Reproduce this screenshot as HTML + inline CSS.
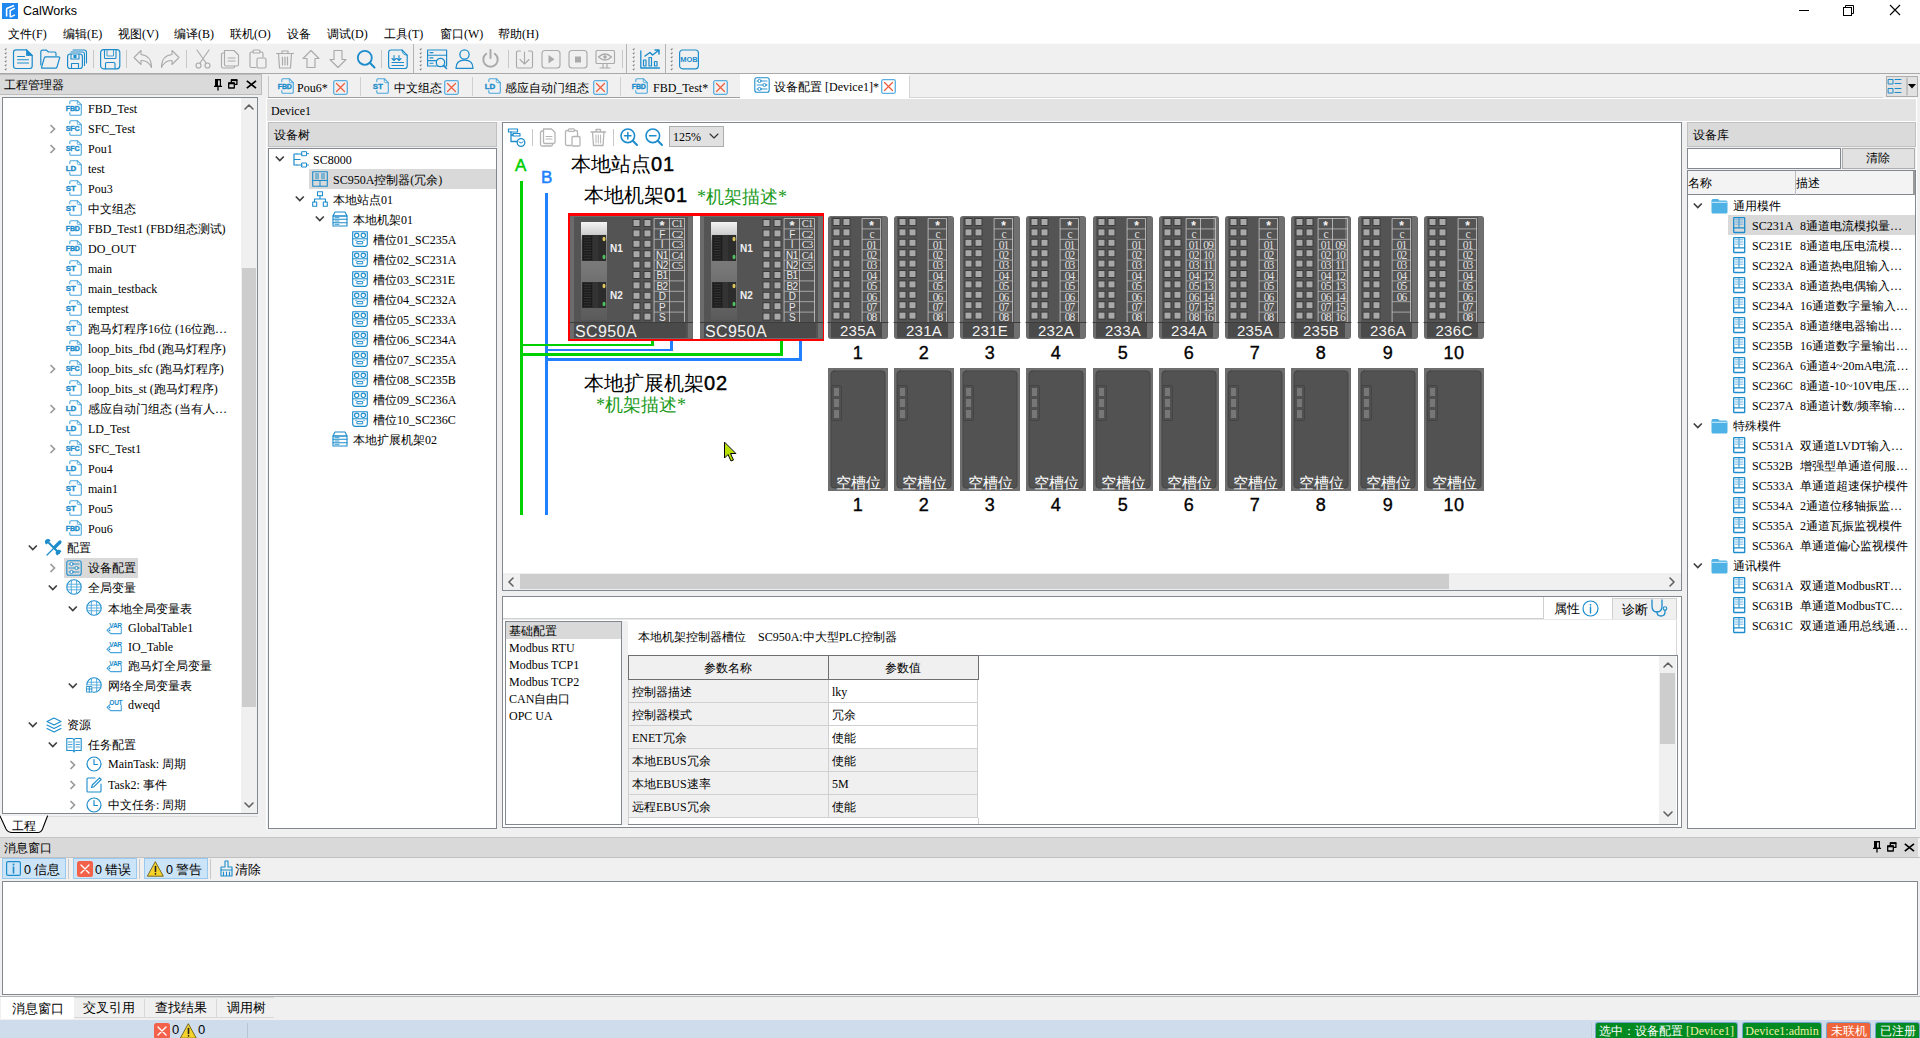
<!DOCTYPE html><html><head><meta charset="utf-8"><style>
*{box-sizing:border-box;margin:0;padding:0}
html,body{width:1920px;height:1038px;overflow:hidden;background:#f0f0f0;font-family:"Liberation Serif",serif;font-size:12px;color:#000}
.t{position:absolute;white-space:nowrap;line-height:16px;height:16px}
.s{font-family:"Liberation Sans",sans-serif}
svg{position:absolute;overflow:visible}
</style></head><body>
<div style="position:absolute;left:0px;top:0px;width:1920px;height:43px;background:#fff"></div>
<svg style="left:2px;top:3px" width="16" height="16"><rect width="16" height="16" fill="#1e88f0"/><path d="M4.6 13.5 V6.2 Q4.6 5.6 5.2 5.3 L12 2.6" stroke="#fff" stroke-width="1.6" fill="none"/><path d="M8.2 14.2 V7.5 L12.8 5.2 M8.2 14.2 L13 11.8" stroke="#fff" stroke-width="1.5" fill="none"/></svg>
<div class="t s" style="left:23px;top:3px;font-size:12.5px;">CalWorks</div>
<svg style="left:1799px;top:5px" width="110" height="12"><path d="M0 5.5 H10" stroke="#000" stroke-width="1"/><rect x="44.5" y="2.5" width="8" height="8" fill="none" stroke="#000"/><path d="M46.5 2.5 V0.5 H54.5 V8.5 H52.5" fill="none" stroke="#000"/><path d="M91 0 L101 10 M101 0 L91 10" stroke="#000" stroke-width="1.1"/></svg>
<div class="t" style="left:8px;top:26px;">文件(F)</div>
<div class="t" style="left:63px;top:26px;">编辑(E)</div>
<div class="t" style="left:118px;top:26px;">视图(V)</div>
<div class="t" style="left:174px;top:26px;">编译(B)</div>
<div class="t" style="left:230px;top:26px;">联机(O)</div>
<div class="t" style="left:287px;top:26px;">设备</div>
<div class="t" style="left:327px;top:26px;">调试(D)</div>
<div class="t" style="left:384px;top:26px;">工具(T)</div>
<div class="t" style="left:440px;top:26px;">窗口(W)</div>
<div class="t" style="left:498px;top:26px;">帮助(H)</div>
<div style="position:absolute;left:0px;top:43px;width:1920px;height:1px;background:#fafafa"></div>
<div style="position:absolute;left:0px;top:44px;width:1920px;height:29px;background:#f0f0f0"></div>
<div style="position:absolute;left:0px;top:73px;width:1920px;height:1px;background:#a9a9a9"></div>
<div style="position:absolute;left:413px;top:44px;width:1px;height:29px;background:#b4b4b4"></div>
<div style="position:absolute;left:626px;top:44px;width:1px;height:29px;background:#b4b4b4"></div>
<div style="position:absolute;left:665px;top:44px;width:1px;height:29px;background:#b4b4b4"></div>
<svg style="left:4px;top:48px" width="3" height="24"><path d="M0.5 2.5 L2.5 0.5" stroke="#8c8c8c" stroke-width="1.1"/><rect x="0" y="2" width="1" height="1" fill="#fff"/><path d="M0.5 6.5 L2.5 4.5" stroke="#8c8c8c" stroke-width="1.1"/><rect x="0" y="6" width="1" height="1" fill="#fff"/><path d="M0.5 10.5 L2.5 8.5" stroke="#8c8c8c" stroke-width="1.1"/><rect x="0" y="10" width="1" height="1" fill="#fff"/><path d="M0.5 14.5 L2.5 12.5" stroke="#8c8c8c" stroke-width="1.1"/><rect x="0" y="14" width="1" height="1" fill="#fff"/><path d="M0.5 18.5 L2.5 16.5" stroke="#8c8c8c" stroke-width="1.1"/><rect x="0" y="18" width="1" height="1" fill="#fff"/><path d="M0.5 22.5 L2.5 20.5" stroke="#8c8c8c" stroke-width="1.1"/><rect x="0" y="22" width="1" height="1" fill="#fff"/></svg>
<svg style="left:419px;top:48px" width="3" height="24"><path d="M0.5 2.5 L2.5 0.5" stroke="#8c8c8c" stroke-width="1.1"/><rect x="0" y="2" width="1" height="1" fill="#fff"/><path d="M0.5 6.5 L2.5 4.5" stroke="#8c8c8c" stroke-width="1.1"/><rect x="0" y="6" width="1" height="1" fill="#fff"/><path d="M0.5 10.5 L2.5 8.5" stroke="#8c8c8c" stroke-width="1.1"/><rect x="0" y="10" width="1" height="1" fill="#fff"/><path d="M0.5 14.5 L2.5 12.5" stroke="#8c8c8c" stroke-width="1.1"/><rect x="0" y="14" width="1" height="1" fill="#fff"/><path d="M0.5 18.5 L2.5 16.5" stroke="#8c8c8c" stroke-width="1.1"/><rect x="0" y="18" width="1" height="1" fill="#fff"/><path d="M0.5 22.5 L2.5 20.5" stroke="#8c8c8c" stroke-width="1.1"/><rect x="0" y="22" width="1" height="1" fill="#fff"/></svg>
<svg style="left:632px;top:48px" width="3" height="24"><path d="M0.5 2.5 L2.5 0.5" stroke="#8c8c8c" stroke-width="1.1"/><rect x="0" y="2" width="1" height="1" fill="#fff"/><path d="M0.5 6.5 L2.5 4.5" stroke="#8c8c8c" stroke-width="1.1"/><rect x="0" y="6" width="1" height="1" fill="#fff"/><path d="M0.5 10.5 L2.5 8.5" stroke="#8c8c8c" stroke-width="1.1"/><rect x="0" y="10" width="1" height="1" fill="#fff"/><path d="M0.5 14.5 L2.5 12.5" stroke="#8c8c8c" stroke-width="1.1"/><rect x="0" y="14" width="1" height="1" fill="#fff"/><path d="M0.5 18.5 L2.5 16.5" stroke="#8c8c8c" stroke-width="1.1"/><rect x="0" y="18" width="1" height="1" fill="#fff"/><path d="M0.5 22.5 L2.5 20.5" stroke="#8c8c8c" stroke-width="1.1"/><rect x="0" y="22" width="1" height="1" fill="#fff"/></svg>
<svg style="left:670px;top:48px" width="3" height="24"><path d="M0.5 2.5 L2.5 0.5" stroke="#8c8c8c" stroke-width="1.1"/><rect x="0" y="2" width="1" height="1" fill="#fff"/><path d="M0.5 6.5 L2.5 4.5" stroke="#8c8c8c" stroke-width="1.1"/><rect x="0" y="6" width="1" height="1" fill="#fff"/><path d="M0.5 10.5 L2.5 8.5" stroke="#8c8c8c" stroke-width="1.1"/><rect x="0" y="10" width="1" height="1" fill="#fff"/><path d="M0.5 14.5 L2.5 12.5" stroke="#8c8c8c" stroke-width="1.1"/><rect x="0" y="14" width="1" height="1" fill="#fff"/><path d="M0.5 18.5 L2.5 16.5" stroke="#8c8c8c" stroke-width="1.1"/><rect x="0" y="18" width="1" height="1" fill="#fff"/><path d="M0.5 22.5 L2.5 20.5" stroke="#8c8c8c" stroke-width="1.1"/><rect x="0" y="22" width="1" height="1" fill="#fff"/></svg>
<div style="position:absolute;left:93px;top:50px;width:1px;height:18px;background:#c8c8c8"></div>
<div style="position:absolute;left:126px;top:50px;width:1px;height:18px;background:#c8c8c8"></div>
<div style="position:absolute;left:186px;top:50px;width:1px;height:18px;background:#c8c8c8"></div>
<div style="position:absolute;left:381px;top:50px;width:1px;height:18px;background:#c8c8c8"></div>
<div style="position:absolute;left:508px;top:50px;width:1px;height:18px;background:#c8c8c8"></div>
<div style="position:absolute;left:622px;top:50px;width:1px;height:18px;background:#c8c8c8"></div>
<svg style="left:13px;top:49px" width="20" height="20" fill="none" stroke-linejoin="round" stroke-linecap="round"><path d="M3 0.8 H13.5 L19.2 6.5 V17 Q19.2 19.5 16.7 19.5 H3 Q0.5 19.5 0.5 17 V3.3 Q0.5 0.8 3 0.8 Z" stroke="#1c8ccc" stroke-width="1.2"/><path d="M13.5 0.8 V6.5 H19.2 Z" fill="#1c8ccc" stroke="#1c8ccc" stroke-width="0.8"/><path d="M4.5 7.5 H11.5 M4.5 10.8 H15.5 M4.5 14 H15.5" stroke="#1c8ccc" stroke-width="1.1"/></svg>
<svg style="left:40px;top:49px" width="20" height="20" fill="none" stroke-linejoin="round" stroke-linecap="round"><path d="M0.8 16 V3 Q0.8 1.2 2.5 1.2 H6.5 L8.5 3 H14.5 Q16 3 16 4.5 V6.5" stroke="#1c8ccc" stroke-width="1.2"/><path d="M1.5 18.5 L4.3 8.8 Q4.6 7.8 5.7 7.8 H18.5 Q20 7.8 19.6 9.2 L17 18 Q16.7 19.2 15.5 19.2 H2.5 Q1.2 19.2 1.5 18.5 Z" stroke="#1c8ccc" stroke-width="1.2"/></svg>
<svg style="left:67px;top:49px" width="20" height="20" fill="none" stroke-linejoin="round" stroke-linecap="round"><path d="M6 1 H17 Q19.5 1 19.5 3.5 V14" stroke="#1c8ccc" stroke-width="1.1"/><path d="M4 3 H15.5 Q17.5 3 17.5 5 V16.5" stroke="#1c8ccc" stroke-width="1.1"/><rect x="0.6" y="5" width="14.8" height="14.5" rx="2.5" stroke="#1c8ccc" stroke-width="1.2"/><path d="M4 5 V10 H12 V5" stroke="#1c8ccc" stroke-width="1.1"/><rect x="6.5" y="6" width="3" height="3" fill="#1c8ccc" stroke="none"/><path d="M4.5 19.5 V14.5 H11.5 V19.5" stroke="#1c8ccc" stroke-width="1.1"/></svg>
<svg style="left:100px;top:49px" width="20" height="20" fill="none" stroke-linejoin="round" stroke-linecap="round"><rect x="0.6" y="0.6" width="19.2" height="19.2" rx="3" stroke="#1c8ccc" stroke-width="1.2"/><path d="M4.5 0.6 V8.5 Q4.5 9.5 5.5 9.5 H15 Q16 9.5 16 8.5 V0.6" stroke="#1c8ccc" stroke-width="1.1"/><path d="M7 1 V7 H13.5 V1" stroke="#1c8ccc" stroke-width="0.8"/><path d="M5.5 19.8 V14.5 Q5.5 13.5 6.5 13.5 H14 Q15 13.5 15 14.5 V19.8" stroke="#1c8ccc" stroke-width="1.1"/></svg>
<svg style="left:133px;top:49px" width="20" height="20" fill="none" stroke-linejoin="round" stroke-linecap="round"><path d="M8 1.5 L1 8.5 L8 15.5 V11.5 Q15 11 18.5 18.5 Q18.5 6.5 8 5.5 Z" stroke="#aaaaaa" stroke-width="1.1"/></svg>
<svg style="left:160px;top:49px" width="20" height="20" fill="none" stroke-linejoin="round" stroke-linecap="round"><path d="M12 1.5 L19 8.5 L12 15.5 V11.5 Q5 11 1.5 18.5 Q1.5 6.5 12 5.5 Z" stroke="#aaaaaa" stroke-width="1.1"/></svg>
<svg style="left:193px;top:49px" width="20" height="20" fill="none" stroke-linejoin="round" stroke-linecap="round"><path d="M4 1 L13 14 M16 1 L7 14" stroke="#aaaaaa" stroke-width="1.15"/><circle cx="5.5" cy="16.5" r="2.5" stroke="#aaaaaa" stroke-width="1.15"/><circle cx="14.5" cy="16.5" r="2.5" stroke="#aaaaaa" stroke-width="1.15"/></svg>
<svg style="left:220px;top:49px" width="20" height="20" fill="none" stroke-linejoin="round" stroke-linecap="round"><path d="M4 4 H3 Q1.5 4 1.5 5.5 V17.5 Q1.5 19 3 19 H13 Q14.5 19 14.5 17.5 V17" stroke="#aaaaaa" stroke-width="1.15"/><path d="M4.5 1.5 H14 L18.5 6 V15.5 Q18.5 17 17 17 H6 Q4.5 17 4.5 15.5 Z" stroke="#aaaaaa" stroke-width="1.15"/><path d="M8 9 H15 M8 12 H15" stroke="#aaaaaa" stroke-width="1.15"/></svg>
<svg style="left:248px;top:49px" width="20" height="20" fill="none" stroke-linejoin="round" stroke-linecap="round"><path d="M5 3 H3.5 Q2 3 2 4.5 V17 Q2 18.5 3.5 18.5 H8" stroke="#aaaaaa" stroke-width="1.15"/><path d="M12 3 H13.5 Q15 3 15 4.5 V8" stroke="#aaaaaa" stroke-width="1.15"/><rect x="5" y="1" width="7" height="3" rx="1" stroke="#aaaaaa" stroke-width="1.15"/><rect x="9" y="9" width="9" height="10" rx="1.5" stroke="#aaaaaa" stroke-width="1.15"/></svg>
<svg style="left:275px;top:49px" width="20" height="20" fill="none" stroke-linejoin="round" stroke-linecap="round"><path d="M1.5 4.5 H18.5 M7 4.5 V2 H13 V4.5" stroke="#aaaaaa" stroke-width="1.15"/><path d="M3.5 4.5 L4.5 19 H15.5 L16.5 4.5" stroke="#aaaaaa" stroke-width="1.15"/><path d="M7.5 8 V16 M10 8 V16 M12.5 8 V16" stroke="#aaaaaa" stroke-width="1.2"/></svg>
<svg style="left:301px;top:49px" width="20" height="20" fill="none" stroke-linejoin="round" stroke-linecap="round"><path d="M10 1.5 L18 9.5 H14 V18.5 H6 V9.5 H2 Z" stroke="#aaaaaa" stroke-width="1.15"/></svg>
<svg style="left:328px;top:49px" width="20" height="20" fill="none" stroke-linejoin="round" stroke-linecap="round"><path d="M10 18.5 L18 10.5 H14 V1.5 H6 V10.5 H2 Z" stroke="#aaaaaa" stroke-width="1.15"/></svg>
<svg style="left:356px;top:49px" width="20" height="20" fill="none" stroke-linejoin="round" stroke-linecap="round"><circle cx="8.8" cy="8.8" r="7" stroke="#1c8ccc" stroke-width="1.8"/><path d="M13.8 13.8 L18.5 18.5" stroke="#1c8ccc" stroke-width="2"/></svg>
<svg style="left:388px;top:49px" width="20" height="20" fill="none" stroke-linejoin="round" stroke-linecap="round"><path d="M3 1 H14 L19.2 6.2 V17 Q19.2 19.5 16.7 19.5 H3 Q0.6 19.5 0.6 17 V3.5 Q0.6 1 3 1 Z" stroke="#1c8ccc" stroke-width="1.2"/><path d="M14 1 Q14 6.2 19.2 6.2" stroke="#1c8ccc" stroke-width="0.9"/><path d="M6 6.5 V11.5 M4 9.5 L6 11.5 L8 9.5 M11 6.5 V11.5 M9 9.5 L11 11.5 L13 9.5 M4 13.5 H15.5 M4 16.5 H15.5" stroke="#1c8ccc" stroke-width="1.1"/></svg>
<svg style="left:427px;top:49px" width="20" height="20" fill="none" stroke-linejoin="round" stroke-linecap="round"><rect x="0.6" y="1" width="19" height="16" stroke="#1c8ccc" stroke-width="1.2"/><path d="M0.6 6.3 H19.6 M0.6 11.6 H11" stroke="#1c8ccc" stroke-width="1.1"/><path d="M3 3.6 H6 M3 8.9 H6 M3 14.2 H6" stroke="#1c8ccc" stroke-width="1.1"/><circle cx="13.5" cy="13.5" r="4.2" fill="#f0f0f0" stroke="#1c8ccc" stroke-width="1.3"/><path d="M16.5 16.5 L19.5 19.5" stroke="#1c8ccc" stroke-width="1.6"/></svg>
<svg style="left:455px;top:49px" width="20" height="20" fill="none" stroke-linejoin="round" stroke-linecap="round"><circle cx="9.5" cy="5.5" r="4.6" stroke="#1c8ccc" stroke-width="1.3"/><path d="M1 19.3 Q1 11.2 9.5 11.2 Q18 11.2 18 19.3 Z" stroke="#1c8ccc" stroke-width="1.3"/></svg>
<svg style="left:481px;top:49px" width="20" height="20" fill="none" stroke-linejoin="round" stroke-linecap="round"><path d="M5.2 4.8 A7.2 7.2 0 1 0 13.8 4.8" stroke="#aaaaaa" stroke-width="2"/><path d="M9.5 1 V9" stroke="#aaaaaa" stroke-width="2"/></svg>
<svg style="left:515px;top:49px" width="20" height="20" fill="none" stroke-linejoin="round" stroke-linecap="round"><path d="M5.5 2 H3 Q1.5 2 1.5 3.5 V17.5 Q1.5 19 3 19 H16 Q17.5 19 17.5 17.5 V3.5 Q17.5 2 16 2 H13.5" stroke="#aaaaaa" stroke-width="1.15"/><path d="M9.5 3 V15 M5 10.5 L9.5 15 L14 10.5" stroke="#aaaaaa" stroke-width="1.15"/></svg>
<svg style="left:541px;top:49px" width="20" height="20" fill="none" stroke-linejoin="round" stroke-linecap="round"><rect x="1" y="1.5" width="18" height="17.5" rx="3" stroke="#aaaaaa" stroke-width="1.15"/><path d="M7.5 6 L13.5 10.2 L7.5 14.5 Z" fill="#aaaaaa" stroke="none"/></svg>
<svg style="left:568px;top:49px" width="20" height="20" fill="none" stroke-linejoin="round" stroke-linecap="round"><rect x="1" y="1.5" width="18" height="17.5" rx="3" stroke="#aaaaaa" stroke-width="1.15"/><rect x="7" y="7.5" width="6" height="6" fill="#aaaaaa" stroke="none"/></svg>
<svg style="left:595px;top:49px" width="20" height="20" fill="none" stroke-linejoin="round" stroke-linecap="round"><rect x="1" y="1.5" width="18.5" height="13" rx="1" stroke="#aaaaaa" stroke-width="1.15"/><path d="M3.5 8 Q10 2 16.5 8 Q10 14 3.5 8 Z" stroke="#aaaaaa" stroke-width="1.2"/><circle cx="10" cy="8" r="1.8" fill="#aaaaaa" stroke="none"/><path d="M8 14.5 V18.5 M12 14.5 V18.5 M5 19 H15" stroke="#aaaaaa" stroke-width="1.15"/></svg>
<svg style="left:640px;top:49px" width="20" height="20" fill="none" stroke-linejoin="round" stroke-linecap="round"><path d="M0.8 2 V19 H19.5" stroke="#1c8ccc" stroke-width="1.3"/><rect x="3.5" y="11" width="2.5" height="6" stroke="#1c8ccc" stroke-width="1.2"/><rect x="9" y="8.5" width="2.5" height="8.5" stroke="#1c8ccc" stroke-width="1.2"/><rect x="14.5" y="12.5" width="2.5" height="4.5" stroke="#1c8ccc" stroke-width="1.2"/><path d="M5 7 L10 3.5 L12.5 6 L18.5 1.5 M15 1 H19 V5" stroke="#1c8ccc" stroke-width="1.5"/></svg>
<svg style="left:679px;top:49px" width="20" height="20" fill="none" stroke-linejoin="round" stroke-linecap="round"><rect x="0.6" y="1" width="18.8" height="18.8" rx="3" stroke="#1c8ccc" stroke-width="1.2"/><text x="10" y="13.3" text-anchor="middle" font-family="Liberation Sans" font-weight="bold" font-size="7.5" fill="#1c8ccc" stroke="none">MOB</text></svg>
<div style="position:absolute;left:-1px;top:74px;width:263px;height:21px;background:#dadada;border:1px solid #bcbcbc"></div>
<div class="t" style="left:4px;top:77px;">工程管理器</div>
<svg style="left:213px;top:79px" width="10" height="12" fill="none" stroke-linejoin="round" stroke-linecap="round" ><path d="M2 0.7 H8 M1 7.3 H9" stroke="#000" stroke-width="1.3" stroke-linecap="butt"/><rect x="2.6" y="0.7" width="4.8" height="6.6" fill="none" stroke="#000" stroke-width="1.2"/><rect x="2.6" y="0.7" width="2.4" height="6.6" fill="#000"/><path d="M5 7.3 V11" stroke="#000" stroke-width="1.3"/></svg>
<svg style="left:228px;top:79px" width="10" height="10" fill="none" stroke-linejoin="round" stroke-linecap="round" ><rect x="3.3" y="0.8" width="5.6" height="4.6" stroke="#000" stroke-width="1.3"/><rect x="0.7" y="4" width="5.6" height="5" fill="#dadada" stroke="#000" stroke-width="1.3"/><rect x="3" y="0.3" width="6.3" height="1.8" fill="#000" stroke="none"/><rect x="0.3" y="3.5" width="6.3" height="1.8" fill="#000" stroke="none"/></svg>
<svg style="left:246px;top:80px" width="11" height="9" fill="none" stroke-linejoin="round" stroke-linecap="round" ><path d="M0.8 0.8 L10 8.2 M10 0.8 L0.8 8.2" stroke="#000" stroke-width="1.7" stroke-linecap="butt"/></svg>
<div style="position:absolute;left:2px;top:97px;width:256px;height:717px;background:#fff;border:1px solid #828790"></div>
<div style="position:absolute;left:241px;top:98px;width:16px;height:715px;background:#f0f0f0"></div>
<svg style="left:244px;top:103px" width="10" height="7" fill="none" stroke-linejoin="round" stroke-linecap="round" ><path d="M1 6 L5 2 L9 6" stroke="#606060" stroke-width="1.6"/></svg>
<svg style="left:244px;top:802px" width="10" height="7" fill="none" stroke-linejoin="round" stroke-linecap="round" ><path d="M1 1 L5 5 L9 1" stroke="#606060" stroke-width="1.6"/></svg>
<div style="position:absolute;left:242px;top:268px;width:14px;height:439px;background:#cdcdcd"></div>
<svg style="left:66px;top:100px" width="16" height="16" fill="none" stroke-linejoin="round" stroke-linecap="round" ><path d="M3.8 3.6 V2 Q3.8 0.7 5.1 0.7 H11.3 L15.3 4.7 V14 Q15.3 15.3 14 15.3 H5.1 Q3.8 15.3 3.8 14 V12.6" stroke="#4aa6dc" stroke-width="1.1"/><path d="M11.3 0.7 V3.4 Q11.3 4.7 12.6 4.7 H15.3" stroke="#4aa6dc" stroke-width="0.9"/><text x="-0.2" y="11" font-family="Liberation Sans" font-weight="bold" font-size="7" fill="#1c8ccc" stroke="#1c8ccc" stroke-width="0.35" letter-spacing="-0.15">FBD</text></svg>
<div class="t" style="left:88px;top:101px;">FBD_Test</div>
<svg style="left:49px;top:124px" width="8" height="10" fill="none" stroke-linejoin="round" stroke-linecap="round" ><path d="M1.5 1 L5.5 5 L1.5 9" stroke="#9a9a9a" stroke-width="1.7" stroke-linecap="butt" stroke-linejoin="miter"/></svg>
<svg style="left:66px;top:120px" width="16" height="16" fill="none" stroke-linejoin="round" stroke-linecap="round" ><path d="M3.8 3.6 V2 Q3.8 0.7 5.1 0.7 H11.3 L15.3 4.7 V14 Q15.3 15.3 14 15.3 H5.1 Q3.8 15.3 3.8 14 V12.6" stroke="#4aa6dc" stroke-width="1.1"/><path d="M11.3 0.7 V3.4 Q11.3 4.7 12.6 4.7 H15.3" stroke="#4aa6dc" stroke-width="0.9"/><text x="-0.2" y="11" font-family="Liberation Sans" font-weight="bold" font-size="7" fill="#1c8ccc" stroke="#1c8ccc" stroke-width="0.35" letter-spacing="-0.15">SFC</text></svg>
<div class="t" style="left:88px;top:121px;">SFC_Test</div>
<svg style="left:49px;top:144px" width="8" height="10" fill="none" stroke-linejoin="round" stroke-linecap="round" ><path d="M1.5 1 L5.5 5 L1.5 9" stroke="#9a9a9a" stroke-width="1.7" stroke-linecap="butt" stroke-linejoin="miter"/></svg>
<svg style="left:66px;top:140px" width="16" height="16" fill="none" stroke-linejoin="round" stroke-linecap="round" ><path d="M3.8 3.6 V2 Q3.8 0.7 5.1 0.7 H11.3 L15.3 4.7 V14 Q15.3 15.3 14 15.3 H5.1 Q3.8 15.3 3.8 14 V12.6" stroke="#4aa6dc" stroke-width="1.1"/><path d="M11.3 0.7 V3.4 Q11.3 4.7 12.6 4.7 H15.3" stroke="#4aa6dc" stroke-width="0.9"/><text x="-0.2" y="11" font-family="Liberation Sans" font-weight="bold" font-size="7" fill="#1c8ccc" stroke="#1c8ccc" stroke-width="0.35" letter-spacing="-0.15">SFC</text></svg>
<div class="t" style="left:88px;top:141px;">Pou1</div>
<svg style="left:66px;top:160px" width="16" height="16" fill="none" stroke-linejoin="round" stroke-linecap="round" ><path d="M3.8 3.6 V2 Q3.8 0.7 5.1 0.7 H11.3 L15.3 4.7 V14 Q15.3 15.3 14 15.3 H5.1 Q3.8 15.3 3.8 14 V12.6" stroke="#4aa6dc" stroke-width="1.1"/><path d="M11.3 0.7 V3.4 Q11.3 4.7 12.6 4.7 H15.3" stroke="#4aa6dc" stroke-width="0.9"/><text x="-0.2" y="11" font-family="Liberation Sans" font-weight="bold" font-size="8" fill="#1c8ccc" stroke="#1c8ccc" stroke-width="0.35" letter-spacing="-0.15">LD</text></svg>
<div class="t" style="left:88px;top:161px;">test</div>
<svg style="left:66px;top:180px" width="16" height="16" fill="none" stroke-linejoin="round" stroke-linecap="round" ><path d="M3.8 3.6 V2 Q3.8 0.7 5.1 0.7 H11.3 L15.3 4.7 V14 Q15.3 15.3 14 15.3 H5.1 Q3.8 15.3 3.8 14 V12.6" stroke="#4aa6dc" stroke-width="1.1"/><path d="M11.3 0.7 V3.4 Q11.3 4.7 12.6 4.7 H15.3" stroke="#4aa6dc" stroke-width="0.9"/><text x="-0.2" y="11" font-family="Liberation Sans" font-weight="bold" font-size="8" fill="#1c8ccc" stroke="#1c8ccc" stroke-width="0.35" letter-spacing="-0.15">ST</text></svg>
<div class="t" style="left:88px;top:181px;">Pou3</div>
<svg style="left:66px;top:200px" width="16" height="16" fill="none" stroke-linejoin="round" stroke-linecap="round" ><path d="M3.8 3.6 V2 Q3.8 0.7 5.1 0.7 H11.3 L15.3 4.7 V14 Q15.3 15.3 14 15.3 H5.1 Q3.8 15.3 3.8 14 V12.6" stroke="#4aa6dc" stroke-width="1.1"/><path d="M11.3 0.7 V3.4 Q11.3 4.7 12.6 4.7 H15.3" stroke="#4aa6dc" stroke-width="0.9"/><text x="-0.2" y="11" font-family="Liberation Sans" font-weight="bold" font-size="8" fill="#1c8ccc" stroke="#1c8ccc" stroke-width="0.35" letter-spacing="-0.15">ST</text></svg>
<div class="t" style="left:88px;top:201px;">中文组态</div>
<svg style="left:66px;top:220px" width="16" height="16" fill="none" stroke-linejoin="round" stroke-linecap="round" ><path d="M3.8 3.6 V2 Q3.8 0.7 5.1 0.7 H11.3 L15.3 4.7 V14 Q15.3 15.3 14 15.3 H5.1 Q3.8 15.3 3.8 14 V12.6" stroke="#4aa6dc" stroke-width="1.1"/><path d="M11.3 0.7 V3.4 Q11.3 4.7 12.6 4.7 H15.3" stroke="#4aa6dc" stroke-width="0.9"/><text x="-0.2" y="11" font-family="Liberation Sans" font-weight="bold" font-size="7" fill="#1c8ccc" stroke="#1c8ccc" stroke-width="0.35" letter-spacing="-0.15">FBD</text></svg>
<div class="t" style="left:88px;top:221px;">FBD_Test1 (FBD组态测试)</div>
<svg style="left:66px;top:240px" width="16" height="16" fill="none" stroke-linejoin="round" stroke-linecap="round" ><path d="M3.8 3.6 V2 Q3.8 0.7 5.1 0.7 H11.3 L15.3 4.7 V14 Q15.3 15.3 14 15.3 H5.1 Q3.8 15.3 3.8 14 V12.6" stroke="#4aa6dc" stroke-width="1.1"/><path d="M11.3 0.7 V3.4 Q11.3 4.7 12.6 4.7 H15.3" stroke="#4aa6dc" stroke-width="0.9"/><text x="-0.2" y="11" font-family="Liberation Sans" font-weight="bold" font-size="7" fill="#1c8ccc" stroke="#1c8ccc" stroke-width="0.35" letter-spacing="-0.15">FBD</text></svg>
<div class="t" style="left:88px;top:241px;">DO_OUT</div>
<svg style="left:66px;top:260px" width="16" height="16" fill="none" stroke-linejoin="round" stroke-linecap="round" ><path d="M3.8 3.6 V2 Q3.8 0.7 5.1 0.7 H11.3 L15.3 4.7 V14 Q15.3 15.3 14 15.3 H5.1 Q3.8 15.3 3.8 14 V12.6" stroke="#4aa6dc" stroke-width="1.1"/><path d="M11.3 0.7 V3.4 Q11.3 4.7 12.6 4.7 H15.3" stroke="#4aa6dc" stroke-width="0.9"/><text x="-0.2" y="11" font-family="Liberation Sans" font-weight="bold" font-size="8" fill="#1c8ccc" stroke="#1c8ccc" stroke-width="0.35" letter-spacing="-0.15">ST</text></svg>
<div class="t" style="left:88px;top:261px;">main</div>
<svg style="left:66px;top:280px" width="16" height="16" fill="none" stroke-linejoin="round" stroke-linecap="round" ><path d="M3.8 3.6 V2 Q3.8 0.7 5.1 0.7 H11.3 L15.3 4.7 V14 Q15.3 15.3 14 15.3 H5.1 Q3.8 15.3 3.8 14 V12.6" stroke="#4aa6dc" stroke-width="1.1"/><path d="M11.3 0.7 V3.4 Q11.3 4.7 12.6 4.7 H15.3" stroke="#4aa6dc" stroke-width="0.9"/><text x="-0.2" y="11" font-family="Liberation Sans" font-weight="bold" font-size="8" fill="#1c8ccc" stroke="#1c8ccc" stroke-width="0.35" letter-spacing="-0.15">ST</text></svg>
<div class="t" style="left:88px;top:281px;">main_testback</div>
<svg style="left:66px;top:300px" width="16" height="16" fill="none" stroke-linejoin="round" stroke-linecap="round" ><path d="M3.8 3.6 V2 Q3.8 0.7 5.1 0.7 H11.3 L15.3 4.7 V14 Q15.3 15.3 14 15.3 H5.1 Q3.8 15.3 3.8 14 V12.6" stroke="#4aa6dc" stroke-width="1.1"/><path d="M11.3 0.7 V3.4 Q11.3 4.7 12.6 4.7 H15.3" stroke="#4aa6dc" stroke-width="0.9"/><text x="-0.2" y="11" font-family="Liberation Sans" font-weight="bold" font-size="8" fill="#1c8ccc" stroke="#1c8ccc" stroke-width="0.35" letter-spacing="-0.15">ST</text></svg>
<div class="t" style="left:88px;top:301px;">temptest</div>
<svg style="left:66px;top:320px" width="16" height="16" fill="none" stroke-linejoin="round" stroke-linecap="round" ><path d="M3.8 3.6 V2 Q3.8 0.7 5.1 0.7 H11.3 L15.3 4.7 V14 Q15.3 15.3 14 15.3 H5.1 Q3.8 15.3 3.8 14 V12.6" stroke="#4aa6dc" stroke-width="1.1"/><path d="M11.3 0.7 V3.4 Q11.3 4.7 12.6 4.7 H15.3" stroke="#4aa6dc" stroke-width="0.9"/><text x="-0.2" y="11" font-family="Liberation Sans" font-weight="bold" font-size="8" fill="#1c8ccc" stroke="#1c8ccc" stroke-width="0.35" letter-spacing="-0.15">ST</text></svg>
<div class="t" style="left:88px;top:321px;">跑马灯程序16位 (16位跑…</div>
<svg style="left:66px;top:340px" width="16" height="16" fill="none" stroke-linejoin="round" stroke-linecap="round" ><path d="M3.8 3.6 V2 Q3.8 0.7 5.1 0.7 H11.3 L15.3 4.7 V14 Q15.3 15.3 14 15.3 H5.1 Q3.8 15.3 3.8 14 V12.6" stroke="#4aa6dc" stroke-width="1.1"/><path d="M11.3 0.7 V3.4 Q11.3 4.7 12.6 4.7 H15.3" stroke="#4aa6dc" stroke-width="0.9"/><text x="-0.2" y="11" font-family="Liberation Sans" font-weight="bold" font-size="7" fill="#1c8ccc" stroke="#1c8ccc" stroke-width="0.35" letter-spacing="-0.15">FBD</text></svg>
<div class="t" style="left:88px;top:341px;">loop_bits_fbd (跑马灯程序)</div>
<svg style="left:49px;top:364px" width="8" height="10" fill="none" stroke-linejoin="round" stroke-linecap="round" ><path d="M1.5 1 L5.5 5 L1.5 9" stroke="#9a9a9a" stroke-width="1.7" stroke-linecap="butt" stroke-linejoin="miter"/></svg>
<svg style="left:66px;top:360px" width="16" height="16" fill="none" stroke-linejoin="round" stroke-linecap="round" ><path d="M3.8 3.6 V2 Q3.8 0.7 5.1 0.7 H11.3 L15.3 4.7 V14 Q15.3 15.3 14 15.3 H5.1 Q3.8 15.3 3.8 14 V12.6" stroke="#4aa6dc" stroke-width="1.1"/><path d="M11.3 0.7 V3.4 Q11.3 4.7 12.6 4.7 H15.3" stroke="#4aa6dc" stroke-width="0.9"/><text x="-0.2" y="11" font-family="Liberation Sans" font-weight="bold" font-size="7" fill="#1c8ccc" stroke="#1c8ccc" stroke-width="0.35" letter-spacing="-0.15">SFC</text></svg>
<div class="t" style="left:88px;top:361px;">loop_bits_sfc (跑马灯程序)</div>
<svg style="left:66px;top:380px" width="16" height="16" fill="none" stroke-linejoin="round" stroke-linecap="round" ><path d="M3.8 3.6 V2 Q3.8 0.7 5.1 0.7 H11.3 L15.3 4.7 V14 Q15.3 15.3 14 15.3 H5.1 Q3.8 15.3 3.8 14 V12.6" stroke="#4aa6dc" stroke-width="1.1"/><path d="M11.3 0.7 V3.4 Q11.3 4.7 12.6 4.7 H15.3" stroke="#4aa6dc" stroke-width="0.9"/><text x="-0.2" y="11" font-family="Liberation Sans" font-weight="bold" font-size="8" fill="#1c8ccc" stroke="#1c8ccc" stroke-width="0.35" letter-spacing="-0.15">ST</text></svg>
<div class="t" style="left:88px;top:381px;">loop_bits_st (跑马灯程序)</div>
<svg style="left:49px;top:404px" width="8" height="10" fill="none" stroke-linejoin="round" stroke-linecap="round" ><path d="M1.5 1 L5.5 5 L1.5 9" stroke="#9a9a9a" stroke-width="1.7" stroke-linecap="butt" stroke-linejoin="miter"/></svg>
<svg style="left:66px;top:400px" width="16" height="16" fill="none" stroke-linejoin="round" stroke-linecap="round" ><path d="M3.8 3.6 V2 Q3.8 0.7 5.1 0.7 H11.3 L15.3 4.7 V14 Q15.3 15.3 14 15.3 H5.1 Q3.8 15.3 3.8 14 V12.6" stroke="#4aa6dc" stroke-width="1.1"/><path d="M11.3 0.7 V3.4 Q11.3 4.7 12.6 4.7 H15.3" stroke="#4aa6dc" stroke-width="0.9"/><text x="-0.2" y="11" font-family="Liberation Sans" font-weight="bold" font-size="8" fill="#1c8ccc" stroke="#1c8ccc" stroke-width="0.35" letter-spacing="-0.15">LD</text></svg>
<div class="t" style="left:88px;top:401px;">感应自动门组态 (当有人…</div>
<svg style="left:66px;top:420px" width="16" height="16" fill="none" stroke-linejoin="round" stroke-linecap="round" ><path d="M3.8 3.6 V2 Q3.8 0.7 5.1 0.7 H11.3 L15.3 4.7 V14 Q15.3 15.3 14 15.3 H5.1 Q3.8 15.3 3.8 14 V12.6" stroke="#4aa6dc" stroke-width="1.1"/><path d="M11.3 0.7 V3.4 Q11.3 4.7 12.6 4.7 H15.3" stroke="#4aa6dc" stroke-width="0.9"/><text x="-0.2" y="11" font-family="Liberation Sans" font-weight="bold" font-size="8" fill="#1c8ccc" stroke="#1c8ccc" stroke-width="0.35" letter-spacing="-0.15">LD</text></svg>
<div class="t" style="left:88px;top:421px;">LD_Test</div>
<svg style="left:49px;top:444px" width="8" height="10" fill="none" stroke-linejoin="round" stroke-linecap="round" ><path d="M1.5 1 L5.5 5 L1.5 9" stroke="#9a9a9a" stroke-width="1.7" stroke-linecap="butt" stroke-linejoin="miter"/></svg>
<svg style="left:66px;top:440px" width="16" height="16" fill="none" stroke-linejoin="round" stroke-linecap="round" ><path d="M3.8 3.6 V2 Q3.8 0.7 5.1 0.7 H11.3 L15.3 4.7 V14 Q15.3 15.3 14 15.3 H5.1 Q3.8 15.3 3.8 14 V12.6" stroke="#4aa6dc" stroke-width="1.1"/><path d="M11.3 0.7 V3.4 Q11.3 4.7 12.6 4.7 H15.3" stroke="#4aa6dc" stroke-width="0.9"/><text x="-0.2" y="11" font-family="Liberation Sans" font-weight="bold" font-size="7" fill="#1c8ccc" stroke="#1c8ccc" stroke-width="0.35" letter-spacing="-0.15">SFC</text></svg>
<div class="t" style="left:88px;top:441px;">SFC_Test1</div>
<svg style="left:66px;top:460px" width="16" height="16" fill="none" stroke-linejoin="round" stroke-linecap="round" ><path d="M3.8 3.6 V2 Q3.8 0.7 5.1 0.7 H11.3 L15.3 4.7 V14 Q15.3 15.3 14 15.3 H5.1 Q3.8 15.3 3.8 14 V12.6" stroke="#4aa6dc" stroke-width="1.1"/><path d="M11.3 0.7 V3.4 Q11.3 4.7 12.6 4.7 H15.3" stroke="#4aa6dc" stroke-width="0.9"/><text x="-0.2" y="11" font-family="Liberation Sans" font-weight="bold" font-size="8" fill="#1c8ccc" stroke="#1c8ccc" stroke-width="0.35" letter-spacing="-0.15">LD</text></svg>
<div class="t" style="left:88px;top:461px;">Pou4</div>
<svg style="left:66px;top:480px" width="16" height="16" fill="none" stroke-linejoin="round" stroke-linecap="round" ><path d="M3.8 3.6 V2 Q3.8 0.7 5.1 0.7 H11.3 L15.3 4.7 V14 Q15.3 15.3 14 15.3 H5.1 Q3.8 15.3 3.8 14 V12.6" stroke="#4aa6dc" stroke-width="1.1"/><path d="M11.3 0.7 V3.4 Q11.3 4.7 12.6 4.7 H15.3" stroke="#4aa6dc" stroke-width="0.9"/><text x="-0.2" y="11" font-family="Liberation Sans" font-weight="bold" font-size="8" fill="#1c8ccc" stroke="#1c8ccc" stroke-width="0.35" letter-spacing="-0.15">ST</text></svg>
<div class="t" style="left:88px;top:481px;">main1</div>
<svg style="left:66px;top:500px" width="16" height="16" fill="none" stroke-linejoin="round" stroke-linecap="round" ><path d="M3.8 3.6 V2 Q3.8 0.7 5.1 0.7 H11.3 L15.3 4.7 V14 Q15.3 15.3 14 15.3 H5.1 Q3.8 15.3 3.8 14 V12.6" stroke="#4aa6dc" stroke-width="1.1"/><path d="M11.3 0.7 V3.4 Q11.3 4.7 12.6 4.7 H15.3" stroke="#4aa6dc" stroke-width="0.9"/><text x="-0.2" y="11" font-family="Liberation Sans" font-weight="bold" font-size="8" fill="#1c8ccc" stroke="#1c8ccc" stroke-width="0.35" letter-spacing="-0.15">ST</text></svg>
<div class="t" style="left:88px;top:501px;">Pou5</div>
<svg style="left:66px;top:520px" width="16" height="16" fill="none" stroke-linejoin="round" stroke-linecap="round" ><path d="M3.8 3.6 V2 Q3.8 0.7 5.1 0.7 H11.3 L15.3 4.7 V14 Q15.3 15.3 14 15.3 H5.1 Q3.8 15.3 3.8 14 V12.6" stroke="#4aa6dc" stroke-width="1.1"/><path d="M11.3 0.7 V3.4 Q11.3 4.7 12.6 4.7 H15.3" stroke="#4aa6dc" stroke-width="0.9"/><text x="-0.2" y="11" font-family="Liberation Sans" font-weight="bold" font-size="7" fill="#1c8ccc" stroke="#1c8ccc" stroke-width="0.35" letter-spacing="-0.15">FBD</text></svg>
<div class="t" style="left:88px;top:521px;">Pou6</div>
<svg style="left:28px;top:544px" width="10" height="8" fill="none" stroke-linejoin="round" stroke-linecap="round" ><path d="M0.8 1.5 L4.8 5.5 L8.8 1.5" stroke="#404040" stroke-width="1.7" stroke-linecap="butt" stroke-linejoin="miter"/></svg>
<svg style="left:46px;top:540px" width="16" height="16" fill="none" stroke-linejoin="round" stroke-linecap="round" ><path d="M1 15 L9.5 6.5" stroke="#1c8ccc" stroke-width="1.3"/><path d="M8.5 7.5 L14 2" stroke="#1c8ccc" stroke-width="3.2" stroke-linecap="round"/><path d="M3 3 L13 13" stroke="#1c8ccc" stroke-width="2"/><path d="M4.6 0.6 A3 3 0 1 0 0.6 4.6 L2.6 2.6 Z" fill="#1c8ccc" stroke="none"/><path d="M15.4 11.4 A3 3 0 1 0 11.4 15.4 L13.4 13.4 Z" fill="#1c8ccc" stroke="none"/></svg>
<div class="t" style="left:67px;top:540px;">配置</div>
<div style="position:absolute;left:64px;top:558px;width:74px;height:20px;background:#d9d9d9"></div>
<svg style="left:49px;top:563px" width="8" height="10" fill="none" stroke-linejoin="round" stroke-linecap="round" ><path d="M1.5 1 L5.5 5 L1.5 9" stroke="#9a9a9a" stroke-width="1.7" stroke-linecap="butt" stroke-linejoin="miter"/></svg>
<svg style="left:66px;top:560px" width="16" height="16" fill="none" stroke-linejoin="round" stroke-linecap="round" ><rect x="0.8" y="0.8" width="14.4" height="14.4" rx="2" stroke="#1c8ccc" stroke-width="1.1"/><path d="M3 4 H13 M3 8 H13 M3 12 H13" stroke="#1c8ccc" stroke-width="0.9"/><circle cx="5.5" cy="4" r="1.6" fill="#fff" stroke="#1c8ccc" stroke-width="0.9"/><circle cx="10.5" cy="8" r="1.6" fill="#fff" stroke="#1c8ccc" stroke-width="0.9"/><circle cx="5.5" cy="12" r="1.6" fill="#fff" stroke="#1c8ccc" stroke-width="0.9"/></svg>
<div class="t" style="left:88px;top:560px;">设备配置</div>
<svg style="left:48px;top:584px" width="10" height="8" fill="none" stroke-linejoin="round" stroke-linecap="round" ><path d="M0.8 1.5 L4.8 5.5 L8.8 1.5" stroke="#404040" stroke-width="1.7" stroke-linecap="butt" stroke-linejoin="miter"/></svg>
<svg style="left:66px;top:579px" width="16" height="16" fill="none" stroke-linejoin="round" stroke-linecap="round" ><circle cx="8" cy="8" r="7.2" stroke="#1c8ccc" stroke-width="1.1"/><path d="M5.5 1.3 Q4.8 8 5.5 14.7 M10.5 1.3 Q11.2 8 10.5 14.7 M1 5.2 H15 M0.8 8 H15.2 M1 10.8 H15" stroke="#4aa6dc" stroke-width="0.9"/></svg>
<div class="t" style="left:88px;top:580px;">全局变量</div>
<svg style="left:68px;top:605px" width="10" height="8" fill="none" stroke-linejoin="round" stroke-linecap="round" ><path d="M0.8 1.5 L4.8 5.5 L8.8 1.5" stroke="#404040" stroke-width="1.7" stroke-linecap="butt" stroke-linejoin="miter"/></svg>
<svg style="left:86px;top:600px" width="16" height="16" fill="none" stroke-linejoin="round" stroke-linecap="round" ><circle cx="8" cy="8" r="7.2" stroke="#1c8ccc" stroke-width="1.1"/><path d="M5.5 1.3 Q4.8 8 5.5 14.7 M10.5 1.3 Q11.2 8 10.5 14.7 M1 5.2 H15 M0.8 8 H15.2 M1 10.8 H15" stroke="#4aa6dc" stroke-width="0.9"/></svg>
<div class="t" style="left:108px;top:601px;">本地全局变量表</div>
<svg style="left:106px;top:622px" width="16" height="14" fill="none" stroke-linejoin="round" stroke-linecap="round" ><path d="M15.3 6 V11.6 H4.6 L1 8.3 L4.6 5" stroke="#4aa6dc" stroke-width="1.1"/><circle cx="3.6" cy="8.3" r="0.9" fill="#1c8ccc" stroke="none"/><text x="3.3" y="6.2" font-family="Liberation Sans" font-weight="bold" font-size="6.6" fill="#1c8ccc" stroke="#fff" stroke-width="0.4" paint-order="stroke" letter-spacing="-0.3">VAR</text></svg>
<div class="t" style="left:128px;top:620px;">GlobalTable1</div>
<svg style="left:106px;top:641px" width="16" height="14" fill="none" stroke-linejoin="round" stroke-linecap="round" ><path d="M15.3 6 V11.6 H4.6 L1 8.3 L4.6 5" stroke="#4aa6dc" stroke-width="1.1"/><circle cx="3.6" cy="8.3" r="0.9" fill="#1c8ccc" stroke="none"/><text x="3.3" y="6.2" font-family="Liberation Sans" font-weight="bold" font-size="6.6" fill="#1c8ccc" stroke="#fff" stroke-width="0.4" paint-order="stroke" letter-spacing="-0.3">VAR</text></svg>
<div class="t" style="left:128px;top:639px;">IO_Table</div>
<svg style="left:106px;top:660px" width="16" height="14" fill="none" stroke-linejoin="round" stroke-linecap="round" ><path d="M15.3 6 V11.6 H4.6 L1 8.3 L4.6 5" stroke="#4aa6dc" stroke-width="1.1"/><circle cx="3.6" cy="8.3" r="0.9" fill="#1c8ccc" stroke="none"/><text x="3.3" y="6.2" font-family="Liberation Sans" font-weight="bold" font-size="6.6" fill="#1c8ccc" stroke="#fff" stroke-width="0.4" paint-order="stroke" letter-spacing="-0.3">VAR</text></svg>
<div class="t" style="left:128px;top:658px;">跑马灯全局变量</div>
<svg style="left:68px;top:682px" width="10" height="8" fill="none" stroke-linejoin="round" stroke-linecap="round" ><path d="M0.8 1.5 L4.8 5.5 L8.8 1.5" stroke="#404040" stroke-width="1.7" stroke-linecap="butt" stroke-linejoin="miter"/></svg>
<svg style="left:86px;top:677px" width="16" height="16" fill="none" stroke-linejoin="round" stroke-linecap="round" ><circle cx="8" cy="8" r="7.2" stroke="#1c8ccc" stroke-width="1.1"/><path d="M5.5 1.3 Q4.8 8 5.5 14.7 M10.5 1.3 Q11.2 8 10.5 14.7 M1 5.2 H15 M0.8 8 H15.2 M1 10.8 H15" stroke="#4aa6dc" stroke-width="0.9"/><rect x="0" y="8.5" width="6.5" height="7" fill="#fff" stroke="none"/><path d="M0.8 9.5 H5.8 V15 H0.8 Z M0.8 12 H5.8 M3.3 9.5 V15" stroke="#1c8ccc" stroke-width="0.9"/></svg>
<div class="t" style="left:108px;top:678px;">网络全局变量表</div>
<svg style="left:106px;top:699px" width="16" height="14" fill="none" stroke-linejoin="round" stroke-linecap="round" ><path d="M15.3 6 V11.6 H4.6 L1 8.3 L4.6 5" stroke="#4aa6dc" stroke-width="1.1"/><circle cx="3.6" cy="8.3" r="0.9" fill="#1c8ccc" stroke="none"/><text x="3.3" y="6.2" font-family="Liberation Sans" font-weight="bold" font-size="6.6" fill="#1c8ccc" stroke="#fff" stroke-width="0.4" paint-order="stroke" letter-spacing="-0.3">OUT</text></svg>
<div class="t" style="left:128px;top:697px;">dweqd</div>
<svg style="left:28px;top:721px" width="10" height="8" fill="none" stroke-linejoin="round" stroke-linecap="round" ><path d="M0.8 1.5 L4.8 5.5 L8.8 1.5" stroke="#404040" stroke-width="1.7" stroke-linecap="butt" stroke-linejoin="miter"/></svg>
<svg style="left:46px;top:717px" width="16" height="16" fill="none" stroke-linejoin="round" stroke-linecap="round" ><path d="M8 1 L15 4.5 L8 8 L1 4.5 Z" stroke="#1c8ccc" stroke-width="1.1"/><path d="M1 8 L8 11.5 L15 8 M1 11.5 L8 15 L15 11.5" stroke="#1c8ccc" stroke-width="1.1"/></svg>
<div class="t" style="left:67px;top:717px;">资源</div>
<svg style="left:48px;top:741px" width="10" height="8" fill="none" stroke-linejoin="round" stroke-linecap="round" ><path d="M0.8 1.5 L4.8 5.5 L8.8 1.5" stroke="#404040" stroke-width="1.7" stroke-linecap="butt" stroke-linejoin="miter"/></svg>
<svg style="left:66px;top:737px" width="16" height="16" fill="none" stroke-linejoin="round" stroke-linecap="round" ><path d="M0.8 1.5 H6 Q8 1.5 8 3.5 V15 Q8 13.5 6 13.5 H0.8 Z M15.2 1.5 H10 Q8 1.5 8 3.5 V15 Q8 13.5 10 13.5 H15.2 Z" stroke="#1c8ccc" stroke-width="1.1"/><path d="M2.5 5 H6 M2.5 7.5 H6 M2.5 10 H6 M10 5 H13.5 M10 7.5 H13.5 M10 10 H13.5" stroke="#1c8ccc" stroke-width="0.8"/></svg>
<div class="t" style="left:88px;top:737px;">任务配置</div>
<svg style="left:69px;top:760px" width="8" height="10" fill="none" stroke-linejoin="round" stroke-linecap="round" ><path d="M1.5 1 L5.5 5 L1.5 9" stroke="#9a9a9a" stroke-width="1.7" stroke-linecap="butt" stroke-linejoin="miter"/></svg>
<svg style="left:86px;top:756px" width="16" height="16" fill="none" stroke-linejoin="round" stroke-linecap="round" ><circle cx="8" cy="8" r="7" stroke="#1c8ccc" stroke-width="1.2"/><path d="M8 3.5 V8.5 H11.5" stroke="#1c8ccc" stroke-width="1.2"/></svg>
<div class="t" style="left:108px;top:756px;">MainTask: 周期</div>
<svg style="left:69px;top:780px" width="8" height="10" fill="none" stroke-linejoin="round" stroke-linecap="round" ><path d="M1.5 1 L5.5 5 L1.5 9" stroke="#9a9a9a" stroke-width="1.7" stroke-linecap="butt" stroke-linejoin="miter"/></svg>
<svg style="left:86px;top:777px" width="16" height="16" fill="none" stroke-linejoin="round" stroke-linecap="round" ><path d="M9 1 H2 Q1 1 1 2 V14 Q1 15 2 15 H14 Q15 15 15 14 V7" stroke="#1c8ccc" stroke-width="1.1"/><path d="M13.5 0.8 L15.2 2.5 L8 9.7 L5.5 10.5 L6.3 8 Z" stroke="#1c8ccc" stroke-width="1.1"/></svg>
<div class="t" style="left:108px;top:777px;">Task2: 事件</div>
<svg style="left:69px;top:800px" width="8" height="10" fill="none" stroke-linejoin="round" stroke-linecap="round" ><path d="M1.5 1 L5.5 5 L1.5 9" stroke="#9a9a9a" stroke-width="1.7" stroke-linecap="butt" stroke-linejoin="miter"/></svg>
<svg style="left:86px;top:797px" width="16" height="16" fill="none" stroke-linejoin="round" stroke-linecap="round" ><circle cx="8" cy="8" r="7" stroke="#1c8ccc" stroke-width="1.2"/><path d="M8 3.5 V8.5 H11.5" stroke="#1c8ccc" stroke-width="1.2"/></svg>
<div class="t" style="left:108px;top:797px;">中文任务: 周期</div>
<div style="position:absolute;left:47px;top:816px;width:211px;height:1px;background:#dcdcdc"></div>
<svg style="left:0px;top:815px" width="50" height="20" fill="none" stroke-linejoin="round" stroke-linecap="round" ><path d="M0 1 L6 14 Q8 17.5 12 17.5 H38 Q41 17.5 42.5 14 L47.5 1" fill="#fff" stroke="#000" stroke-width="1.1"/></svg>
<div class="t" style="left:12px;top:818px;">工程</div>
<div style="position:absolute;left:266px;top:74px;width:1654px;height:24px;background:#f0f0f0"></div>
<div style="position:absolute;left:268px;top:76px;width:1px;height:21px;background:#c8c8c8"></div>
<div style="position:absolute;left:268px;top:97px;width:472px;height:1px;background:#a0a0a0"></div>
<div style="position:absolute;left:909px;top:97px;width:974px;height:1px;background:#d4d4d4"></div>
<div style="position:absolute;left:909px;top:76px;width:1px;height:22px;background:#d4d4d4"></div>
<div style="position:absolute;left:360px;top:77px;width:1px;height:19px;background:#d0d0d0"></div>
<svg style="left:278px;top:78px" width="16" height="16" fill="none" stroke-linejoin="round" stroke-linecap="round" ><path d="M3.8 3.6 V2 Q3.8 0.7 5.1 0.7 H11.3 L15.3 4.7 V14 Q15.3 15.3 14 15.3 H5.1 Q3.8 15.3 3.8 14 V12.6" stroke="#4aa6dc" stroke-width="1.1"/><path d="M11.3 0.7 V3.4 Q11.3 4.7 12.6 4.7 H15.3" stroke="#4aa6dc" stroke-width="0.9"/><text x="-0.2" y="11" font-family="Liberation Sans" font-weight="bold" font-size="7" fill="#1c8ccc" stroke="#1c8ccc" stroke-width="0.35" letter-spacing="-0.15">FBD</text></svg>
<div class="t" style="left:297px;top:80px;">Pou6*</div>
<svg style="left:333px;top:80px" width="15" height="15" fill="none" stroke-linejoin="round" stroke-linecap="round" ><rect x="0.7" y="0.7" width="13.6" height="13.6" rx="1.5" stroke="#5aaee0" stroke-width="1.3"/><path d="M3.5 3.5 L11.5 11.5 M11.5 3.5 L3.5 11.5" stroke="#f25c3c" stroke-width="1.2"/></svg>
<div style="position:absolute;left:472px;top:77px;width:1px;height:19px;background:#d0d0d0"></div>
<svg style="left:373px;top:78px" width="16" height="16" fill="none" stroke-linejoin="round" stroke-linecap="round" ><path d="M3.8 3.6 V2 Q3.8 0.7 5.1 0.7 H11.3 L15.3 4.7 V14 Q15.3 15.3 14 15.3 H5.1 Q3.8 15.3 3.8 14 V12.6" stroke="#4aa6dc" stroke-width="1.1"/><path d="M11.3 0.7 V3.4 Q11.3 4.7 12.6 4.7 H15.3" stroke="#4aa6dc" stroke-width="0.9"/><text x="-0.2" y="11" font-family="Liberation Sans" font-weight="bold" font-size="8" fill="#1c8ccc" stroke="#1c8ccc" stroke-width="0.35" letter-spacing="-0.15">ST</text></svg>
<div class="t" style="left:394px;top:80px;">中文组态</div>
<svg style="left:444px;top:80px" width="15" height="15" fill="none" stroke-linejoin="round" stroke-linecap="round" ><rect x="0.7" y="0.7" width="13.6" height="13.6" rx="1.5" stroke="#5aaee0" stroke-width="1.3"/><path d="M3.5 3.5 L11.5 11.5 M11.5 3.5 L3.5 11.5" stroke="#f25c3c" stroke-width="1.2"/></svg>
<div style="position:absolute;left:620px;top:77px;width:1px;height:19px;background:#d0d0d0"></div>
<svg style="left:485px;top:78px" width="16" height="16" fill="none" stroke-linejoin="round" stroke-linecap="round" ><path d="M3.8 3.6 V2 Q3.8 0.7 5.1 0.7 H11.3 L15.3 4.7 V14 Q15.3 15.3 14 15.3 H5.1 Q3.8 15.3 3.8 14 V12.6" stroke="#4aa6dc" stroke-width="1.1"/><path d="M11.3 0.7 V3.4 Q11.3 4.7 12.6 4.7 H15.3" stroke="#4aa6dc" stroke-width="0.9"/><text x="-0.2" y="11" font-family="Liberation Sans" font-weight="bold" font-size="8" fill="#1c8ccc" stroke="#1c8ccc" stroke-width="0.35" letter-spacing="-0.15">LD</text></svg>
<div class="t" style="left:505px;top:80px;">感应自动门组态</div>
<svg style="left:593px;top:80px" width="15" height="15" fill="none" stroke-linejoin="round" stroke-linecap="round" ><rect x="0.7" y="0.7" width="13.6" height="13.6" rx="1.5" stroke="#5aaee0" stroke-width="1.3"/><path d="M3.5 3.5 L11.5 11.5 M11.5 3.5 L3.5 11.5" stroke="#f25c3c" stroke-width="1.2"/></svg>
<div style="position:absolute;left:740px;top:77px;width:1px;height:19px;background:#d0d0d0"></div>
<svg style="left:632px;top:78px" width="16" height="16" fill="none" stroke-linejoin="round" stroke-linecap="round" ><path d="M3.8 3.6 V2 Q3.8 0.7 5.1 0.7 H11.3 L15.3 4.7 V14 Q15.3 15.3 14 15.3 H5.1 Q3.8 15.3 3.8 14 V12.6" stroke="#4aa6dc" stroke-width="1.1"/><path d="M11.3 0.7 V3.4 Q11.3 4.7 12.6 4.7 H15.3" stroke="#4aa6dc" stroke-width="0.9"/><text x="-0.2" y="11" font-family="Liberation Sans" font-weight="bold" font-size="7" fill="#1c8ccc" stroke="#1c8ccc" stroke-width="0.35" letter-spacing="-0.15">FBD</text></svg>
<div class="t" style="left:653px;top:80px;">FBD_Test*</div>
<svg style="left:713px;top:80px" width="15" height="15" fill="none" stroke-linejoin="round" stroke-linecap="round" ><rect x="0.7" y="0.7" width="13.6" height="13.6" rx="1.5" stroke="#5aaee0" stroke-width="1.3"/><path d="M3.5 3.5 L11.5 11.5 M11.5 3.5 L3.5 11.5" stroke="#f25c3c" stroke-width="1.2"/></svg>
<div style="position:absolute;left:740px;top:74px;width:169px;height:25px;background:#fff"></div>
<svg style="left:754px;top:77px" width="16" height="16" fill="none" stroke-linejoin="round" stroke-linecap="round" ><rect x="0.8" y="0.8" width="14.4" height="14.4" rx="2" stroke="#1c8ccc" stroke-width="1.1"/><path d="M3 4 H13 M3 8 H13 M3 12 H13" stroke="#1c8ccc" stroke-width="0.9"/><circle cx="5.5" cy="4" r="1.6" fill="#fff" stroke="#1c8ccc" stroke-width="0.9"/><circle cx="10.5" cy="8" r="1.6" fill="#fff" stroke="#1c8ccc" stroke-width="0.9"/><circle cx="5.5" cy="12" r="1.6" fill="#fff" stroke="#1c8ccc" stroke-width="0.9"/></svg>
<div class="t" style="left:774px;top:79px;">设备配置 [Device1]*</div>
<svg style="left:881px;top:79px" width="15" height="15" fill="none" stroke-linejoin="round" stroke-linecap="round" ><rect x="0.7" y="0.7" width="13.6" height="13.6" rx="1.5" stroke="#5aaee0" stroke-width="1.3"/><path d="M3.5 3.5 L11.5 11.5 M11.5 3.5 L3.5 11.5" stroke="#f25c3c" stroke-width="1.2"/></svg>
<div style="position:absolute;left:1886px;top:76px;width:32px;height:21px;background:#e1e1e1;border:1px solid #adadad"></div>
<svg style="left:1887px;top:77px" width="22" height="19" fill="none" stroke-linejoin="round" stroke-linecap="round" ><rect x="1.5" y="2.5" width="4.5" height="4.5" stroke="#1c8ccc" stroke-width="1"/><rect x="1.5" y="11.5" width="4.5" height="4.5" stroke="#1c8ccc" stroke-width="1"/><path d="M8 2.5 H14 M8 6.5 H14 M8 11.5 H14 M8 15.5 H14" stroke="#1c8ccc" stroke-width="1"/><path d="M20 1 V18" stroke="#a0a0a0"/></svg>
<svg style="left:1908px;top:84px" width="8" height="5" fill="none" stroke-linejoin="round" stroke-linecap="round" ><path d="M0 0 H8 L4 4.5 Z" fill="#000"/></svg>
<div style="position:absolute;left:266px;top:98px;width:1651px;height:1px;background:#fff"></div>
<div style="position:absolute;left:266px;top:99px;width:1650px;height:22px;background:#e3e3e3"></div>
<div style="position:absolute;left:1916px;top:97px;width:1px;height:732px;background:#fff"></div>
<div class="t" style="left:271px;top:103px;">Device1</div>
<div style="position:absolute;left:266px;top:121px;width:1651px;height:1px;background:#fff"></div>
<div style="position:absolute;left:266px;top:98px;width:1px;height:731px;background:#fff"></div>
<div style="position:absolute;left:268px;top:122px;width:229px;height:25px;background:#dadada;border:1px solid #c0c0c0"></div>
<div class="t" style="left:274px;top:127px;">设备树</div>
<div style="position:absolute;left:268px;top:148px;width:229px;height:681px;background:#fff;border:1px solid #828790"></div>
<div style="position:absolute;left:309px;top:169px;width:187px;height:20px;background:#d9d9d9"></div>
<svg style="left:275px;top:155px" width="10" height="8" fill="none" stroke-linejoin="round" stroke-linecap="round" ><path d="M0.8 1.5 L4.8 5.5 L8.8 1.5" stroke="#404040" stroke-width="1.7" stroke-linecap="butt" stroke-linejoin="miter"/></svg>
<svg style="left:292px;top:151px" width="17" height="17" fill="none" stroke-linejoin="round" stroke-linecap="round" ><path d="M5 3 H2 V14 H5 M5 8.5 H2" stroke="#1c8ccc" stroke-width="1.2"/><path d="M5 3 H10 M5 14 H10 M5 8.5 H8" stroke="#1c8ccc" stroke-width="1.2"/><rect x="10" y="0.7" width="4.5" height="4" stroke="#1c8ccc" stroke-width="1"/><rect x="10" y="12" width="4.5" height="4" stroke="#1c8ccc" stroke-width="1"/><path d="M14.5 2.7 H16.5 M14.5 14 H16.5" stroke="#1c8ccc" stroke-width="1"/></svg>
<div class="t" style="left:313px;top:152px;">SC8000</div>
<svg style="left:312px;top:171px" width="16" height="16" fill="none" stroke-linejoin="round" stroke-linecap="round" ><rect x="0.7" y="0.7" width="14.6" height="14.6" stroke="#1c8ccc" stroke-width="1.1"/><path d="M0.7 9.5 H15.3 M8 9.5 V15.3 M4 2.5 V8 M6 2.5 V8 M10 2.5 V8 M12 2.5 V8" stroke="#1c8ccc" stroke-width="1"/></svg>
<div class="t" style="left:333px;top:172px;">SC950A控制器(冗余)</div>
<svg style="left:295px;top:195px" width="10" height="8" fill="none" stroke-linejoin="round" stroke-linecap="round" ><path d="M0.8 1.5 L4.8 5.5 L8.8 1.5" stroke="#404040" stroke-width="1.7" stroke-linecap="butt" stroke-linejoin="miter"/></svg>
<svg style="left:312px;top:191px" width="16" height="16" fill="none" stroke-linejoin="round" stroke-linecap="round" ><rect x="5.5" y="0.7" width="5" height="4" stroke="#1c8ccc" stroke-width="1.1"/><path d="M8 4.7 V8 M2.5 11 V8 H13.5 V11" stroke="#1c8ccc" stroke-width="1.1"/><rect x="0.7" y="11" width="4" height="4.3" stroke="#1c8ccc" stroke-width="1.1"/><rect x="11.3" y="11" width="4" height="4.3" stroke="#1c8ccc" stroke-width="1.1"/></svg>
<div class="t" style="left:333px;top:192px;">本地站点01</div>
<svg style="left:315px;top:215px" width="10" height="8" fill="none" stroke-linejoin="round" stroke-linecap="round" ><path d="M0.8 1.5 L4.8 5.5 L8.8 1.5" stroke="#404040" stroke-width="1.7" stroke-linecap="butt" stroke-linejoin="miter"/></svg>
<svg style="left:332px;top:211px" width="16" height="16" fill="none" stroke-linejoin="round" stroke-linecap="round" ><path d="M1 5 L3 1 H13 L15 5 Z" stroke="#1c8ccc" stroke-width="1.1"/><rect x="1" y="5" width="14" height="10" stroke="#1c8ccc" stroke-width="1.1"/><path d="M1 8.3 H15 M1 11.7 H15" stroke="#1c8ccc" stroke-width="1.1"/><path d="M3 6.7 H7 M3 10 H7 M3 13.3 H7" stroke="#1c8ccc" stroke-width="0.9"/></svg>
<div class="t" style="left:353px;top:212px;">本地机架01</div>
<svg style="left:352px;top:231px" width="16" height="16" fill="none" stroke-linejoin="round" stroke-linecap="round" ><path d="M0.7 0.7 H15.3 V12.8 Q15.3 15.3 12.8 15.3 H3.2 Q0.7 15.3 0.7 12.8 Z" stroke="#1c8ccc" stroke-width="1.15"/><circle cx="4.7" cy="4.3" r="2.2" stroke="#1c8ccc" stroke-width="1.1"/><circle cx="11.3" cy="4.3" r="2.2" stroke="#1c8ccc" stroke-width="1.1"/><path d="M0.7 7.8 H15.3" stroke="#1c8ccc" stroke-width="1"/><rect x="5.3" y="10.4" width="5.4" height="2.4" stroke="#1c8ccc" stroke-width="1"/><circle cx="4" cy="9.4" r="0.6" fill="#1c8ccc"/><circle cx="12" cy="9.4" r="0.6" fill="#1c8ccc"/></svg>
<div class="t" style="left:373px;top:232px;">槽位01_SC235A</div>
<svg style="left:352px;top:251px" width="16" height="16" fill="none" stroke-linejoin="round" stroke-linecap="round" ><path d="M0.7 0.7 H15.3 V12.8 Q15.3 15.3 12.8 15.3 H3.2 Q0.7 15.3 0.7 12.8 Z" stroke="#1c8ccc" stroke-width="1.15"/><circle cx="4.7" cy="4.3" r="2.2" stroke="#1c8ccc" stroke-width="1.1"/><circle cx="11.3" cy="4.3" r="2.2" stroke="#1c8ccc" stroke-width="1.1"/><path d="M0.7 7.8 H15.3" stroke="#1c8ccc" stroke-width="1"/><rect x="5.3" y="10.4" width="5.4" height="2.4" stroke="#1c8ccc" stroke-width="1"/><circle cx="4" cy="9.4" r="0.6" fill="#1c8ccc"/><circle cx="12" cy="9.4" r="0.6" fill="#1c8ccc"/></svg>
<div class="t" style="left:373px;top:252px;">槽位02_SC231A</div>
<svg style="left:352px;top:271px" width="16" height="16" fill="none" stroke-linejoin="round" stroke-linecap="round" ><path d="M0.7 0.7 H15.3 V12.8 Q15.3 15.3 12.8 15.3 H3.2 Q0.7 15.3 0.7 12.8 Z" stroke="#1c8ccc" stroke-width="1.15"/><circle cx="4.7" cy="4.3" r="2.2" stroke="#1c8ccc" stroke-width="1.1"/><circle cx="11.3" cy="4.3" r="2.2" stroke="#1c8ccc" stroke-width="1.1"/><path d="M0.7 7.8 H15.3" stroke="#1c8ccc" stroke-width="1"/><rect x="5.3" y="10.4" width="5.4" height="2.4" stroke="#1c8ccc" stroke-width="1"/><circle cx="4" cy="9.4" r="0.6" fill="#1c8ccc"/><circle cx="12" cy="9.4" r="0.6" fill="#1c8ccc"/></svg>
<div class="t" style="left:373px;top:272px;">槽位03_SC231E</div>
<svg style="left:352px;top:291px" width="16" height="16" fill="none" stroke-linejoin="round" stroke-linecap="round" ><path d="M0.7 0.7 H15.3 V12.8 Q15.3 15.3 12.8 15.3 H3.2 Q0.7 15.3 0.7 12.8 Z" stroke="#1c8ccc" stroke-width="1.15"/><circle cx="4.7" cy="4.3" r="2.2" stroke="#1c8ccc" stroke-width="1.1"/><circle cx="11.3" cy="4.3" r="2.2" stroke="#1c8ccc" stroke-width="1.1"/><path d="M0.7 7.8 H15.3" stroke="#1c8ccc" stroke-width="1"/><rect x="5.3" y="10.4" width="5.4" height="2.4" stroke="#1c8ccc" stroke-width="1"/><circle cx="4" cy="9.4" r="0.6" fill="#1c8ccc"/><circle cx="12" cy="9.4" r="0.6" fill="#1c8ccc"/></svg>
<div class="t" style="left:373px;top:292px;">槽位04_SC232A</div>
<svg style="left:352px;top:311px" width="16" height="16" fill="none" stroke-linejoin="round" stroke-linecap="round" ><path d="M0.7 0.7 H15.3 V12.8 Q15.3 15.3 12.8 15.3 H3.2 Q0.7 15.3 0.7 12.8 Z" stroke="#1c8ccc" stroke-width="1.15"/><circle cx="4.7" cy="4.3" r="2.2" stroke="#1c8ccc" stroke-width="1.1"/><circle cx="11.3" cy="4.3" r="2.2" stroke="#1c8ccc" stroke-width="1.1"/><path d="M0.7 7.8 H15.3" stroke="#1c8ccc" stroke-width="1"/><rect x="5.3" y="10.4" width="5.4" height="2.4" stroke="#1c8ccc" stroke-width="1"/><circle cx="4" cy="9.4" r="0.6" fill="#1c8ccc"/><circle cx="12" cy="9.4" r="0.6" fill="#1c8ccc"/></svg>
<div class="t" style="left:373px;top:312px;">槽位05_SC233A</div>
<svg style="left:352px;top:331px" width="16" height="16" fill="none" stroke-linejoin="round" stroke-linecap="round" ><path d="M0.7 0.7 H15.3 V12.8 Q15.3 15.3 12.8 15.3 H3.2 Q0.7 15.3 0.7 12.8 Z" stroke="#1c8ccc" stroke-width="1.15"/><circle cx="4.7" cy="4.3" r="2.2" stroke="#1c8ccc" stroke-width="1.1"/><circle cx="11.3" cy="4.3" r="2.2" stroke="#1c8ccc" stroke-width="1.1"/><path d="M0.7 7.8 H15.3" stroke="#1c8ccc" stroke-width="1"/><rect x="5.3" y="10.4" width="5.4" height="2.4" stroke="#1c8ccc" stroke-width="1"/><circle cx="4" cy="9.4" r="0.6" fill="#1c8ccc"/><circle cx="12" cy="9.4" r="0.6" fill="#1c8ccc"/></svg>
<div class="t" style="left:373px;top:332px;">槽位06_SC234A</div>
<svg style="left:352px;top:351px" width="16" height="16" fill="none" stroke-linejoin="round" stroke-linecap="round" ><path d="M0.7 0.7 H15.3 V12.8 Q15.3 15.3 12.8 15.3 H3.2 Q0.7 15.3 0.7 12.8 Z" stroke="#1c8ccc" stroke-width="1.15"/><circle cx="4.7" cy="4.3" r="2.2" stroke="#1c8ccc" stroke-width="1.1"/><circle cx="11.3" cy="4.3" r="2.2" stroke="#1c8ccc" stroke-width="1.1"/><path d="M0.7 7.8 H15.3" stroke="#1c8ccc" stroke-width="1"/><rect x="5.3" y="10.4" width="5.4" height="2.4" stroke="#1c8ccc" stroke-width="1"/><circle cx="4" cy="9.4" r="0.6" fill="#1c8ccc"/><circle cx="12" cy="9.4" r="0.6" fill="#1c8ccc"/></svg>
<div class="t" style="left:373px;top:352px;">槽位07_SC235A</div>
<svg style="left:352px;top:371px" width="16" height="16" fill="none" stroke-linejoin="round" stroke-linecap="round" ><path d="M0.7 0.7 H15.3 V12.8 Q15.3 15.3 12.8 15.3 H3.2 Q0.7 15.3 0.7 12.8 Z" stroke="#1c8ccc" stroke-width="1.15"/><circle cx="4.7" cy="4.3" r="2.2" stroke="#1c8ccc" stroke-width="1.1"/><circle cx="11.3" cy="4.3" r="2.2" stroke="#1c8ccc" stroke-width="1.1"/><path d="M0.7 7.8 H15.3" stroke="#1c8ccc" stroke-width="1"/><rect x="5.3" y="10.4" width="5.4" height="2.4" stroke="#1c8ccc" stroke-width="1"/><circle cx="4" cy="9.4" r="0.6" fill="#1c8ccc"/><circle cx="12" cy="9.4" r="0.6" fill="#1c8ccc"/></svg>
<div class="t" style="left:373px;top:372px;">槽位08_SC235B</div>
<svg style="left:352px;top:391px" width="16" height="16" fill="none" stroke-linejoin="round" stroke-linecap="round" ><path d="M0.7 0.7 H15.3 V12.8 Q15.3 15.3 12.8 15.3 H3.2 Q0.7 15.3 0.7 12.8 Z" stroke="#1c8ccc" stroke-width="1.15"/><circle cx="4.7" cy="4.3" r="2.2" stroke="#1c8ccc" stroke-width="1.1"/><circle cx="11.3" cy="4.3" r="2.2" stroke="#1c8ccc" stroke-width="1.1"/><path d="M0.7 7.8 H15.3" stroke="#1c8ccc" stroke-width="1"/><rect x="5.3" y="10.4" width="5.4" height="2.4" stroke="#1c8ccc" stroke-width="1"/><circle cx="4" cy="9.4" r="0.6" fill="#1c8ccc"/><circle cx="12" cy="9.4" r="0.6" fill="#1c8ccc"/></svg>
<div class="t" style="left:373px;top:392px;">槽位09_SC236A</div>
<svg style="left:352px;top:411px" width="16" height="16" fill="none" stroke-linejoin="round" stroke-linecap="round" ><path d="M0.7 0.7 H15.3 V12.8 Q15.3 15.3 12.8 15.3 H3.2 Q0.7 15.3 0.7 12.8 Z" stroke="#1c8ccc" stroke-width="1.15"/><circle cx="4.7" cy="4.3" r="2.2" stroke="#1c8ccc" stroke-width="1.1"/><circle cx="11.3" cy="4.3" r="2.2" stroke="#1c8ccc" stroke-width="1.1"/><path d="M0.7 7.8 H15.3" stroke="#1c8ccc" stroke-width="1"/><rect x="5.3" y="10.4" width="5.4" height="2.4" stroke="#1c8ccc" stroke-width="1"/><circle cx="4" cy="9.4" r="0.6" fill="#1c8ccc"/><circle cx="12" cy="9.4" r="0.6" fill="#1c8ccc"/></svg>
<div class="t" style="left:373px;top:412px;">槽位10_SC236C</div>
<svg style="left:332px;top:431px" width="16" height="16" fill="none" stroke-linejoin="round" stroke-linecap="round" ><path d="M1 5 L3 1 H13 L15 5 Z" stroke="#1c8ccc" stroke-width="1.1"/><rect x="1" y="5" width="14" height="10" stroke="#1c8ccc" stroke-width="1.1"/><path d="M1 8.3 H15 M1 11.7 H15" stroke="#1c8ccc" stroke-width="1.1"/><path d="M3 6.7 H7 M3 10 H7 M3 13.3 H7" stroke="#1c8ccc" stroke-width="0.9"/></svg>
<div class="t" style="left:353px;top:432px;">本地扩展机架02</div>
<div style="position:absolute;left:502px;top:122px;width:1180px;height:469px;background:#fff;border:1px solid #828790"></div>
<svg style="left:507px;top:128px" width="20" height="20" fill="none" stroke-linejoin="round" stroke-linecap="round" ><rect x="1.5" y="1" width="9" height="3" stroke="#1c8ccc" stroke-width="1.2"/><rect x="6" y="5.5" width="7" height="2.5" stroke="#1c8ccc" stroke-width="1.1"/><path d="M4 4 V13.5 H10 M4 7 H6" stroke="#1c8ccc" stroke-width="1.3"/><circle cx="14" cy="14.5" r="3.8" stroke="#1c8ccc" stroke-width="1.3"/><path d="M12 14 Q14 16.5 16 14" stroke="#1c8ccc" stroke-width="1"/></svg>
<div style="position:absolute;left:532px;top:129px;width:1px;height:17px;background:#c8c8c8"></div>
<svg style="left:539px;top:128px" width="20" height="20" fill="none" stroke-linejoin="round" stroke-linecap="round" ><path d="M4 3 H3 Q1.5 3 1.5 4.5 V16.5 Q1.5 18 3 18 H12 Q13.5 18 13.5 16.5" stroke="#b4b4b4" stroke-width="1.3"/><path d="M4.5 1 H12.5 L16 4.5 V14 Q16 15.5 14.5 15.5 H6 Q4.5 15.5 4.5 14 Z" stroke="#b4b4b4" stroke-width="1.3"/><path d="M7 8.5 H13 M7 11 H13" stroke="#b4b4b4" stroke-width="1.1"/></svg>
<svg style="left:564px;top:128px" width="20" height="20" fill="none" stroke-linejoin="round" stroke-linecap="round" ><path d="M4.5 2.5 H3 Q1.5 2.5 1.5 4 V16 Q1.5 17.5 3 17.5 H7" stroke="#b4b4b4" stroke-width="1.3"/><path d="M10.5 2.5 H12 Q13.5 2.5 13.5 4 V8" stroke="#b4b4b4" stroke-width="1.3"/><rect x="4.5" y="0.8" width="6" height="2.5" rx="1" stroke="#b4b4b4" stroke-width="1.2"/><rect x="8" y="8.5" width="8" height="9.5" rx="1.2" stroke="#b4b4b4" stroke-width="1.3"/></svg>
<svg style="left:590px;top:128px" width="20" height="20" fill="none" stroke-linejoin="round" stroke-linecap="round" ><path d="M1 4 H15.5 M6 4 V1.5 H10.5 V4" stroke="#b4b4b4" stroke-width="1.3"/><path d="M2.5 4 L3.5 17.5 H13 L14 4" stroke="#b4b4b4" stroke-width="1.3"/><path d="M6 7 V15 M8.3 7 V15 M10.6 7 V15" stroke="#b4b4b4" stroke-width="1"/></svg>
<div style="position:absolute;left:613px;top:129px;width:1px;height:17px;background:#c8c8c8"></div>
<svg style="left:620px;top:128px" width="20" height="20" fill="none" stroke-linejoin="round" stroke-linecap="round" ><circle cx="7.8" cy="7.8" r="6.8" stroke="#1c8ccc" stroke-width="1.6"/><path d="M12.8 12.8 L17 17" stroke="#1c8ccc" stroke-width="2"/><path d="M4.5 7.8 H11 M7.8 4.5 V11" stroke="#1c8ccc" stroke-width="1.5"/></svg>
<svg style="left:645px;top:128px" width="20" height="20" fill="none" stroke-linejoin="round" stroke-linecap="round" ><circle cx="7.8" cy="7.8" r="6.8" stroke="#1c8ccc" stroke-width="1.6"/><path d="M12.8 12.8 L17 17" stroke="#1c8ccc" stroke-width="2"/><path d="M4.5 7.8 H11" stroke="#1c8ccc" stroke-width="1.5"/></svg>
<div style="position:absolute;left:669px;top:126px;width:55px;height:21px;background:#e1e1e1;border:1px solid #adadad"></div>
<div class="t" style="left:673px;top:129px;">125%</div>
<svg style="left:709px;top:133px" width="10" height="6" fill="none" stroke-linejoin="round" stroke-linecap="round" ><path d="M1 1 L5 5 L9 1" stroke="#333" stroke-width="1.1"/></svg>
<div class="t s" style="left:515px;top:156px;font-size:17px;line-height:20px;height:20px;color:#00d000;-webkit-text-stroke:0.5px #00d000">A</div>
<div class="t s" style="left:541px;top:168px;font-size:17px;line-height:20px;height:20px;color:#2080ff;-webkit-text-stroke:0.5px #2080ff">B</div>
<div style="position:absolute;left:520px;top:181px;width:3px;height:334px;background:#00d000"></div>
<div style="position:absolute;left:545px;top:193px;width:3px;height:322px;background:#2080ff"></div>
<div style="position:absolute;left:520px;top:344px;width:134px;height:2px;background:#00d000"></div>
<div style="position:absolute;left:651px;top:339px;width:3px;height:7px;background:#00d000"></div>
<div style="position:absolute;left:545px;top:349px;width:128px;height:2px;background:#2080ff"></div>
<div style="position:absolute;left:670px;top:339px;width:3px;height:12px;background:#2080ff"></div>
<div style="position:absolute;left:520px;top:353px;width:263px;height:3px;background:#00d000"></div>
<div style="position:absolute;left:780px;top:339px;width:3px;height:17px;background:#00d000"></div>
<div style="position:absolute;left:545px;top:358px;width:257px;height:3px;background:#2080ff"></div>
<div style="position:absolute;left:799px;top:339px;width:3px;height:22px;background:#2080ff"></div>
<div class="t" style="left:571px;top:152px;font-size:19.5px;line-height:24px;height:24px;font-family:Liberation Sans,sans-serif">本地站点<span style="-webkit-text-stroke:0.45px #000;letter-spacing:1px;font-size:20px">01</span></div>
<div class="t" style="left:584px;top:183px;font-size:19.5px;line-height:24px;height:24px;font-family:Liberation Sans,sans-serif">本地机架<span style="-webkit-text-stroke:0.45px #000;letter-spacing:1px;font-size:20px">01</span></div><div class="t" style="left:697px;top:186px;font-size:18px;line-height:22px;height:22px;color:#1a9a1a">*机架描述*</div>
<div class="t" style="left:584px;top:371px;font-size:19.5px;line-height:24px;height:24px;font-family:Liberation Sans,sans-serif">本地扩展机架<span style="-webkit-text-stroke:0.45px #000;letter-spacing:1px;font-size:20px">02</span></div>
<div class="t" style="left:596px;top:395px;font-size:18px;line-height:20px;height:20px;color:#1a9a1a">*机架描述*</div>
<div style="position:absolute;left:568px;top:213px;width:256px;height:128px;border:3px solid #ff0000"></div>
<svg style="left:570px;top:216px" width="123" height="123" fill="none" stroke-linejoin="round" stroke-linecap="round" ><rect x="0" y="0" width="123" height="123" fill="#6b6b6b"/><rect x="4" y="1" width="114" height="121" fill="#545454"/><rect x="118" y="1" width="4" height="121" fill="#707070"/><defs><linearGradient id="pg" x1="0" y1="0" x2="0" y2="1"><stop offset="0" stop-color="#f4f4f4"/><stop offset="0.12" stop-color="#d0d0d0"/><stop offset="0.2" stop-color="#808080"/><stop offset="0.5" stop-color="#767676"/><stop offset="1" stop-color="#5a5a5a"/></linearGradient></defs><rect x="11" y="6" width="26" height="98" fill="url(#pg)"/><rect x="12" y="19" width="24" height="26" fill="#2c2c2c"/><rect x="13" y="20" width="9" height="24" fill="#1c1c1c"/><rect x="14" y="21.0" width="7" height="1" fill="#353535"/><rect x="14" y="23.6" width="7" height="1" fill="#353535"/><rect x="14" y="26.2" width="7" height="1" fill="#353535"/><rect x="14" y="28.8" width="7" height="1" fill="#353535"/><rect x="14" y="31.4" width="7" height="1" fill="#353535"/><rect x="14" y="34.0" width="7" height="1" fill="#353535"/><rect x="14" y="36.6" width="7" height="1" fill="#353535"/><rect x="14" y="39.2" width="7" height="1" fill="#353535"/><rect x="14" y="41.8" width="7" height="1" fill="#353535"/><rect x="23" y="19" width="5" height="26" fill="#333"/><ellipse cx="34" cy="23" rx="1.5" ry="2.2" fill="#e0c860"/><ellipse cx="34" cy="41" rx="1.5" ry="2.2" fill="#50c060"/><rect x="12" y="66" width="24" height="26" fill="#2c2c2c"/><rect x="13" y="67" width="9" height="24" fill="#1c1c1c"/><rect x="14" y="68.0" width="7" height="1" fill="#353535"/><rect x="14" y="70.6" width="7" height="1" fill="#353535"/><rect x="14" y="73.2" width="7" height="1" fill="#353535"/><rect x="14" y="75.8" width="7" height="1" fill="#353535"/><rect x="14" y="78.4" width="7" height="1" fill="#353535"/><rect x="14" y="81.0" width="7" height="1" fill="#353535"/><rect x="14" y="83.6" width="7" height="1" fill="#353535"/><rect x="14" y="86.2" width="7" height="1" fill="#353535"/><rect x="14" y="88.8" width="7" height="1" fill="#353535"/><rect x="23" y="66" width="5" height="26" fill="#333"/><ellipse cx="34" cy="70" rx="1.5" ry="2.2" fill="#e0c860"/><ellipse cx="34" cy="88" rx="1.5" ry="2.2" fill="#50c060"/><text x="40" y="36" font-size="10" font-weight="bold" fill="#f0f0f0" font-family="Liberation Sans">N1</text><text x="40" y="83" font-size="10" font-weight="bold" fill="#f0f0f0" font-family="Liberation Sans">N2</text><rect x="62.5" y="3.0" width="8" height="8" fill="#3a3a3a"/><rect x="63.5" y="4.0" width="6" height="6" fill="#a9a9a9"/><rect x="62.5" y="13.4" width="8" height="8" fill="#3a3a3a"/><rect x="63.5" y="14.4" width="6" height="6" fill="#a9a9a9"/><rect x="62.5" y="23.8" width="8" height="8" fill="#3a3a3a"/><rect x="63.5" y="24.8" width="6" height="6" fill="#a9a9a9"/><rect x="62.5" y="34.2" width="8" height="8" fill="#3a3a3a"/><rect x="63.5" y="35.2" width="6" height="6" fill="#a9a9a9"/><rect x="62.5" y="44.6" width="8" height="8" fill="#3a3a3a"/><rect x="63.5" y="45.6" width="6" height="6" fill="#a9a9a9"/><rect x="62.5" y="55.0" width="8" height="8" fill="#3a3a3a"/><rect x="63.5" y="56.0" width="6" height="6" fill="#a9a9a9"/><rect x="62.5" y="65.4" width="8" height="8" fill="#3a3a3a"/><rect x="63.5" y="66.4" width="6" height="6" fill="#a9a9a9"/><rect x="62.5" y="75.8" width="8" height="8" fill="#3a3a3a"/><rect x="63.5" y="76.8" width="6" height="6" fill="#a9a9a9"/><rect x="62.5" y="86.2" width="8" height="8" fill="#3a3a3a"/><rect x="63.5" y="87.2" width="6" height="6" fill="#a9a9a9"/><rect x="62.5" y="96.6" width="8" height="8" fill="#3a3a3a"/><rect x="63.5" y="97.6" width="6" height="6" fill="#a9a9a9"/><rect x="73.5" y="3.0" width="8" height="8" fill="#3a3a3a"/><rect x="74.5" y="4.0" width="6" height="6" fill="#a9a9a9"/><rect x="73.5" y="13.4" width="8" height="8" fill="#3a3a3a"/><rect x="74.5" y="14.4" width="6" height="6" fill="#a9a9a9"/><rect x="73.5" y="23.8" width="8" height="8" fill="#3a3a3a"/><rect x="74.5" y="24.8" width="6" height="6" fill="#a9a9a9"/><rect x="73.5" y="34.2" width="8" height="8" fill="#3a3a3a"/><rect x="74.5" y="35.2" width="6" height="6" fill="#a9a9a9"/><rect x="73.5" y="44.6" width="8" height="8" fill="#3a3a3a"/><rect x="74.5" y="45.6" width="6" height="6" fill="#a9a9a9"/><rect x="73.5" y="55.0" width="8" height="8" fill="#3a3a3a"/><rect x="74.5" y="56.0" width="6" height="6" fill="#a9a9a9"/><rect x="73.5" y="65.4" width="8" height="8" fill="#3a3a3a"/><rect x="74.5" y="66.4" width="6" height="6" fill="#a9a9a9"/><rect x="73.5" y="75.8" width="8" height="8" fill="#3a3a3a"/><rect x="74.5" y="76.8" width="6" height="6" fill="#a9a9a9"/><rect x="73.5" y="86.2" width="8" height="8" fill="#3a3a3a"/><rect x="74.5" y="87.2" width="6" height="6" fill="#a9a9a9"/><rect x="73.5" y="96.6" width="8" height="8" fill="#3a3a3a"/><rect x="74.5" y="97.6" width="6" height="6" fill="#a9a9a9"/><rect x="84.5" y="2.5" width="30" height="104" fill="none" stroke="#c8c8c8" stroke-width="0.8"/><path d="M99.5 2.5 V106.5" stroke="#c8c8c8" stroke-width="0.8"/><path d="M84.5 12.9 H114.5" stroke="#c8c8c8" stroke-width="0.7"/><path d="M84.5 23.3 H114.5" stroke="#c8c8c8" stroke-width="0.7"/><path d="M84.5 33.7 H114.5" stroke="#c8c8c8" stroke-width="0.7"/><path d="M84.5 44.1 H114.5" stroke="#c8c8c8" stroke-width="0.7"/><path d="M84.5 54.5 H114.5" stroke="#c8c8c8" stroke-width="0.7"/><path d="M84.5 64.9 H114.5" stroke="#c8c8c8" stroke-width="0.7"/><path d="M84.5 75.3 H114.5" stroke="#c8c8c8" stroke-width="0.7"/><path d="M84.5 85.7 H114.5" stroke="#c8c8c8" stroke-width="0.7"/><path d="M84.5 96.1 H114.5" stroke="#c8c8c8" stroke-width="0.7"/><text x="92" y="14.3" text-anchor="middle" font-size="13" font-weight="bold" fill="#f4f4f4" font-family="Liberation Sans">*</text><text x="92" y="21.7" text-anchor="middle" font-size="10" fill="#e8e8e8" font-family="Liberation Sans" letter-spacing="-0.5">F</text><text x="92" y="32.1" text-anchor="middle" font-size="10" fill="#e8e8e8" font-family="Liberation Sans" letter-spacing="-0.5">I</text><text x="92" y="42.5" text-anchor="middle" font-size="10" fill="#e8e8e8" font-family="Liberation Sans" letter-spacing="-0.5">N1</text><text x="92" y="52.9" text-anchor="middle" font-size="10" fill="#e8e8e8" font-family="Liberation Sans" letter-spacing="-0.5">N2</text><text x="92" y="63.3" text-anchor="middle" font-size="10" fill="#e8e8e8" font-family="Liberation Sans" letter-spacing="-0.5">B1</text><text x="92" y="73.7" text-anchor="middle" font-size="10" fill="#e8e8e8" font-family="Liberation Sans" letter-spacing="-0.5">B2</text><text x="92" y="84.1" text-anchor="middle" font-size="10" fill="#e8e8e8" font-family="Liberation Sans" letter-spacing="-0.5">D</text><text x="92" y="94.5" text-anchor="middle" font-size="10" fill="#e8e8e8" font-family="Liberation Sans" letter-spacing="-0.5">P</text><text x="92" y="104.9" text-anchor="middle" font-size="10" fill="#e8e8e8" font-family="Liberation Sans" letter-spacing="-0.5">S</text><text x="107" y="11.3" text-anchor="middle" font-size="10.5" fill="#e8e8e8" font-family="Liberation Serif" letter-spacing="-0.8">C1</text><text x="107" y="21.7" text-anchor="middle" font-size="10.5" fill="#e8e8e8" font-family="Liberation Serif" letter-spacing="-0.8">C2</text><text x="107" y="32.1" text-anchor="middle" font-size="10.5" fill="#e8e8e8" font-family="Liberation Serif" letter-spacing="-0.8">C3</text><text x="107" y="42.5" text-anchor="middle" font-size="10.5" fill="#e8e8e8" font-family="Liberation Serif" letter-spacing="-0.8">C4</text><text x="107" y="52.9" text-anchor="middle" font-size="10.5" fill="#e8e8e8" font-family="Liberation Serif" letter-spacing="-0.8">C5</text><path d="M0 106.5 H123" stroke="#3c3c3c" stroke-width="1"/><rect x="4" y="107" width="112" height="15" fill="#4a4a4a"/><text x="5" y="121" font-size="16" fill="#f2f2f2" font-family="Liberation Sans" letter-spacing="0.4">SC950A</text></svg>
<svg style="left:700px;top:216px" width="123" height="123" fill="none" stroke-linejoin="round" stroke-linecap="round" ><rect x="0" y="0" width="123" height="123" fill="#6b6b6b"/><rect x="4" y="1" width="114" height="121" fill="#545454"/><rect x="118" y="1" width="4" height="121" fill="#707070"/><defs><linearGradient id="pg" x1="0" y1="0" x2="0" y2="1"><stop offset="0" stop-color="#f4f4f4"/><stop offset="0.12" stop-color="#d0d0d0"/><stop offset="0.2" stop-color="#808080"/><stop offset="0.5" stop-color="#767676"/><stop offset="1" stop-color="#5a5a5a"/></linearGradient></defs><rect x="11" y="6" width="26" height="98" fill="url(#pg)"/><rect x="12" y="19" width="24" height="26" fill="#2c2c2c"/><rect x="13" y="20" width="9" height="24" fill="#1c1c1c"/><rect x="14" y="21.0" width="7" height="1" fill="#353535"/><rect x="14" y="23.6" width="7" height="1" fill="#353535"/><rect x="14" y="26.2" width="7" height="1" fill="#353535"/><rect x="14" y="28.8" width="7" height="1" fill="#353535"/><rect x="14" y="31.4" width="7" height="1" fill="#353535"/><rect x="14" y="34.0" width="7" height="1" fill="#353535"/><rect x="14" y="36.6" width="7" height="1" fill="#353535"/><rect x="14" y="39.2" width="7" height="1" fill="#353535"/><rect x="14" y="41.8" width="7" height="1" fill="#353535"/><rect x="23" y="19" width="5" height="26" fill="#333"/><ellipse cx="34" cy="23" rx="1.5" ry="2.2" fill="#e0c860"/><ellipse cx="34" cy="41" rx="1.5" ry="2.2" fill="#50c060"/><rect x="12" y="66" width="24" height="26" fill="#2c2c2c"/><rect x="13" y="67" width="9" height="24" fill="#1c1c1c"/><rect x="14" y="68.0" width="7" height="1" fill="#353535"/><rect x="14" y="70.6" width="7" height="1" fill="#353535"/><rect x="14" y="73.2" width="7" height="1" fill="#353535"/><rect x="14" y="75.8" width="7" height="1" fill="#353535"/><rect x="14" y="78.4" width="7" height="1" fill="#353535"/><rect x="14" y="81.0" width="7" height="1" fill="#353535"/><rect x="14" y="83.6" width="7" height="1" fill="#353535"/><rect x="14" y="86.2" width="7" height="1" fill="#353535"/><rect x="14" y="88.8" width="7" height="1" fill="#353535"/><rect x="23" y="66" width="5" height="26" fill="#333"/><ellipse cx="34" cy="70" rx="1.5" ry="2.2" fill="#e0c860"/><ellipse cx="34" cy="88" rx="1.5" ry="2.2" fill="#50c060"/><text x="40" y="36" font-size="10" font-weight="bold" fill="#f0f0f0" font-family="Liberation Sans">N1</text><text x="40" y="83" font-size="10" font-weight="bold" fill="#f0f0f0" font-family="Liberation Sans">N2</text><rect x="62.5" y="3.0" width="8" height="8" fill="#3a3a3a"/><rect x="63.5" y="4.0" width="6" height="6" fill="#a9a9a9"/><rect x="62.5" y="13.4" width="8" height="8" fill="#3a3a3a"/><rect x="63.5" y="14.4" width="6" height="6" fill="#a9a9a9"/><rect x="62.5" y="23.8" width="8" height="8" fill="#3a3a3a"/><rect x="63.5" y="24.8" width="6" height="6" fill="#a9a9a9"/><rect x="62.5" y="34.2" width="8" height="8" fill="#3a3a3a"/><rect x="63.5" y="35.2" width="6" height="6" fill="#a9a9a9"/><rect x="62.5" y="44.6" width="8" height="8" fill="#3a3a3a"/><rect x="63.5" y="45.6" width="6" height="6" fill="#a9a9a9"/><rect x="62.5" y="55.0" width="8" height="8" fill="#3a3a3a"/><rect x="63.5" y="56.0" width="6" height="6" fill="#a9a9a9"/><rect x="62.5" y="65.4" width="8" height="8" fill="#3a3a3a"/><rect x="63.5" y="66.4" width="6" height="6" fill="#a9a9a9"/><rect x="62.5" y="75.8" width="8" height="8" fill="#3a3a3a"/><rect x="63.5" y="76.8" width="6" height="6" fill="#a9a9a9"/><rect x="62.5" y="86.2" width="8" height="8" fill="#3a3a3a"/><rect x="63.5" y="87.2" width="6" height="6" fill="#a9a9a9"/><rect x="62.5" y="96.6" width="8" height="8" fill="#3a3a3a"/><rect x="63.5" y="97.6" width="6" height="6" fill="#a9a9a9"/><rect x="73.5" y="3.0" width="8" height="8" fill="#3a3a3a"/><rect x="74.5" y="4.0" width="6" height="6" fill="#a9a9a9"/><rect x="73.5" y="13.4" width="8" height="8" fill="#3a3a3a"/><rect x="74.5" y="14.4" width="6" height="6" fill="#a9a9a9"/><rect x="73.5" y="23.8" width="8" height="8" fill="#3a3a3a"/><rect x="74.5" y="24.8" width="6" height="6" fill="#a9a9a9"/><rect x="73.5" y="34.2" width="8" height="8" fill="#3a3a3a"/><rect x="74.5" y="35.2" width="6" height="6" fill="#a9a9a9"/><rect x="73.5" y="44.6" width="8" height="8" fill="#3a3a3a"/><rect x="74.5" y="45.6" width="6" height="6" fill="#a9a9a9"/><rect x="73.5" y="55.0" width="8" height="8" fill="#3a3a3a"/><rect x="74.5" y="56.0" width="6" height="6" fill="#a9a9a9"/><rect x="73.5" y="65.4" width="8" height="8" fill="#3a3a3a"/><rect x="74.5" y="66.4" width="6" height="6" fill="#a9a9a9"/><rect x="73.5" y="75.8" width="8" height="8" fill="#3a3a3a"/><rect x="74.5" y="76.8" width="6" height="6" fill="#a9a9a9"/><rect x="73.5" y="86.2" width="8" height="8" fill="#3a3a3a"/><rect x="74.5" y="87.2" width="6" height="6" fill="#a9a9a9"/><rect x="73.5" y="96.6" width="8" height="8" fill="#3a3a3a"/><rect x="74.5" y="97.6" width="6" height="6" fill="#a9a9a9"/><rect x="84.5" y="2.5" width="30" height="104" fill="none" stroke="#c8c8c8" stroke-width="0.8"/><path d="M99.5 2.5 V106.5" stroke="#c8c8c8" stroke-width="0.8"/><path d="M84.5 12.9 H114.5" stroke="#c8c8c8" stroke-width="0.7"/><path d="M84.5 23.3 H114.5" stroke="#c8c8c8" stroke-width="0.7"/><path d="M84.5 33.7 H114.5" stroke="#c8c8c8" stroke-width="0.7"/><path d="M84.5 44.1 H114.5" stroke="#c8c8c8" stroke-width="0.7"/><path d="M84.5 54.5 H114.5" stroke="#c8c8c8" stroke-width="0.7"/><path d="M84.5 64.9 H114.5" stroke="#c8c8c8" stroke-width="0.7"/><path d="M84.5 75.3 H114.5" stroke="#c8c8c8" stroke-width="0.7"/><path d="M84.5 85.7 H114.5" stroke="#c8c8c8" stroke-width="0.7"/><path d="M84.5 96.1 H114.5" stroke="#c8c8c8" stroke-width="0.7"/><text x="92" y="14.3" text-anchor="middle" font-size="13" font-weight="bold" fill="#f4f4f4" font-family="Liberation Sans">*</text><text x="92" y="21.7" text-anchor="middle" font-size="10" fill="#e8e8e8" font-family="Liberation Sans" letter-spacing="-0.5">F</text><text x="92" y="32.1" text-anchor="middle" font-size="10" fill="#e8e8e8" font-family="Liberation Sans" letter-spacing="-0.5">I</text><text x="92" y="42.5" text-anchor="middle" font-size="10" fill="#e8e8e8" font-family="Liberation Sans" letter-spacing="-0.5">N1</text><text x="92" y="52.9" text-anchor="middle" font-size="10" fill="#e8e8e8" font-family="Liberation Sans" letter-spacing="-0.5">N2</text><text x="92" y="63.3" text-anchor="middle" font-size="10" fill="#e8e8e8" font-family="Liberation Sans" letter-spacing="-0.5">B1</text><text x="92" y="73.7" text-anchor="middle" font-size="10" fill="#e8e8e8" font-family="Liberation Sans" letter-spacing="-0.5">B2</text><text x="92" y="84.1" text-anchor="middle" font-size="10" fill="#e8e8e8" font-family="Liberation Sans" letter-spacing="-0.5">D</text><text x="92" y="94.5" text-anchor="middle" font-size="10" fill="#e8e8e8" font-family="Liberation Sans" letter-spacing="-0.5">P</text><text x="92" y="104.9" text-anchor="middle" font-size="10" fill="#e8e8e8" font-family="Liberation Sans" letter-spacing="-0.5">S</text><text x="107" y="11.3" text-anchor="middle" font-size="10.5" fill="#e8e8e8" font-family="Liberation Serif" letter-spacing="-0.8">C1</text><text x="107" y="21.7" text-anchor="middle" font-size="10.5" fill="#e8e8e8" font-family="Liberation Serif" letter-spacing="-0.8">C2</text><text x="107" y="32.1" text-anchor="middle" font-size="10.5" fill="#e8e8e8" font-family="Liberation Serif" letter-spacing="-0.8">C3</text><text x="107" y="42.5" text-anchor="middle" font-size="10.5" fill="#e8e8e8" font-family="Liberation Serif" letter-spacing="-0.8">C4</text><text x="107" y="52.9" text-anchor="middle" font-size="10.5" fill="#e8e8e8" font-family="Liberation Serif" letter-spacing="-0.8">C5</text><path d="M0 106.5 H123" stroke="#3c3c3c" stroke-width="1"/><rect x="4" y="107" width="112" height="15" fill="#4a4a4a"/><text x="5" y="121" font-size="16" fill="#f2f2f2" font-family="Liberation Sans" letter-spacing="0.4">SC950A</text></svg>
<div style="position:absolute;left:693px;top:216px;width:7px;height:123px;background:#fff"></div>
<svg style="left:828px;top:216px" width="60" height="123" fill="none" stroke-linejoin="round" stroke-linecap="round" ><rect x="0" y="0" width="60" height="123" rx="3" fill="#6b6b6b"/><rect x="3" y="1" width="51" height="121" fill="#545454"/><rect x="54" y="1" width="5" height="121" fill="#707070"/><rect x="4.5" y="2.0" width="8" height="8" fill="#3a3a3a"/><rect x="5.5" y="3.0" width="6" height="6" fill="#a9a9a9"/><rect x="4.5" y="12.4" width="8" height="8" fill="#3a3a3a"/><rect x="5.5" y="13.4" width="6" height="6" fill="#a9a9a9"/><rect x="4.5" y="22.8" width="8" height="8" fill="#3a3a3a"/><rect x="5.5" y="23.8" width="6" height="6" fill="#a9a9a9"/><rect x="4.5" y="33.2" width="8" height="8" fill="#3a3a3a"/><rect x="5.5" y="34.2" width="6" height="6" fill="#a9a9a9"/><rect x="4.5" y="43.6" width="8" height="8" fill="#3a3a3a"/><rect x="5.5" y="44.6" width="6" height="6" fill="#a9a9a9"/><rect x="4.5" y="54.0" width="8" height="8" fill="#3a3a3a"/><rect x="5.5" y="55.0" width="6" height="6" fill="#a9a9a9"/><rect x="4.5" y="64.4" width="8" height="8" fill="#3a3a3a"/><rect x="5.5" y="65.4" width="6" height="6" fill="#a9a9a9"/><rect x="4.5" y="74.8" width="8" height="8" fill="#3a3a3a"/><rect x="5.5" y="75.8" width="6" height="6" fill="#a9a9a9"/><rect x="4.5" y="85.2" width="8" height="8" fill="#3a3a3a"/><rect x="5.5" y="86.2" width="6" height="6" fill="#a9a9a9"/><rect x="4.5" y="95.6" width="8" height="8" fill="#3a3a3a"/><rect x="5.5" y="96.6" width="6" height="6" fill="#a9a9a9"/><rect x="14.5" y="2.0" width="8" height="8" fill="#3a3a3a"/><rect x="15.5" y="3.0" width="6" height="6" fill="#a9a9a9"/><rect x="14.5" y="12.4" width="8" height="8" fill="#3a3a3a"/><rect x="15.5" y="13.4" width="6" height="6" fill="#a9a9a9"/><rect x="14.5" y="22.8" width="8" height="8" fill="#3a3a3a"/><rect x="15.5" y="23.8" width="6" height="6" fill="#a9a9a9"/><rect x="14.5" y="33.2" width="8" height="8" fill="#3a3a3a"/><rect x="15.5" y="34.2" width="6" height="6" fill="#a9a9a9"/><rect x="14.5" y="43.6" width="8" height="8" fill="#3a3a3a"/><rect x="15.5" y="44.6" width="6" height="6" fill="#a9a9a9"/><rect x="14.5" y="54.0" width="8" height="8" fill="#3a3a3a"/><rect x="15.5" y="55.0" width="6" height="6" fill="#a9a9a9"/><rect x="14.5" y="64.4" width="8" height="8" fill="#3a3a3a"/><rect x="15.5" y="65.4" width="6" height="6" fill="#a9a9a9"/><rect x="14.5" y="74.8" width="8" height="8" fill="#3a3a3a"/><rect x="15.5" y="75.8" width="6" height="6" fill="#a9a9a9"/><rect x="14.5" y="85.2" width="8" height="8" fill="#3a3a3a"/><rect x="15.5" y="86.2" width="6" height="6" fill="#a9a9a9"/><rect x="14.5" y="95.6" width="8" height="8" fill="#3a3a3a"/><rect x="15.5" y="96.6" width="6" height="6" fill="#a9a9a9"/><rect x="34.5" y="2.5" width="18" height="104" fill="none" stroke="#c8c8c8" stroke-width="0.8"/><path d="M34.5 12.9 H52.5" stroke="#c8c8c8" stroke-width="0.7"/><path d="M34.5 23.3 H52.5" stroke="#c8c8c8" stroke-width="0.7"/><path d="M34.5 33.7 H52.5" stroke="#c8c8c8" stroke-width="0.7"/><path d="M34.5 44.1 H52.5" stroke="#c8c8c8" stroke-width="0.7"/><path d="M34.5 54.5 H52.5" stroke="#c8c8c8" stroke-width="0.7"/><path d="M34.5 64.9 H52.5" stroke="#c8c8c8" stroke-width="0.7"/><path d="M34.5 75.3 H52.5" stroke="#c8c8c8" stroke-width="0.7"/><path d="M34.5 85.7 H52.5" stroke="#c8c8c8" stroke-width="0.7"/><path d="M34.5 96.1 H52.5" stroke="#c8c8c8" stroke-width="0.7"/><text x="43.5" y="13.9" text-anchor="middle" font-size="12" font-weight="bold" fill="#f4f4f4" font-family="Liberation Sans">*</text><text x="43.5" y="22.1" text-anchor="middle" font-size="11.5" fill="#e0e0e0" font-family="Liberation Serif" letter-spacing="-0.9">c</text><text x="43.5" y="32.5" text-anchor="middle" font-size="11.5" fill="#e0e0e0" font-family="Liberation Serif" letter-spacing="-0.9">01</text><text x="43.5" y="42.9" text-anchor="middle" font-size="11.5" fill="#e0e0e0" font-family="Liberation Serif" letter-spacing="-0.9">02</text><text x="43.5" y="53.3" text-anchor="middle" font-size="11.5" fill="#e0e0e0" font-family="Liberation Serif" letter-spacing="-0.9">03</text><text x="43.5" y="63.7" text-anchor="middle" font-size="11.5" fill="#e0e0e0" font-family="Liberation Serif" letter-spacing="-0.9">04</text><text x="43.5" y="74.1" text-anchor="middle" font-size="11.5" fill="#e0e0e0" font-family="Liberation Serif" letter-spacing="-0.9">05</text><text x="43.5" y="84.5" text-anchor="middle" font-size="11.5" fill="#e0e0e0" font-family="Liberation Serif" letter-spacing="-0.9">06</text><text x="43.5" y="94.9" text-anchor="middle" font-size="11.5" fill="#e0e0e0" font-family="Liberation Serif" letter-spacing="-0.9">07</text><text x="43.5" y="105.3" text-anchor="middle" font-size="11.5" fill="#e0e0e0" font-family="Liberation Serif" letter-spacing="-0.9">08</text><path d="M0 106.5 H60" stroke="#3c3c3c" stroke-width="1"/><rect x="3" y="107" width="51" height="14" fill="#4a4a4a"/><text x="30.0" y="120" text-anchor="middle" font-size="15" fill="#f2f2f2" font-family="Liberation Sans" letter-spacing="0.3">235A</text></svg><div class="t s" style="left:828px;top:343px;width:60px;text-align:center;font-size:18px;line-height:20px;height:20px;-webkit-text-stroke:0.35px #000;letter-spacing:0.5px">1</div>
<svg style="left:828px;top:368px" width="60" height="123" fill="none" stroke-linejoin="round" stroke-linecap="round" ><rect x="0" y="0" width="60" height="123" fill="#6e6e6e"/><rect x="3" y="3" width="54" height="117" rx="3" fill="#525252" stroke="#444" stroke-width="1"/><rect x="3.5" y="17.5" width="10" height="35" rx="1.5" fill="#505050" stroke="#444" stroke-width="1"/><rect x="6" y="20" width="5" height="8" fill="#777"/><rect x="6" y="31" width="5" height="8" fill="#777"/><rect x="6" y="42" width="5" height="8" fill="#777"/></svg><div class="t" style="left:828px;top:474px;width:60px;text-align:center;font-size:14.5px;line-height:18px;height:18px;color:#fff;font-family:Liberation Sans,sans-serif">空槽位</div><div class="t s" style="left:828px;top:495px;width:60px;text-align:center;font-size:18px;line-height:20px;height:20px;-webkit-text-stroke:0.35px #000;letter-spacing:0.5px">1</div>
<svg style="left:894px;top:216px" width="60" height="123" fill="none" stroke-linejoin="round" stroke-linecap="round" ><rect x="0" y="0" width="60" height="123" rx="3" fill="#6b6b6b"/><rect x="3" y="1" width="51" height="121" fill="#545454"/><rect x="54" y="1" width="5" height="121" fill="#707070"/><rect x="4.5" y="2.0" width="8" height="8" fill="#3a3a3a"/><rect x="5.5" y="3.0" width="6" height="6" fill="#a9a9a9"/><rect x="4.5" y="12.4" width="8" height="8" fill="#3a3a3a"/><rect x="5.5" y="13.4" width="6" height="6" fill="#a9a9a9"/><rect x="4.5" y="22.8" width="8" height="8" fill="#3a3a3a"/><rect x="5.5" y="23.8" width="6" height="6" fill="#a9a9a9"/><rect x="4.5" y="33.2" width="8" height="8" fill="#3a3a3a"/><rect x="5.5" y="34.2" width="6" height="6" fill="#a9a9a9"/><rect x="4.5" y="43.6" width="8" height="8" fill="#3a3a3a"/><rect x="5.5" y="44.6" width="6" height="6" fill="#a9a9a9"/><rect x="4.5" y="54.0" width="8" height="8" fill="#3a3a3a"/><rect x="5.5" y="55.0" width="6" height="6" fill="#a9a9a9"/><rect x="4.5" y="64.4" width="8" height="8" fill="#3a3a3a"/><rect x="5.5" y="65.4" width="6" height="6" fill="#a9a9a9"/><rect x="4.5" y="74.8" width="8" height="8" fill="#3a3a3a"/><rect x="5.5" y="75.8" width="6" height="6" fill="#a9a9a9"/><rect x="4.5" y="85.2" width="8" height="8" fill="#3a3a3a"/><rect x="5.5" y="86.2" width="6" height="6" fill="#a9a9a9"/><rect x="4.5" y="95.6" width="8" height="8" fill="#3a3a3a"/><rect x="5.5" y="96.6" width="6" height="6" fill="#a9a9a9"/><rect x="14.5" y="2.0" width="8" height="8" fill="#3a3a3a"/><rect x="15.5" y="3.0" width="6" height="6" fill="#a9a9a9"/><rect x="14.5" y="12.4" width="8" height="8" fill="#3a3a3a"/><rect x="15.5" y="13.4" width="6" height="6" fill="#a9a9a9"/><rect x="14.5" y="22.8" width="8" height="8" fill="#3a3a3a"/><rect x="15.5" y="23.8" width="6" height="6" fill="#a9a9a9"/><rect x="14.5" y="33.2" width="8" height="8" fill="#3a3a3a"/><rect x="15.5" y="34.2" width="6" height="6" fill="#a9a9a9"/><rect x="14.5" y="43.6" width="8" height="8" fill="#3a3a3a"/><rect x="15.5" y="44.6" width="6" height="6" fill="#a9a9a9"/><rect x="14.5" y="54.0" width="8" height="8" fill="#3a3a3a"/><rect x="15.5" y="55.0" width="6" height="6" fill="#a9a9a9"/><rect x="14.5" y="64.4" width="8" height="8" fill="#3a3a3a"/><rect x="15.5" y="65.4" width="6" height="6" fill="#a9a9a9"/><rect x="14.5" y="74.8" width="8" height="8" fill="#3a3a3a"/><rect x="15.5" y="75.8" width="6" height="6" fill="#a9a9a9"/><rect x="14.5" y="85.2" width="8" height="8" fill="#3a3a3a"/><rect x="15.5" y="86.2" width="6" height="6" fill="#a9a9a9"/><rect x="14.5" y="95.6" width="8" height="8" fill="#3a3a3a"/><rect x="15.5" y="96.6" width="6" height="6" fill="#a9a9a9"/><rect x="34.5" y="2.5" width="18" height="104" fill="none" stroke="#c8c8c8" stroke-width="0.8"/><path d="M34.5 12.9 H52.5" stroke="#c8c8c8" stroke-width="0.7"/><path d="M34.5 23.3 H52.5" stroke="#c8c8c8" stroke-width="0.7"/><path d="M34.5 33.7 H52.5" stroke="#c8c8c8" stroke-width="0.7"/><path d="M34.5 44.1 H52.5" stroke="#c8c8c8" stroke-width="0.7"/><path d="M34.5 54.5 H52.5" stroke="#c8c8c8" stroke-width="0.7"/><path d="M34.5 64.9 H52.5" stroke="#c8c8c8" stroke-width="0.7"/><path d="M34.5 75.3 H52.5" stroke="#c8c8c8" stroke-width="0.7"/><path d="M34.5 85.7 H52.5" stroke="#c8c8c8" stroke-width="0.7"/><path d="M34.5 96.1 H52.5" stroke="#c8c8c8" stroke-width="0.7"/><text x="43.5" y="13.9" text-anchor="middle" font-size="12" font-weight="bold" fill="#f4f4f4" font-family="Liberation Sans">*</text><text x="43.5" y="22.1" text-anchor="middle" font-size="11.5" fill="#e0e0e0" font-family="Liberation Serif" letter-spacing="-0.9">c</text><text x="43.5" y="32.5" text-anchor="middle" font-size="11.5" fill="#e0e0e0" font-family="Liberation Serif" letter-spacing="-0.9">01</text><text x="43.5" y="42.9" text-anchor="middle" font-size="11.5" fill="#e0e0e0" font-family="Liberation Serif" letter-spacing="-0.9">02</text><text x="43.5" y="53.3" text-anchor="middle" font-size="11.5" fill="#e0e0e0" font-family="Liberation Serif" letter-spacing="-0.9">03</text><text x="43.5" y="63.7" text-anchor="middle" font-size="11.5" fill="#e0e0e0" font-family="Liberation Serif" letter-spacing="-0.9">04</text><text x="43.5" y="74.1" text-anchor="middle" font-size="11.5" fill="#e0e0e0" font-family="Liberation Serif" letter-spacing="-0.9">05</text><text x="43.5" y="84.5" text-anchor="middle" font-size="11.5" fill="#e0e0e0" font-family="Liberation Serif" letter-spacing="-0.9">06</text><text x="43.5" y="94.9" text-anchor="middle" font-size="11.5" fill="#e0e0e0" font-family="Liberation Serif" letter-spacing="-0.9">07</text><text x="43.5" y="105.3" text-anchor="middle" font-size="11.5" fill="#e0e0e0" font-family="Liberation Serif" letter-spacing="-0.9">08</text><path d="M0 106.5 H60" stroke="#3c3c3c" stroke-width="1"/><rect x="3" y="107" width="51" height="14" fill="#4a4a4a"/><text x="30.0" y="120" text-anchor="middle" font-size="15" fill="#f2f2f2" font-family="Liberation Sans" letter-spacing="0.3">231A</text></svg><div class="t s" style="left:894px;top:343px;width:60px;text-align:center;font-size:18px;line-height:20px;height:20px;-webkit-text-stroke:0.35px #000;letter-spacing:0.5px">2</div>
<svg style="left:894px;top:368px" width="60" height="123" fill="none" stroke-linejoin="round" stroke-linecap="round" ><rect x="0" y="0" width="60" height="123" fill="#6e6e6e"/><rect x="3" y="3" width="54" height="117" rx="3" fill="#525252" stroke="#444" stroke-width="1"/><rect x="3.5" y="17.5" width="10" height="35" rx="1.5" fill="#505050" stroke="#444" stroke-width="1"/><rect x="6" y="20" width="5" height="8" fill="#777"/><rect x="6" y="31" width="5" height="8" fill="#777"/><rect x="6" y="42" width="5" height="8" fill="#777"/></svg><div class="t" style="left:894px;top:474px;width:60px;text-align:center;font-size:14.5px;line-height:18px;height:18px;color:#fff;font-family:Liberation Sans,sans-serif">空槽位</div><div class="t s" style="left:894px;top:495px;width:60px;text-align:center;font-size:18px;line-height:20px;height:20px;-webkit-text-stroke:0.35px #000;letter-spacing:0.5px">2</div>
<svg style="left:960px;top:216px" width="60" height="123" fill="none" stroke-linejoin="round" stroke-linecap="round" ><rect x="0" y="0" width="60" height="123" rx="3" fill="#6b6b6b"/><rect x="3" y="1" width="51" height="121" fill="#545454"/><rect x="54" y="1" width="5" height="121" fill="#707070"/><rect x="4.5" y="2.0" width="8" height="8" fill="#3a3a3a"/><rect x="5.5" y="3.0" width="6" height="6" fill="#a9a9a9"/><rect x="4.5" y="12.4" width="8" height="8" fill="#3a3a3a"/><rect x="5.5" y="13.4" width="6" height="6" fill="#a9a9a9"/><rect x="4.5" y="22.8" width="8" height="8" fill="#3a3a3a"/><rect x="5.5" y="23.8" width="6" height="6" fill="#a9a9a9"/><rect x="4.5" y="33.2" width="8" height="8" fill="#3a3a3a"/><rect x="5.5" y="34.2" width="6" height="6" fill="#a9a9a9"/><rect x="4.5" y="43.6" width="8" height="8" fill="#3a3a3a"/><rect x="5.5" y="44.6" width="6" height="6" fill="#a9a9a9"/><rect x="4.5" y="54.0" width="8" height="8" fill="#3a3a3a"/><rect x="5.5" y="55.0" width="6" height="6" fill="#a9a9a9"/><rect x="4.5" y="64.4" width="8" height="8" fill="#3a3a3a"/><rect x="5.5" y="65.4" width="6" height="6" fill="#a9a9a9"/><rect x="4.5" y="74.8" width="8" height="8" fill="#3a3a3a"/><rect x="5.5" y="75.8" width="6" height="6" fill="#a9a9a9"/><rect x="4.5" y="85.2" width="8" height="8" fill="#3a3a3a"/><rect x="5.5" y="86.2" width="6" height="6" fill="#a9a9a9"/><rect x="4.5" y="95.6" width="8" height="8" fill="#3a3a3a"/><rect x="5.5" y="96.6" width="6" height="6" fill="#a9a9a9"/><rect x="14.5" y="2.0" width="8" height="8" fill="#3a3a3a"/><rect x="15.5" y="3.0" width="6" height="6" fill="#a9a9a9"/><rect x="14.5" y="12.4" width="8" height="8" fill="#3a3a3a"/><rect x="15.5" y="13.4" width="6" height="6" fill="#a9a9a9"/><rect x="14.5" y="22.8" width="8" height="8" fill="#3a3a3a"/><rect x="15.5" y="23.8" width="6" height="6" fill="#a9a9a9"/><rect x="14.5" y="33.2" width="8" height="8" fill="#3a3a3a"/><rect x="15.5" y="34.2" width="6" height="6" fill="#a9a9a9"/><rect x="14.5" y="43.6" width="8" height="8" fill="#3a3a3a"/><rect x="15.5" y="44.6" width="6" height="6" fill="#a9a9a9"/><rect x="14.5" y="54.0" width="8" height="8" fill="#3a3a3a"/><rect x="15.5" y="55.0" width="6" height="6" fill="#a9a9a9"/><rect x="14.5" y="64.4" width="8" height="8" fill="#3a3a3a"/><rect x="15.5" y="65.4" width="6" height="6" fill="#a9a9a9"/><rect x="14.5" y="74.8" width="8" height="8" fill="#3a3a3a"/><rect x="15.5" y="75.8" width="6" height="6" fill="#a9a9a9"/><rect x="14.5" y="85.2" width="8" height="8" fill="#3a3a3a"/><rect x="15.5" y="86.2" width="6" height="6" fill="#a9a9a9"/><rect x="14.5" y="95.6" width="8" height="8" fill="#3a3a3a"/><rect x="15.5" y="96.6" width="6" height="6" fill="#a9a9a9"/><rect x="34.5" y="2.5" width="18" height="104" fill="none" stroke="#c8c8c8" stroke-width="0.8"/><path d="M34.5 12.9 H52.5" stroke="#c8c8c8" stroke-width="0.7"/><path d="M34.5 23.3 H52.5" stroke="#c8c8c8" stroke-width="0.7"/><path d="M34.5 33.7 H52.5" stroke="#c8c8c8" stroke-width="0.7"/><path d="M34.5 44.1 H52.5" stroke="#c8c8c8" stroke-width="0.7"/><path d="M34.5 54.5 H52.5" stroke="#c8c8c8" stroke-width="0.7"/><path d="M34.5 64.9 H52.5" stroke="#c8c8c8" stroke-width="0.7"/><path d="M34.5 75.3 H52.5" stroke="#c8c8c8" stroke-width="0.7"/><path d="M34.5 85.7 H52.5" stroke="#c8c8c8" stroke-width="0.7"/><path d="M34.5 96.1 H52.5" stroke="#c8c8c8" stroke-width="0.7"/><text x="43.5" y="13.9" text-anchor="middle" font-size="12" font-weight="bold" fill="#f4f4f4" font-family="Liberation Sans">*</text><text x="43.5" y="22.1" text-anchor="middle" font-size="11.5" fill="#e0e0e0" font-family="Liberation Serif" letter-spacing="-0.9">c</text><text x="43.5" y="32.5" text-anchor="middle" font-size="11.5" fill="#e0e0e0" font-family="Liberation Serif" letter-spacing="-0.9">01</text><text x="43.5" y="42.9" text-anchor="middle" font-size="11.5" fill="#e0e0e0" font-family="Liberation Serif" letter-spacing="-0.9">02</text><text x="43.5" y="53.3" text-anchor="middle" font-size="11.5" fill="#e0e0e0" font-family="Liberation Serif" letter-spacing="-0.9">03</text><text x="43.5" y="63.7" text-anchor="middle" font-size="11.5" fill="#e0e0e0" font-family="Liberation Serif" letter-spacing="-0.9">04</text><text x="43.5" y="74.1" text-anchor="middle" font-size="11.5" fill="#e0e0e0" font-family="Liberation Serif" letter-spacing="-0.9">05</text><text x="43.5" y="84.5" text-anchor="middle" font-size="11.5" fill="#e0e0e0" font-family="Liberation Serif" letter-spacing="-0.9">06</text><text x="43.5" y="94.9" text-anchor="middle" font-size="11.5" fill="#e0e0e0" font-family="Liberation Serif" letter-spacing="-0.9">07</text><text x="43.5" y="105.3" text-anchor="middle" font-size="11.5" fill="#e0e0e0" font-family="Liberation Serif" letter-spacing="-0.9">08</text><path d="M0 106.5 H60" stroke="#3c3c3c" stroke-width="1"/><rect x="3" y="107" width="51" height="14" fill="#4a4a4a"/><text x="30.0" y="120" text-anchor="middle" font-size="15" fill="#f2f2f2" font-family="Liberation Sans" letter-spacing="0.3">231E</text></svg><div class="t s" style="left:960px;top:343px;width:60px;text-align:center;font-size:18px;line-height:20px;height:20px;-webkit-text-stroke:0.35px #000;letter-spacing:0.5px">3</div>
<svg style="left:960px;top:368px" width="60" height="123" fill="none" stroke-linejoin="round" stroke-linecap="round" ><rect x="0" y="0" width="60" height="123" fill="#6e6e6e"/><rect x="3" y="3" width="54" height="117" rx="3" fill="#525252" stroke="#444" stroke-width="1"/><rect x="3.5" y="17.5" width="10" height="35" rx="1.5" fill="#505050" stroke="#444" stroke-width="1"/><rect x="6" y="20" width="5" height="8" fill="#777"/><rect x="6" y="31" width="5" height="8" fill="#777"/><rect x="6" y="42" width="5" height="8" fill="#777"/></svg><div class="t" style="left:960px;top:474px;width:60px;text-align:center;font-size:14.5px;line-height:18px;height:18px;color:#fff;font-family:Liberation Sans,sans-serif">空槽位</div><div class="t s" style="left:960px;top:495px;width:60px;text-align:center;font-size:18px;line-height:20px;height:20px;-webkit-text-stroke:0.35px #000;letter-spacing:0.5px">3</div>
<svg style="left:1026px;top:216px" width="60" height="123" fill="none" stroke-linejoin="round" stroke-linecap="round" ><rect x="0" y="0" width="60" height="123" rx="3" fill="#6b6b6b"/><rect x="3" y="1" width="51" height="121" fill="#545454"/><rect x="54" y="1" width="5" height="121" fill="#707070"/><rect x="4.5" y="2.0" width="8" height="8" fill="#3a3a3a"/><rect x="5.5" y="3.0" width="6" height="6" fill="#a9a9a9"/><rect x="4.5" y="12.4" width="8" height="8" fill="#3a3a3a"/><rect x="5.5" y="13.4" width="6" height="6" fill="#a9a9a9"/><rect x="4.5" y="22.8" width="8" height="8" fill="#3a3a3a"/><rect x="5.5" y="23.8" width="6" height="6" fill="#a9a9a9"/><rect x="4.5" y="33.2" width="8" height="8" fill="#3a3a3a"/><rect x="5.5" y="34.2" width="6" height="6" fill="#a9a9a9"/><rect x="4.5" y="43.6" width="8" height="8" fill="#3a3a3a"/><rect x="5.5" y="44.6" width="6" height="6" fill="#a9a9a9"/><rect x="4.5" y="54.0" width="8" height="8" fill="#3a3a3a"/><rect x="5.5" y="55.0" width="6" height="6" fill="#a9a9a9"/><rect x="4.5" y="64.4" width="8" height="8" fill="#3a3a3a"/><rect x="5.5" y="65.4" width="6" height="6" fill="#a9a9a9"/><rect x="4.5" y="74.8" width="8" height="8" fill="#3a3a3a"/><rect x="5.5" y="75.8" width="6" height="6" fill="#a9a9a9"/><rect x="4.5" y="85.2" width="8" height="8" fill="#3a3a3a"/><rect x="5.5" y="86.2" width="6" height="6" fill="#a9a9a9"/><rect x="4.5" y="95.6" width="8" height="8" fill="#3a3a3a"/><rect x="5.5" y="96.6" width="6" height="6" fill="#a9a9a9"/><rect x="14.5" y="2.0" width="8" height="8" fill="#3a3a3a"/><rect x="15.5" y="3.0" width="6" height="6" fill="#a9a9a9"/><rect x="14.5" y="12.4" width="8" height="8" fill="#3a3a3a"/><rect x="15.5" y="13.4" width="6" height="6" fill="#a9a9a9"/><rect x="14.5" y="22.8" width="8" height="8" fill="#3a3a3a"/><rect x="15.5" y="23.8" width="6" height="6" fill="#a9a9a9"/><rect x="14.5" y="33.2" width="8" height="8" fill="#3a3a3a"/><rect x="15.5" y="34.2" width="6" height="6" fill="#a9a9a9"/><rect x="14.5" y="43.6" width="8" height="8" fill="#3a3a3a"/><rect x="15.5" y="44.6" width="6" height="6" fill="#a9a9a9"/><rect x="14.5" y="54.0" width="8" height="8" fill="#3a3a3a"/><rect x="15.5" y="55.0" width="6" height="6" fill="#a9a9a9"/><rect x="14.5" y="64.4" width="8" height="8" fill="#3a3a3a"/><rect x="15.5" y="65.4" width="6" height="6" fill="#a9a9a9"/><rect x="14.5" y="74.8" width="8" height="8" fill="#3a3a3a"/><rect x="15.5" y="75.8" width="6" height="6" fill="#a9a9a9"/><rect x="14.5" y="85.2" width="8" height="8" fill="#3a3a3a"/><rect x="15.5" y="86.2" width="6" height="6" fill="#a9a9a9"/><rect x="14.5" y="95.6" width="8" height="8" fill="#3a3a3a"/><rect x="15.5" y="96.6" width="6" height="6" fill="#a9a9a9"/><rect x="34.5" y="2.5" width="18" height="104" fill="none" stroke="#c8c8c8" stroke-width="0.8"/><path d="M34.5 12.9 H52.5" stroke="#c8c8c8" stroke-width="0.7"/><path d="M34.5 23.3 H52.5" stroke="#c8c8c8" stroke-width="0.7"/><path d="M34.5 33.7 H52.5" stroke="#c8c8c8" stroke-width="0.7"/><path d="M34.5 44.1 H52.5" stroke="#c8c8c8" stroke-width="0.7"/><path d="M34.5 54.5 H52.5" stroke="#c8c8c8" stroke-width="0.7"/><path d="M34.5 64.9 H52.5" stroke="#c8c8c8" stroke-width="0.7"/><path d="M34.5 75.3 H52.5" stroke="#c8c8c8" stroke-width="0.7"/><path d="M34.5 85.7 H52.5" stroke="#c8c8c8" stroke-width="0.7"/><path d="M34.5 96.1 H52.5" stroke="#c8c8c8" stroke-width="0.7"/><text x="43.5" y="13.9" text-anchor="middle" font-size="12" font-weight="bold" fill="#f4f4f4" font-family="Liberation Sans">*</text><text x="43.5" y="22.1" text-anchor="middle" font-size="11.5" fill="#e0e0e0" font-family="Liberation Serif" letter-spacing="-0.9">c</text><text x="43.5" y="32.5" text-anchor="middle" font-size="11.5" fill="#e0e0e0" font-family="Liberation Serif" letter-spacing="-0.9">01</text><text x="43.5" y="42.9" text-anchor="middle" font-size="11.5" fill="#e0e0e0" font-family="Liberation Serif" letter-spacing="-0.9">02</text><text x="43.5" y="53.3" text-anchor="middle" font-size="11.5" fill="#e0e0e0" font-family="Liberation Serif" letter-spacing="-0.9">03</text><text x="43.5" y="63.7" text-anchor="middle" font-size="11.5" fill="#e0e0e0" font-family="Liberation Serif" letter-spacing="-0.9">04</text><text x="43.5" y="74.1" text-anchor="middle" font-size="11.5" fill="#e0e0e0" font-family="Liberation Serif" letter-spacing="-0.9">05</text><text x="43.5" y="84.5" text-anchor="middle" font-size="11.5" fill="#e0e0e0" font-family="Liberation Serif" letter-spacing="-0.9">06</text><text x="43.5" y="94.9" text-anchor="middle" font-size="11.5" fill="#e0e0e0" font-family="Liberation Serif" letter-spacing="-0.9">07</text><text x="43.5" y="105.3" text-anchor="middle" font-size="11.5" fill="#e0e0e0" font-family="Liberation Serif" letter-spacing="-0.9">08</text><path d="M0 106.5 H60" stroke="#3c3c3c" stroke-width="1"/><rect x="3" y="107" width="51" height="14" fill="#4a4a4a"/><text x="30.0" y="120" text-anchor="middle" font-size="15" fill="#f2f2f2" font-family="Liberation Sans" letter-spacing="0.3">232A</text></svg><div class="t s" style="left:1026px;top:343px;width:60px;text-align:center;font-size:18px;line-height:20px;height:20px;-webkit-text-stroke:0.35px #000;letter-spacing:0.5px">4</div>
<svg style="left:1026px;top:368px" width="60" height="123" fill="none" stroke-linejoin="round" stroke-linecap="round" ><rect x="0" y="0" width="60" height="123" fill="#6e6e6e"/><rect x="3" y="3" width="54" height="117" rx="3" fill="#525252" stroke="#444" stroke-width="1"/><rect x="3.5" y="17.5" width="10" height="35" rx="1.5" fill="#505050" stroke="#444" stroke-width="1"/><rect x="6" y="20" width="5" height="8" fill="#777"/><rect x="6" y="31" width="5" height="8" fill="#777"/><rect x="6" y="42" width="5" height="8" fill="#777"/></svg><div class="t" style="left:1026px;top:474px;width:60px;text-align:center;font-size:14.5px;line-height:18px;height:18px;color:#fff;font-family:Liberation Sans,sans-serif">空槽位</div><div class="t s" style="left:1026px;top:495px;width:60px;text-align:center;font-size:18px;line-height:20px;height:20px;-webkit-text-stroke:0.35px #000;letter-spacing:0.5px">4</div>
<svg style="left:1093px;top:216px" width="60" height="123" fill="none" stroke-linejoin="round" stroke-linecap="round" ><rect x="0" y="0" width="60" height="123" rx="3" fill="#6b6b6b"/><rect x="3" y="1" width="51" height="121" fill="#545454"/><rect x="54" y="1" width="5" height="121" fill="#707070"/><rect x="4.5" y="2.0" width="8" height="8" fill="#3a3a3a"/><rect x="5.5" y="3.0" width="6" height="6" fill="#a9a9a9"/><rect x="4.5" y="12.4" width="8" height="8" fill="#3a3a3a"/><rect x="5.5" y="13.4" width="6" height="6" fill="#a9a9a9"/><rect x="4.5" y="22.8" width="8" height="8" fill="#3a3a3a"/><rect x="5.5" y="23.8" width="6" height="6" fill="#a9a9a9"/><rect x="4.5" y="33.2" width="8" height="8" fill="#3a3a3a"/><rect x="5.5" y="34.2" width="6" height="6" fill="#a9a9a9"/><rect x="4.5" y="43.6" width="8" height="8" fill="#3a3a3a"/><rect x="5.5" y="44.6" width="6" height="6" fill="#a9a9a9"/><rect x="4.5" y="54.0" width="8" height="8" fill="#3a3a3a"/><rect x="5.5" y="55.0" width="6" height="6" fill="#a9a9a9"/><rect x="4.5" y="64.4" width="8" height="8" fill="#3a3a3a"/><rect x="5.5" y="65.4" width="6" height="6" fill="#a9a9a9"/><rect x="4.5" y="74.8" width="8" height="8" fill="#3a3a3a"/><rect x="5.5" y="75.8" width="6" height="6" fill="#a9a9a9"/><rect x="4.5" y="85.2" width="8" height="8" fill="#3a3a3a"/><rect x="5.5" y="86.2" width="6" height="6" fill="#a9a9a9"/><rect x="4.5" y="95.6" width="8" height="8" fill="#3a3a3a"/><rect x="5.5" y="96.6" width="6" height="6" fill="#a9a9a9"/><rect x="14.5" y="2.0" width="8" height="8" fill="#3a3a3a"/><rect x="15.5" y="3.0" width="6" height="6" fill="#a9a9a9"/><rect x="14.5" y="12.4" width="8" height="8" fill="#3a3a3a"/><rect x="15.5" y="13.4" width="6" height="6" fill="#a9a9a9"/><rect x="14.5" y="22.8" width="8" height="8" fill="#3a3a3a"/><rect x="15.5" y="23.8" width="6" height="6" fill="#a9a9a9"/><rect x="14.5" y="33.2" width="8" height="8" fill="#3a3a3a"/><rect x="15.5" y="34.2" width="6" height="6" fill="#a9a9a9"/><rect x="14.5" y="43.6" width="8" height="8" fill="#3a3a3a"/><rect x="15.5" y="44.6" width="6" height="6" fill="#a9a9a9"/><rect x="14.5" y="54.0" width="8" height="8" fill="#3a3a3a"/><rect x="15.5" y="55.0" width="6" height="6" fill="#a9a9a9"/><rect x="14.5" y="64.4" width="8" height="8" fill="#3a3a3a"/><rect x="15.5" y="65.4" width="6" height="6" fill="#a9a9a9"/><rect x="14.5" y="74.8" width="8" height="8" fill="#3a3a3a"/><rect x="15.5" y="75.8" width="6" height="6" fill="#a9a9a9"/><rect x="14.5" y="85.2" width="8" height="8" fill="#3a3a3a"/><rect x="15.5" y="86.2" width="6" height="6" fill="#a9a9a9"/><rect x="14.5" y="95.6" width="8" height="8" fill="#3a3a3a"/><rect x="15.5" y="96.6" width="6" height="6" fill="#a9a9a9"/><rect x="34.5" y="2.5" width="18" height="104" fill="none" stroke="#c8c8c8" stroke-width="0.8"/><path d="M34.5 12.9 H52.5" stroke="#c8c8c8" stroke-width="0.7"/><path d="M34.5 23.3 H52.5" stroke="#c8c8c8" stroke-width="0.7"/><path d="M34.5 33.7 H52.5" stroke="#c8c8c8" stroke-width="0.7"/><path d="M34.5 44.1 H52.5" stroke="#c8c8c8" stroke-width="0.7"/><path d="M34.5 54.5 H52.5" stroke="#c8c8c8" stroke-width="0.7"/><path d="M34.5 64.9 H52.5" stroke="#c8c8c8" stroke-width="0.7"/><path d="M34.5 75.3 H52.5" stroke="#c8c8c8" stroke-width="0.7"/><path d="M34.5 85.7 H52.5" stroke="#c8c8c8" stroke-width="0.7"/><path d="M34.5 96.1 H52.5" stroke="#c8c8c8" stroke-width="0.7"/><text x="43.5" y="13.9" text-anchor="middle" font-size="12" font-weight="bold" fill="#f4f4f4" font-family="Liberation Sans">*</text><text x="43.5" y="22.1" text-anchor="middle" font-size="11.5" fill="#e0e0e0" font-family="Liberation Serif" letter-spacing="-0.9">c</text><text x="43.5" y="32.5" text-anchor="middle" font-size="11.5" fill="#e0e0e0" font-family="Liberation Serif" letter-spacing="-0.9">01</text><text x="43.5" y="42.9" text-anchor="middle" font-size="11.5" fill="#e0e0e0" font-family="Liberation Serif" letter-spacing="-0.9">02</text><text x="43.5" y="53.3" text-anchor="middle" font-size="11.5" fill="#e0e0e0" font-family="Liberation Serif" letter-spacing="-0.9">03</text><text x="43.5" y="63.7" text-anchor="middle" font-size="11.5" fill="#e0e0e0" font-family="Liberation Serif" letter-spacing="-0.9">04</text><text x="43.5" y="74.1" text-anchor="middle" font-size="11.5" fill="#e0e0e0" font-family="Liberation Serif" letter-spacing="-0.9">05</text><text x="43.5" y="84.5" text-anchor="middle" font-size="11.5" fill="#e0e0e0" font-family="Liberation Serif" letter-spacing="-0.9">06</text><text x="43.5" y="94.9" text-anchor="middle" font-size="11.5" fill="#e0e0e0" font-family="Liberation Serif" letter-spacing="-0.9">07</text><text x="43.5" y="105.3" text-anchor="middle" font-size="11.5" fill="#e0e0e0" font-family="Liberation Serif" letter-spacing="-0.9">08</text><path d="M0 106.5 H60" stroke="#3c3c3c" stroke-width="1"/><rect x="3" y="107" width="51" height="14" fill="#4a4a4a"/><text x="30.0" y="120" text-anchor="middle" font-size="15" fill="#f2f2f2" font-family="Liberation Sans" letter-spacing="0.3">233A</text></svg><div class="t s" style="left:1093px;top:343px;width:60px;text-align:center;font-size:18px;line-height:20px;height:20px;-webkit-text-stroke:0.35px #000;letter-spacing:0.5px">5</div>
<svg style="left:1093px;top:368px" width="60" height="123" fill="none" stroke-linejoin="round" stroke-linecap="round" ><rect x="0" y="0" width="60" height="123" fill="#6e6e6e"/><rect x="3" y="3" width="54" height="117" rx="3" fill="#525252" stroke="#444" stroke-width="1"/><rect x="3.5" y="17.5" width="10" height="35" rx="1.5" fill="#505050" stroke="#444" stroke-width="1"/><rect x="6" y="20" width="5" height="8" fill="#777"/><rect x="6" y="31" width="5" height="8" fill="#777"/><rect x="6" y="42" width="5" height="8" fill="#777"/></svg><div class="t" style="left:1093px;top:474px;width:60px;text-align:center;font-size:14.5px;line-height:18px;height:18px;color:#fff;font-family:Liberation Sans,sans-serif">空槽位</div><div class="t s" style="left:1093px;top:495px;width:60px;text-align:center;font-size:18px;line-height:20px;height:20px;-webkit-text-stroke:0.35px #000;letter-spacing:0.5px">5</div>
<svg style="left:1159px;top:216px" width="60" height="123" fill="none" stroke-linejoin="round" stroke-linecap="round" ><rect x="0" y="0" width="60" height="123" rx="3" fill="#6b6b6b"/><rect x="3" y="1" width="51" height="121" fill="#545454"/><rect x="54" y="1" width="5" height="121" fill="#707070"/><rect x="4.5" y="2.0" width="8" height="8" fill="#3a3a3a"/><rect x="5.5" y="3.0" width="6" height="6" fill="#a9a9a9"/><rect x="4.5" y="12.4" width="8" height="8" fill="#3a3a3a"/><rect x="5.5" y="13.4" width="6" height="6" fill="#a9a9a9"/><rect x="4.5" y="22.8" width="8" height="8" fill="#3a3a3a"/><rect x="5.5" y="23.8" width="6" height="6" fill="#a9a9a9"/><rect x="4.5" y="33.2" width="8" height="8" fill="#3a3a3a"/><rect x="5.5" y="34.2" width="6" height="6" fill="#a9a9a9"/><rect x="4.5" y="43.6" width="8" height="8" fill="#3a3a3a"/><rect x="5.5" y="44.6" width="6" height="6" fill="#a9a9a9"/><rect x="4.5" y="54.0" width="8" height="8" fill="#3a3a3a"/><rect x="5.5" y="55.0" width="6" height="6" fill="#a9a9a9"/><rect x="4.5" y="64.4" width="8" height="8" fill="#3a3a3a"/><rect x="5.5" y="65.4" width="6" height="6" fill="#a9a9a9"/><rect x="4.5" y="74.8" width="8" height="8" fill="#3a3a3a"/><rect x="5.5" y="75.8" width="6" height="6" fill="#a9a9a9"/><rect x="4.5" y="85.2" width="8" height="8" fill="#3a3a3a"/><rect x="5.5" y="86.2" width="6" height="6" fill="#a9a9a9"/><rect x="4.5" y="95.6" width="8" height="8" fill="#3a3a3a"/><rect x="5.5" y="96.6" width="6" height="6" fill="#a9a9a9"/><rect x="14.5" y="2.0" width="8" height="8" fill="#3a3a3a"/><rect x="15.5" y="3.0" width="6" height="6" fill="#a9a9a9"/><rect x="14.5" y="12.4" width="8" height="8" fill="#3a3a3a"/><rect x="15.5" y="13.4" width="6" height="6" fill="#a9a9a9"/><rect x="14.5" y="22.8" width="8" height="8" fill="#3a3a3a"/><rect x="15.5" y="23.8" width="6" height="6" fill="#a9a9a9"/><rect x="14.5" y="33.2" width="8" height="8" fill="#3a3a3a"/><rect x="15.5" y="34.2" width="6" height="6" fill="#a9a9a9"/><rect x="14.5" y="43.6" width="8" height="8" fill="#3a3a3a"/><rect x="15.5" y="44.6" width="6" height="6" fill="#a9a9a9"/><rect x="14.5" y="54.0" width="8" height="8" fill="#3a3a3a"/><rect x="15.5" y="55.0" width="6" height="6" fill="#a9a9a9"/><rect x="14.5" y="64.4" width="8" height="8" fill="#3a3a3a"/><rect x="15.5" y="65.4" width="6" height="6" fill="#a9a9a9"/><rect x="14.5" y="74.8" width="8" height="8" fill="#3a3a3a"/><rect x="15.5" y="75.8" width="6" height="6" fill="#a9a9a9"/><rect x="14.5" y="85.2" width="8" height="8" fill="#3a3a3a"/><rect x="15.5" y="86.2" width="6" height="6" fill="#a9a9a9"/><rect x="14.5" y="95.6" width="8" height="8" fill="#3a3a3a"/><rect x="15.5" y="96.6" width="6" height="6" fill="#a9a9a9"/><rect x="27.5" y="2.5" width="29" height="104" fill="none" stroke="#c8c8c8" stroke-width="0.8"/><path d="M41.5 2.5 V106.5" stroke="#c8c8c8" stroke-width="0.8"/><path d="M27.5 12.9 H56.5" stroke="#c8c8c8" stroke-width="0.7"/><path d="M27.5 23.3 H56.5" stroke="#c8c8c8" stroke-width="0.7"/><path d="M27.5 33.7 H56.5" stroke="#c8c8c8" stroke-width="0.7"/><path d="M27.5 44.1 H56.5" stroke="#c8c8c8" stroke-width="0.7"/><path d="M27.5 54.5 H56.5" stroke="#c8c8c8" stroke-width="0.7"/><path d="M27.5 64.9 H56.5" stroke="#c8c8c8" stroke-width="0.7"/><path d="M27.5 75.3 H56.5" stroke="#c8c8c8" stroke-width="0.7"/><path d="M27.5 85.7 H56.5" stroke="#c8c8c8" stroke-width="0.7"/><path d="M27.5 96.1 H56.5" stroke="#c8c8c8" stroke-width="0.7"/><text x="34.7" y="13.9" text-anchor="middle" font-size="12" font-weight="bold" fill="#f4f4f4" font-family="Liberation Sans">*</text><text x="49" y="11.7" text-anchor="middle" font-size="11.5" fill="#e0e0e0" font-family="Liberation Serif" letter-spacing="-0.9"></text><text x="34.7" y="22.1" text-anchor="middle" font-size="11.5" fill="#e0e0e0" font-family="Liberation Serif" letter-spacing="-0.9">c</text><text x="49" y="22.1" text-anchor="middle" font-size="11.5" fill="#e0e0e0" font-family="Liberation Serif" letter-spacing="-0.9"></text><text x="34.7" y="32.5" text-anchor="middle" font-size="11.5" fill="#e0e0e0" font-family="Liberation Serif" letter-spacing="-0.9">01</text><text x="49" y="32.5" text-anchor="middle" font-size="11.5" fill="#e0e0e0" font-family="Liberation Serif" letter-spacing="-0.9">09</text><text x="34.7" y="42.9" text-anchor="middle" font-size="11.5" fill="#e0e0e0" font-family="Liberation Serif" letter-spacing="-0.9">02</text><text x="49" y="42.9" text-anchor="middle" font-size="11.5" fill="#e0e0e0" font-family="Liberation Serif" letter-spacing="-0.9">10</text><text x="34.7" y="53.3" text-anchor="middle" font-size="11.5" fill="#e0e0e0" font-family="Liberation Serif" letter-spacing="-0.9">03</text><text x="49" y="53.3" text-anchor="middle" font-size="11.5" fill="#e0e0e0" font-family="Liberation Serif" letter-spacing="-0.9">11</text><text x="34.7" y="63.7" text-anchor="middle" font-size="11.5" fill="#e0e0e0" font-family="Liberation Serif" letter-spacing="-0.9">04</text><text x="49" y="63.7" text-anchor="middle" font-size="11.5" fill="#e0e0e0" font-family="Liberation Serif" letter-spacing="-0.9">12</text><text x="34.7" y="74.1" text-anchor="middle" font-size="11.5" fill="#e0e0e0" font-family="Liberation Serif" letter-spacing="-0.9">05</text><text x="49" y="74.1" text-anchor="middle" font-size="11.5" fill="#e0e0e0" font-family="Liberation Serif" letter-spacing="-0.9">13</text><text x="34.7" y="84.5" text-anchor="middle" font-size="11.5" fill="#e0e0e0" font-family="Liberation Serif" letter-spacing="-0.9">06</text><text x="49" y="84.5" text-anchor="middle" font-size="11.5" fill="#e0e0e0" font-family="Liberation Serif" letter-spacing="-0.9">14</text><text x="34.7" y="94.9" text-anchor="middle" font-size="11.5" fill="#e0e0e0" font-family="Liberation Serif" letter-spacing="-0.9">07</text><text x="49" y="94.9" text-anchor="middle" font-size="11.5" fill="#e0e0e0" font-family="Liberation Serif" letter-spacing="-0.9">15</text><text x="34.7" y="105.3" text-anchor="middle" font-size="11.5" fill="#e0e0e0" font-family="Liberation Serif" letter-spacing="-0.9">08</text><text x="49" y="105.3" text-anchor="middle" font-size="11.5" fill="#e0e0e0" font-family="Liberation Serif" letter-spacing="-0.9">16</text><path d="M0 106.5 H60" stroke="#3c3c3c" stroke-width="1"/><rect x="3" y="107" width="51" height="14" fill="#4a4a4a"/><text x="30.0" y="120" text-anchor="middle" font-size="15" fill="#f2f2f2" font-family="Liberation Sans" letter-spacing="0.3">234A</text></svg><div class="t s" style="left:1159px;top:343px;width:60px;text-align:center;font-size:18px;line-height:20px;height:20px;-webkit-text-stroke:0.35px #000;letter-spacing:0.5px">6</div>
<svg style="left:1159px;top:368px" width="60" height="123" fill="none" stroke-linejoin="round" stroke-linecap="round" ><rect x="0" y="0" width="60" height="123" fill="#6e6e6e"/><rect x="3" y="3" width="54" height="117" rx="3" fill="#525252" stroke="#444" stroke-width="1"/><rect x="3.5" y="17.5" width="10" height="35" rx="1.5" fill="#505050" stroke="#444" stroke-width="1"/><rect x="6" y="20" width="5" height="8" fill="#777"/><rect x="6" y="31" width="5" height="8" fill="#777"/><rect x="6" y="42" width="5" height="8" fill="#777"/></svg><div class="t" style="left:1159px;top:474px;width:60px;text-align:center;font-size:14.5px;line-height:18px;height:18px;color:#fff;font-family:Liberation Sans,sans-serif">空槽位</div><div class="t s" style="left:1159px;top:495px;width:60px;text-align:center;font-size:18px;line-height:20px;height:20px;-webkit-text-stroke:0.35px #000;letter-spacing:0.5px">6</div>
<svg style="left:1225px;top:216px" width="60" height="123" fill="none" stroke-linejoin="round" stroke-linecap="round" ><rect x="0" y="0" width="60" height="123" rx="3" fill="#6b6b6b"/><rect x="3" y="1" width="51" height="121" fill="#545454"/><rect x="54" y="1" width="5" height="121" fill="#707070"/><rect x="4.5" y="2.0" width="8" height="8" fill="#3a3a3a"/><rect x="5.5" y="3.0" width="6" height="6" fill="#a9a9a9"/><rect x="4.5" y="12.4" width="8" height="8" fill="#3a3a3a"/><rect x="5.5" y="13.4" width="6" height="6" fill="#a9a9a9"/><rect x="4.5" y="22.8" width="8" height="8" fill="#3a3a3a"/><rect x="5.5" y="23.8" width="6" height="6" fill="#a9a9a9"/><rect x="4.5" y="33.2" width="8" height="8" fill="#3a3a3a"/><rect x="5.5" y="34.2" width="6" height="6" fill="#a9a9a9"/><rect x="4.5" y="43.6" width="8" height="8" fill="#3a3a3a"/><rect x="5.5" y="44.6" width="6" height="6" fill="#a9a9a9"/><rect x="4.5" y="54.0" width="8" height="8" fill="#3a3a3a"/><rect x="5.5" y="55.0" width="6" height="6" fill="#a9a9a9"/><rect x="4.5" y="64.4" width="8" height="8" fill="#3a3a3a"/><rect x="5.5" y="65.4" width="6" height="6" fill="#a9a9a9"/><rect x="4.5" y="74.8" width="8" height="8" fill="#3a3a3a"/><rect x="5.5" y="75.8" width="6" height="6" fill="#a9a9a9"/><rect x="4.5" y="85.2" width="8" height="8" fill="#3a3a3a"/><rect x="5.5" y="86.2" width="6" height="6" fill="#a9a9a9"/><rect x="4.5" y="95.6" width="8" height="8" fill="#3a3a3a"/><rect x="5.5" y="96.6" width="6" height="6" fill="#a9a9a9"/><rect x="14.5" y="2.0" width="8" height="8" fill="#3a3a3a"/><rect x="15.5" y="3.0" width="6" height="6" fill="#a9a9a9"/><rect x="14.5" y="12.4" width="8" height="8" fill="#3a3a3a"/><rect x="15.5" y="13.4" width="6" height="6" fill="#a9a9a9"/><rect x="14.5" y="22.8" width="8" height="8" fill="#3a3a3a"/><rect x="15.5" y="23.8" width="6" height="6" fill="#a9a9a9"/><rect x="14.5" y="33.2" width="8" height="8" fill="#3a3a3a"/><rect x="15.5" y="34.2" width="6" height="6" fill="#a9a9a9"/><rect x="14.5" y="43.6" width="8" height="8" fill="#3a3a3a"/><rect x="15.5" y="44.6" width="6" height="6" fill="#a9a9a9"/><rect x="14.5" y="54.0" width="8" height="8" fill="#3a3a3a"/><rect x="15.5" y="55.0" width="6" height="6" fill="#a9a9a9"/><rect x="14.5" y="64.4" width="8" height="8" fill="#3a3a3a"/><rect x="15.5" y="65.4" width="6" height="6" fill="#a9a9a9"/><rect x="14.5" y="74.8" width="8" height="8" fill="#3a3a3a"/><rect x="15.5" y="75.8" width="6" height="6" fill="#a9a9a9"/><rect x="14.5" y="85.2" width="8" height="8" fill="#3a3a3a"/><rect x="15.5" y="86.2" width="6" height="6" fill="#a9a9a9"/><rect x="14.5" y="95.6" width="8" height="8" fill="#3a3a3a"/><rect x="15.5" y="96.6" width="6" height="6" fill="#a9a9a9"/><rect x="34.5" y="2.5" width="18" height="104" fill="none" stroke="#c8c8c8" stroke-width="0.8"/><path d="M34.5 12.9 H52.5" stroke="#c8c8c8" stroke-width="0.7"/><path d="M34.5 23.3 H52.5" stroke="#c8c8c8" stroke-width="0.7"/><path d="M34.5 33.7 H52.5" stroke="#c8c8c8" stroke-width="0.7"/><path d="M34.5 44.1 H52.5" stroke="#c8c8c8" stroke-width="0.7"/><path d="M34.5 54.5 H52.5" stroke="#c8c8c8" stroke-width="0.7"/><path d="M34.5 64.9 H52.5" stroke="#c8c8c8" stroke-width="0.7"/><path d="M34.5 75.3 H52.5" stroke="#c8c8c8" stroke-width="0.7"/><path d="M34.5 85.7 H52.5" stroke="#c8c8c8" stroke-width="0.7"/><path d="M34.5 96.1 H52.5" stroke="#c8c8c8" stroke-width="0.7"/><text x="43.5" y="13.9" text-anchor="middle" font-size="12" font-weight="bold" fill="#f4f4f4" font-family="Liberation Sans">*</text><text x="43.5" y="22.1" text-anchor="middle" font-size="11.5" fill="#e0e0e0" font-family="Liberation Serif" letter-spacing="-0.9">c</text><text x="43.5" y="32.5" text-anchor="middle" font-size="11.5" fill="#e0e0e0" font-family="Liberation Serif" letter-spacing="-0.9">01</text><text x="43.5" y="42.9" text-anchor="middle" font-size="11.5" fill="#e0e0e0" font-family="Liberation Serif" letter-spacing="-0.9">02</text><text x="43.5" y="53.3" text-anchor="middle" font-size="11.5" fill="#e0e0e0" font-family="Liberation Serif" letter-spacing="-0.9">03</text><text x="43.5" y="63.7" text-anchor="middle" font-size="11.5" fill="#e0e0e0" font-family="Liberation Serif" letter-spacing="-0.9">04</text><text x="43.5" y="74.1" text-anchor="middle" font-size="11.5" fill="#e0e0e0" font-family="Liberation Serif" letter-spacing="-0.9">05</text><text x="43.5" y="84.5" text-anchor="middle" font-size="11.5" fill="#e0e0e0" font-family="Liberation Serif" letter-spacing="-0.9">06</text><text x="43.5" y="94.9" text-anchor="middle" font-size="11.5" fill="#e0e0e0" font-family="Liberation Serif" letter-spacing="-0.9">07</text><text x="43.5" y="105.3" text-anchor="middle" font-size="11.5" fill="#e0e0e0" font-family="Liberation Serif" letter-spacing="-0.9">08</text><path d="M0 106.5 H60" stroke="#3c3c3c" stroke-width="1"/><rect x="3" y="107" width="51" height="14" fill="#4a4a4a"/><text x="30.0" y="120" text-anchor="middle" font-size="15" fill="#f2f2f2" font-family="Liberation Sans" letter-spacing="0.3">235A</text></svg><div class="t s" style="left:1225px;top:343px;width:60px;text-align:center;font-size:18px;line-height:20px;height:20px;-webkit-text-stroke:0.35px #000;letter-spacing:0.5px">7</div>
<svg style="left:1225px;top:368px" width="60" height="123" fill="none" stroke-linejoin="round" stroke-linecap="round" ><rect x="0" y="0" width="60" height="123" fill="#6e6e6e"/><rect x="3" y="3" width="54" height="117" rx="3" fill="#525252" stroke="#444" stroke-width="1"/><rect x="3.5" y="17.5" width="10" height="35" rx="1.5" fill="#505050" stroke="#444" stroke-width="1"/><rect x="6" y="20" width="5" height="8" fill="#777"/><rect x="6" y="31" width="5" height="8" fill="#777"/><rect x="6" y="42" width="5" height="8" fill="#777"/></svg><div class="t" style="left:1225px;top:474px;width:60px;text-align:center;font-size:14.5px;line-height:18px;height:18px;color:#fff;font-family:Liberation Sans,sans-serif">空槽位</div><div class="t s" style="left:1225px;top:495px;width:60px;text-align:center;font-size:18px;line-height:20px;height:20px;-webkit-text-stroke:0.35px #000;letter-spacing:0.5px">7</div>
<svg style="left:1291px;top:216px" width="60" height="123" fill="none" stroke-linejoin="round" stroke-linecap="round" ><rect x="0" y="0" width="60" height="123" rx="3" fill="#6b6b6b"/><rect x="3" y="1" width="51" height="121" fill="#545454"/><rect x="54" y="1" width="5" height="121" fill="#707070"/><rect x="4.5" y="2.0" width="8" height="8" fill="#3a3a3a"/><rect x="5.5" y="3.0" width="6" height="6" fill="#a9a9a9"/><rect x="4.5" y="12.4" width="8" height="8" fill="#3a3a3a"/><rect x="5.5" y="13.4" width="6" height="6" fill="#a9a9a9"/><rect x="4.5" y="22.8" width="8" height="8" fill="#3a3a3a"/><rect x="5.5" y="23.8" width="6" height="6" fill="#a9a9a9"/><rect x="4.5" y="33.2" width="8" height="8" fill="#3a3a3a"/><rect x="5.5" y="34.2" width="6" height="6" fill="#a9a9a9"/><rect x="4.5" y="43.6" width="8" height="8" fill="#3a3a3a"/><rect x="5.5" y="44.6" width="6" height="6" fill="#a9a9a9"/><rect x="4.5" y="54.0" width="8" height="8" fill="#3a3a3a"/><rect x="5.5" y="55.0" width="6" height="6" fill="#a9a9a9"/><rect x="4.5" y="64.4" width="8" height="8" fill="#3a3a3a"/><rect x="5.5" y="65.4" width="6" height="6" fill="#a9a9a9"/><rect x="4.5" y="74.8" width="8" height="8" fill="#3a3a3a"/><rect x="5.5" y="75.8" width="6" height="6" fill="#a9a9a9"/><rect x="4.5" y="85.2" width="8" height="8" fill="#3a3a3a"/><rect x="5.5" y="86.2" width="6" height="6" fill="#a9a9a9"/><rect x="4.5" y="95.6" width="8" height="8" fill="#3a3a3a"/><rect x="5.5" y="96.6" width="6" height="6" fill="#a9a9a9"/><rect x="14.5" y="2.0" width="8" height="8" fill="#3a3a3a"/><rect x="15.5" y="3.0" width="6" height="6" fill="#a9a9a9"/><rect x="14.5" y="12.4" width="8" height="8" fill="#3a3a3a"/><rect x="15.5" y="13.4" width="6" height="6" fill="#a9a9a9"/><rect x="14.5" y="22.8" width="8" height="8" fill="#3a3a3a"/><rect x="15.5" y="23.8" width="6" height="6" fill="#a9a9a9"/><rect x="14.5" y="33.2" width="8" height="8" fill="#3a3a3a"/><rect x="15.5" y="34.2" width="6" height="6" fill="#a9a9a9"/><rect x="14.5" y="43.6" width="8" height="8" fill="#3a3a3a"/><rect x="15.5" y="44.6" width="6" height="6" fill="#a9a9a9"/><rect x="14.5" y="54.0" width="8" height="8" fill="#3a3a3a"/><rect x="15.5" y="55.0" width="6" height="6" fill="#a9a9a9"/><rect x="14.5" y="64.4" width="8" height="8" fill="#3a3a3a"/><rect x="15.5" y="65.4" width="6" height="6" fill="#a9a9a9"/><rect x="14.5" y="74.8" width="8" height="8" fill="#3a3a3a"/><rect x="15.5" y="75.8" width="6" height="6" fill="#a9a9a9"/><rect x="14.5" y="85.2" width="8" height="8" fill="#3a3a3a"/><rect x="15.5" y="86.2" width="6" height="6" fill="#a9a9a9"/><rect x="14.5" y="95.6" width="8" height="8" fill="#3a3a3a"/><rect x="15.5" y="96.6" width="6" height="6" fill="#a9a9a9"/><rect x="27.5" y="2.5" width="29" height="104" fill="none" stroke="#c8c8c8" stroke-width="0.8"/><path d="M41.5 2.5 V106.5" stroke="#c8c8c8" stroke-width="0.8"/><path d="M27.5 12.9 H56.5" stroke="#c8c8c8" stroke-width="0.7"/><path d="M27.5 23.3 H56.5" stroke="#c8c8c8" stroke-width="0.7"/><path d="M27.5 33.7 H56.5" stroke="#c8c8c8" stroke-width="0.7"/><path d="M27.5 44.1 H56.5" stroke="#c8c8c8" stroke-width="0.7"/><path d="M27.5 54.5 H56.5" stroke="#c8c8c8" stroke-width="0.7"/><path d="M27.5 64.9 H56.5" stroke="#c8c8c8" stroke-width="0.7"/><path d="M27.5 75.3 H56.5" stroke="#c8c8c8" stroke-width="0.7"/><path d="M27.5 85.7 H56.5" stroke="#c8c8c8" stroke-width="0.7"/><path d="M27.5 96.1 H56.5" stroke="#c8c8c8" stroke-width="0.7"/><text x="34.7" y="13.9" text-anchor="middle" font-size="12" font-weight="bold" fill="#f4f4f4" font-family="Liberation Sans">*</text><text x="49" y="11.7" text-anchor="middle" font-size="11.5" fill="#e0e0e0" font-family="Liberation Serif" letter-spacing="-0.9"></text><text x="34.7" y="22.1" text-anchor="middle" font-size="11.5" fill="#e0e0e0" font-family="Liberation Serif" letter-spacing="-0.9">c</text><text x="49" y="22.1" text-anchor="middle" font-size="11.5" fill="#e0e0e0" font-family="Liberation Serif" letter-spacing="-0.9"></text><text x="34.7" y="32.5" text-anchor="middle" font-size="11.5" fill="#e0e0e0" font-family="Liberation Serif" letter-spacing="-0.9">01</text><text x="49" y="32.5" text-anchor="middle" font-size="11.5" fill="#e0e0e0" font-family="Liberation Serif" letter-spacing="-0.9">09</text><text x="34.7" y="42.9" text-anchor="middle" font-size="11.5" fill="#e0e0e0" font-family="Liberation Serif" letter-spacing="-0.9">02</text><text x="49" y="42.9" text-anchor="middle" font-size="11.5" fill="#e0e0e0" font-family="Liberation Serif" letter-spacing="-0.9">10</text><text x="34.7" y="53.3" text-anchor="middle" font-size="11.5" fill="#e0e0e0" font-family="Liberation Serif" letter-spacing="-0.9">03</text><text x="49" y="53.3" text-anchor="middle" font-size="11.5" fill="#e0e0e0" font-family="Liberation Serif" letter-spacing="-0.9">11</text><text x="34.7" y="63.7" text-anchor="middle" font-size="11.5" fill="#e0e0e0" font-family="Liberation Serif" letter-spacing="-0.9">04</text><text x="49" y="63.7" text-anchor="middle" font-size="11.5" fill="#e0e0e0" font-family="Liberation Serif" letter-spacing="-0.9">12</text><text x="34.7" y="74.1" text-anchor="middle" font-size="11.5" fill="#e0e0e0" font-family="Liberation Serif" letter-spacing="-0.9">05</text><text x="49" y="74.1" text-anchor="middle" font-size="11.5" fill="#e0e0e0" font-family="Liberation Serif" letter-spacing="-0.9">13</text><text x="34.7" y="84.5" text-anchor="middle" font-size="11.5" fill="#e0e0e0" font-family="Liberation Serif" letter-spacing="-0.9">06</text><text x="49" y="84.5" text-anchor="middle" font-size="11.5" fill="#e0e0e0" font-family="Liberation Serif" letter-spacing="-0.9">14</text><text x="34.7" y="94.9" text-anchor="middle" font-size="11.5" fill="#e0e0e0" font-family="Liberation Serif" letter-spacing="-0.9">07</text><text x="49" y="94.9" text-anchor="middle" font-size="11.5" fill="#e0e0e0" font-family="Liberation Serif" letter-spacing="-0.9">15</text><text x="34.7" y="105.3" text-anchor="middle" font-size="11.5" fill="#e0e0e0" font-family="Liberation Serif" letter-spacing="-0.9">08</text><text x="49" y="105.3" text-anchor="middle" font-size="11.5" fill="#e0e0e0" font-family="Liberation Serif" letter-spacing="-0.9">16</text><path d="M0 106.5 H60" stroke="#3c3c3c" stroke-width="1"/><rect x="3" y="107" width="51" height="14" fill="#4a4a4a"/><text x="30.0" y="120" text-anchor="middle" font-size="15" fill="#f2f2f2" font-family="Liberation Sans" letter-spacing="0.3">235B</text></svg><div class="t s" style="left:1291px;top:343px;width:60px;text-align:center;font-size:18px;line-height:20px;height:20px;-webkit-text-stroke:0.35px #000;letter-spacing:0.5px">8</div>
<svg style="left:1291px;top:368px" width="60" height="123" fill="none" stroke-linejoin="round" stroke-linecap="round" ><rect x="0" y="0" width="60" height="123" fill="#6e6e6e"/><rect x="3" y="3" width="54" height="117" rx="3" fill="#525252" stroke="#444" stroke-width="1"/><rect x="3.5" y="17.5" width="10" height="35" rx="1.5" fill="#505050" stroke="#444" stroke-width="1"/><rect x="6" y="20" width="5" height="8" fill="#777"/><rect x="6" y="31" width="5" height="8" fill="#777"/><rect x="6" y="42" width="5" height="8" fill="#777"/></svg><div class="t" style="left:1291px;top:474px;width:60px;text-align:center;font-size:14.5px;line-height:18px;height:18px;color:#fff;font-family:Liberation Sans,sans-serif">空槽位</div><div class="t s" style="left:1291px;top:495px;width:60px;text-align:center;font-size:18px;line-height:20px;height:20px;-webkit-text-stroke:0.35px #000;letter-spacing:0.5px">8</div>
<svg style="left:1358px;top:216px" width="60" height="123" fill="none" stroke-linejoin="round" stroke-linecap="round" ><rect x="0" y="0" width="60" height="123" rx="3" fill="#6b6b6b"/><rect x="3" y="1" width="51" height="121" fill="#545454"/><rect x="54" y="1" width="5" height="121" fill="#707070"/><rect x="4.5" y="2.0" width="8" height="8" fill="#3a3a3a"/><rect x="5.5" y="3.0" width="6" height="6" fill="#a9a9a9"/><rect x="4.5" y="12.4" width="8" height="8" fill="#3a3a3a"/><rect x="5.5" y="13.4" width="6" height="6" fill="#a9a9a9"/><rect x="4.5" y="22.8" width="8" height="8" fill="#3a3a3a"/><rect x="5.5" y="23.8" width="6" height="6" fill="#a9a9a9"/><rect x="4.5" y="33.2" width="8" height="8" fill="#3a3a3a"/><rect x="5.5" y="34.2" width="6" height="6" fill="#a9a9a9"/><rect x="4.5" y="43.6" width="8" height="8" fill="#3a3a3a"/><rect x="5.5" y="44.6" width="6" height="6" fill="#a9a9a9"/><rect x="4.5" y="54.0" width="8" height="8" fill="#3a3a3a"/><rect x="5.5" y="55.0" width="6" height="6" fill="#a9a9a9"/><rect x="4.5" y="64.4" width="8" height="8" fill="#3a3a3a"/><rect x="5.5" y="65.4" width="6" height="6" fill="#a9a9a9"/><rect x="4.5" y="74.8" width="8" height="8" fill="#3a3a3a"/><rect x="5.5" y="75.8" width="6" height="6" fill="#a9a9a9"/><rect x="4.5" y="85.2" width="8" height="8" fill="#3a3a3a"/><rect x="5.5" y="86.2" width="6" height="6" fill="#a9a9a9"/><rect x="4.5" y="95.6" width="8" height="8" fill="#3a3a3a"/><rect x="5.5" y="96.6" width="6" height="6" fill="#a9a9a9"/><rect x="14.5" y="2.0" width="8" height="8" fill="#3a3a3a"/><rect x="15.5" y="3.0" width="6" height="6" fill="#a9a9a9"/><rect x="14.5" y="12.4" width="8" height="8" fill="#3a3a3a"/><rect x="15.5" y="13.4" width="6" height="6" fill="#a9a9a9"/><rect x="14.5" y="22.8" width="8" height="8" fill="#3a3a3a"/><rect x="15.5" y="23.8" width="6" height="6" fill="#a9a9a9"/><rect x="14.5" y="33.2" width="8" height="8" fill="#3a3a3a"/><rect x="15.5" y="34.2" width="6" height="6" fill="#a9a9a9"/><rect x="14.5" y="43.6" width="8" height="8" fill="#3a3a3a"/><rect x="15.5" y="44.6" width="6" height="6" fill="#a9a9a9"/><rect x="14.5" y="54.0" width="8" height="8" fill="#3a3a3a"/><rect x="15.5" y="55.0" width="6" height="6" fill="#a9a9a9"/><rect x="14.5" y="64.4" width="8" height="8" fill="#3a3a3a"/><rect x="15.5" y="65.4" width="6" height="6" fill="#a9a9a9"/><rect x="14.5" y="74.8" width="8" height="8" fill="#3a3a3a"/><rect x="15.5" y="75.8" width="6" height="6" fill="#a9a9a9"/><rect x="14.5" y="85.2" width="8" height="8" fill="#3a3a3a"/><rect x="15.5" y="86.2" width="6" height="6" fill="#a9a9a9"/><rect x="14.5" y="95.6" width="8" height="8" fill="#3a3a3a"/><rect x="15.5" y="96.6" width="6" height="6" fill="#a9a9a9"/><rect x="34.5" y="2.5" width="18" height="104" fill="none" stroke="#c8c8c8" stroke-width="0.8"/><path d="M34.5 12.9 H52.5" stroke="#c8c8c8" stroke-width="0.7"/><path d="M34.5 23.3 H52.5" stroke="#c8c8c8" stroke-width="0.7"/><path d="M34.5 33.7 H52.5" stroke="#c8c8c8" stroke-width="0.7"/><path d="M34.5 44.1 H52.5" stroke="#c8c8c8" stroke-width="0.7"/><path d="M34.5 54.5 H52.5" stroke="#c8c8c8" stroke-width="0.7"/><path d="M34.5 64.9 H52.5" stroke="#c8c8c8" stroke-width="0.7"/><path d="M34.5 75.3 H52.5" stroke="#c8c8c8" stroke-width="0.7"/><path d="M34.5 85.7 H52.5" stroke="#c8c8c8" stroke-width="0.7"/><path d="M34.5 96.1 H52.5" stroke="#c8c8c8" stroke-width="0.7"/><text x="43.5" y="13.9" text-anchor="middle" font-size="12" font-weight="bold" fill="#f4f4f4" font-family="Liberation Sans">*</text><text x="43.5" y="22.1" text-anchor="middle" font-size="11.5" fill="#e0e0e0" font-family="Liberation Serif" letter-spacing="-0.9">c</text><text x="43.5" y="32.5" text-anchor="middle" font-size="11.5" fill="#e0e0e0" font-family="Liberation Serif" letter-spacing="-0.9">01</text><text x="43.5" y="42.9" text-anchor="middle" font-size="11.5" fill="#e0e0e0" font-family="Liberation Serif" letter-spacing="-0.9">02</text><text x="43.5" y="53.3" text-anchor="middle" font-size="11.5" fill="#e0e0e0" font-family="Liberation Serif" letter-spacing="-0.9">03</text><text x="43.5" y="63.7" text-anchor="middle" font-size="11.5" fill="#e0e0e0" font-family="Liberation Serif" letter-spacing="-0.9">04</text><text x="43.5" y="74.1" text-anchor="middle" font-size="11.5" fill="#e0e0e0" font-family="Liberation Serif" letter-spacing="-0.9">05</text><text x="43.5" y="84.5" text-anchor="middle" font-size="11.5" fill="#e0e0e0" font-family="Liberation Serif" letter-spacing="-0.9">06</text><text x="43.5" y="94.9" text-anchor="middle" font-size="11.5" fill="#e0e0e0" font-family="Liberation Serif" letter-spacing="-0.9"></text><text x="43.5" y="105.3" text-anchor="middle" font-size="11.5" fill="#e0e0e0" font-family="Liberation Serif" letter-spacing="-0.9"></text><path d="M0 106.5 H60" stroke="#3c3c3c" stroke-width="1"/><rect x="3" y="107" width="51" height="14" fill="#4a4a4a"/><text x="30.0" y="120" text-anchor="middle" font-size="15" fill="#f2f2f2" font-family="Liberation Sans" letter-spacing="0.3">236A</text></svg><div class="t s" style="left:1358px;top:343px;width:60px;text-align:center;font-size:18px;line-height:20px;height:20px;-webkit-text-stroke:0.35px #000;letter-spacing:0.5px">9</div>
<svg style="left:1358px;top:368px" width="60" height="123" fill="none" stroke-linejoin="round" stroke-linecap="round" ><rect x="0" y="0" width="60" height="123" fill="#6e6e6e"/><rect x="3" y="3" width="54" height="117" rx="3" fill="#525252" stroke="#444" stroke-width="1"/><rect x="3.5" y="17.5" width="10" height="35" rx="1.5" fill="#505050" stroke="#444" stroke-width="1"/><rect x="6" y="20" width="5" height="8" fill="#777"/><rect x="6" y="31" width="5" height="8" fill="#777"/><rect x="6" y="42" width="5" height="8" fill="#777"/></svg><div class="t" style="left:1358px;top:474px;width:60px;text-align:center;font-size:14.5px;line-height:18px;height:18px;color:#fff;font-family:Liberation Sans,sans-serif">空槽位</div><div class="t s" style="left:1358px;top:495px;width:60px;text-align:center;font-size:18px;line-height:20px;height:20px;-webkit-text-stroke:0.35px #000;letter-spacing:0.5px">9</div>
<svg style="left:1424px;top:216px" width="60" height="123" fill="none" stroke-linejoin="round" stroke-linecap="round" ><rect x="0" y="0" width="60" height="123" rx="3" fill="#6b6b6b"/><rect x="3" y="1" width="51" height="121" fill="#545454"/><rect x="54" y="1" width="5" height="121" fill="#707070"/><rect x="4.5" y="2.0" width="8" height="8" fill="#3a3a3a"/><rect x="5.5" y="3.0" width="6" height="6" fill="#a9a9a9"/><rect x="4.5" y="12.4" width="8" height="8" fill="#3a3a3a"/><rect x="5.5" y="13.4" width="6" height="6" fill="#a9a9a9"/><rect x="4.5" y="22.8" width="8" height="8" fill="#3a3a3a"/><rect x="5.5" y="23.8" width="6" height="6" fill="#a9a9a9"/><rect x="4.5" y="33.2" width="8" height="8" fill="#3a3a3a"/><rect x="5.5" y="34.2" width="6" height="6" fill="#a9a9a9"/><rect x="4.5" y="43.6" width="8" height="8" fill="#3a3a3a"/><rect x="5.5" y="44.6" width="6" height="6" fill="#a9a9a9"/><rect x="4.5" y="54.0" width="8" height="8" fill="#3a3a3a"/><rect x="5.5" y="55.0" width="6" height="6" fill="#a9a9a9"/><rect x="4.5" y="64.4" width="8" height="8" fill="#3a3a3a"/><rect x="5.5" y="65.4" width="6" height="6" fill="#a9a9a9"/><rect x="4.5" y="74.8" width="8" height="8" fill="#3a3a3a"/><rect x="5.5" y="75.8" width="6" height="6" fill="#a9a9a9"/><rect x="4.5" y="85.2" width="8" height="8" fill="#3a3a3a"/><rect x="5.5" y="86.2" width="6" height="6" fill="#a9a9a9"/><rect x="4.5" y="95.6" width="8" height="8" fill="#3a3a3a"/><rect x="5.5" y="96.6" width="6" height="6" fill="#a9a9a9"/><rect x="14.5" y="2.0" width="8" height="8" fill="#3a3a3a"/><rect x="15.5" y="3.0" width="6" height="6" fill="#a9a9a9"/><rect x="14.5" y="12.4" width="8" height="8" fill="#3a3a3a"/><rect x="15.5" y="13.4" width="6" height="6" fill="#a9a9a9"/><rect x="14.5" y="22.8" width="8" height="8" fill="#3a3a3a"/><rect x="15.5" y="23.8" width="6" height="6" fill="#a9a9a9"/><rect x="14.5" y="33.2" width="8" height="8" fill="#3a3a3a"/><rect x="15.5" y="34.2" width="6" height="6" fill="#a9a9a9"/><rect x="14.5" y="43.6" width="8" height="8" fill="#3a3a3a"/><rect x="15.5" y="44.6" width="6" height="6" fill="#a9a9a9"/><rect x="14.5" y="54.0" width="8" height="8" fill="#3a3a3a"/><rect x="15.5" y="55.0" width="6" height="6" fill="#a9a9a9"/><rect x="14.5" y="64.4" width="8" height="8" fill="#3a3a3a"/><rect x="15.5" y="65.4" width="6" height="6" fill="#a9a9a9"/><rect x="14.5" y="74.8" width="8" height="8" fill="#3a3a3a"/><rect x="15.5" y="75.8" width="6" height="6" fill="#a9a9a9"/><rect x="14.5" y="85.2" width="8" height="8" fill="#3a3a3a"/><rect x="15.5" y="86.2" width="6" height="6" fill="#a9a9a9"/><rect x="14.5" y="95.6" width="8" height="8" fill="#3a3a3a"/><rect x="15.5" y="96.6" width="6" height="6" fill="#a9a9a9"/><rect x="34.5" y="2.5" width="18" height="104" fill="none" stroke="#c8c8c8" stroke-width="0.8"/><path d="M34.5 12.9 H52.5" stroke="#c8c8c8" stroke-width="0.7"/><path d="M34.5 23.3 H52.5" stroke="#c8c8c8" stroke-width="0.7"/><path d="M34.5 33.7 H52.5" stroke="#c8c8c8" stroke-width="0.7"/><path d="M34.5 44.1 H52.5" stroke="#c8c8c8" stroke-width="0.7"/><path d="M34.5 54.5 H52.5" stroke="#c8c8c8" stroke-width="0.7"/><path d="M34.5 64.9 H52.5" stroke="#c8c8c8" stroke-width="0.7"/><path d="M34.5 75.3 H52.5" stroke="#c8c8c8" stroke-width="0.7"/><path d="M34.5 85.7 H52.5" stroke="#c8c8c8" stroke-width="0.7"/><path d="M34.5 96.1 H52.5" stroke="#c8c8c8" stroke-width="0.7"/><text x="43.5" y="13.9" text-anchor="middle" font-size="12" font-weight="bold" fill="#f4f4f4" font-family="Liberation Sans">*</text><text x="43.5" y="22.1" text-anchor="middle" font-size="11.5" fill="#e0e0e0" font-family="Liberation Serif" letter-spacing="-0.9">c</text><text x="43.5" y="32.5" text-anchor="middle" font-size="11.5" fill="#e0e0e0" font-family="Liberation Serif" letter-spacing="-0.9">01</text><text x="43.5" y="42.9" text-anchor="middle" font-size="11.5" fill="#e0e0e0" font-family="Liberation Serif" letter-spacing="-0.9">02</text><text x="43.5" y="53.3" text-anchor="middle" font-size="11.5" fill="#e0e0e0" font-family="Liberation Serif" letter-spacing="-0.9">03</text><text x="43.5" y="63.7" text-anchor="middle" font-size="11.5" fill="#e0e0e0" font-family="Liberation Serif" letter-spacing="-0.9">04</text><text x="43.5" y="74.1" text-anchor="middle" font-size="11.5" fill="#e0e0e0" font-family="Liberation Serif" letter-spacing="-0.9">05</text><text x="43.5" y="84.5" text-anchor="middle" font-size="11.5" fill="#e0e0e0" font-family="Liberation Serif" letter-spacing="-0.9">06</text><text x="43.5" y="94.9" text-anchor="middle" font-size="11.5" fill="#e0e0e0" font-family="Liberation Serif" letter-spacing="-0.9">07</text><text x="43.5" y="105.3" text-anchor="middle" font-size="11.5" fill="#e0e0e0" font-family="Liberation Serif" letter-spacing="-0.9">08</text><path d="M0 106.5 H60" stroke="#3c3c3c" stroke-width="1"/><rect x="3" y="107" width="51" height="14" fill="#4a4a4a"/><text x="30.0" y="120" text-anchor="middle" font-size="15" fill="#f2f2f2" font-family="Liberation Sans" letter-spacing="0.3">236C</text></svg><div class="t s" style="left:1424px;top:343px;width:60px;text-align:center;font-size:18px;line-height:20px;height:20px;-webkit-text-stroke:0.35px #000;letter-spacing:0.5px">10</div>
<svg style="left:1424px;top:368px" width="60" height="123" fill="none" stroke-linejoin="round" stroke-linecap="round" ><rect x="0" y="0" width="60" height="123" fill="#6e6e6e"/><rect x="3" y="3" width="54" height="117" rx="3" fill="#525252" stroke="#444" stroke-width="1"/><rect x="3.5" y="17.5" width="10" height="35" rx="1.5" fill="#505050" stroke="#444" stroke-width="1"/><rect x="6" y="20" width="5" height="8" fill="#777"/><rect x="6" y="31" width="5" height="8" fill="#777"/><rect x="6" y="42" width="5" height="8" fill="#777"/></svg><div class="t" style="left:1424px;top:474px;width:60px;text-align:center;font-size:14.5px;line-height:18px;height:18px;color:#fff;font-family:Liberation Sans,sans-serif">空槽位</div><div class="t s" style="left:1424px;top:495px;width:60px;text-align:center;font-size:18px;line-height:20px;height:20px;-webkit-text-stroke:0.35px #000;letter-spacing:0.5px">10</div>
<svg style="left:724px;top:442px" width="14" height="20" fill="none" stroke-linejoin="round" stroke-linecap="round" ><path d="M0.5 0.5 L0.5 16 L4 12.5 L7 19 L9.5 18 L6.5 11.5 L11.5 11.5 Z" fill="#b8e000" stroke="#000" stroke-width="1"/></svg>
<div style="position:absolute;left:503px;top:573px;width:1178px;height:17px;background:#f0f0f0"></div>
<div style="position:absolute;left:520px;top:574px;width:929px;height:15px;background:#cdcdcd"></div>
<svg style="left:507px;top:577px" width="8" height="10" fill="none" stroke-linejoin="round" stroke-linecap="round" ><path d="M6 1 L2 5 L6 9" stroke="#606060" stroke-width="1.6"/></svg>
<svg style="left:1668px;top:577px" width="8" height="10" fill="none" stroke-linejoin="round" stroke-linecap="round" ><path d="M2 1 L6 5 L2 9" stroke="#606060" stroke-width="1.6"/></svg>
<div style="position:absolute;left:502px;top:596px;width:1180px;height:232px;background:#fff;border:1px solid #828790"></div>
<div style="position:absolute;left:503px;top:597px;width:1041px;height:22px;background:#fff;border-bottom:1px solid #d0d0d0;border-right:1px solid #d0d0d0"></div>
<div class="t" style="left:1554px;top:601px;font-family:Liberation Sans,sans-serif;font-size:13px">属性</div>
<svg style="left:1582px;top:600px" width="17" height="17" fill="none" stroke-linejoin="round" stroke-linecap="round" ><circle cx="8.5" cy="8.5" r="7.5" stroke="#1c8ccc" stroke-width="1.2"/><path d="M8.5 7 V13" stroke="#1c8ccc" stroke-width="1.4"/><circle cx="8.5" cy="4.8" r="0.9" fill="#1c8ccc"/></svg>
<div style="position:absolute;left:1612px;top:598px;width:65px;height:22px;background:#f0f0f0;border:1px solid #d0d0d0;border-bottom:none"></div>
<div class="t" style="left:1622px;top:602px;font-family:Liberation Sans,sans-serif;font-size:13px">诊断</div>
<svg style="left:1650px;top:599px" width="20" height="18" fill="none" stroke-linejoin="round" stroke-linecap="round" ><path d="M2 1 V7 Q2 13 7 13 Q12 13 12 7 V1" stroke="#1c8ccc" stroke-width="1.3"/><path d="M7 13 Q7 17 11 17 Q15 17 15 13 V11" stroke="#1c8ccc" stroke-width="1.3"/><circle cx="15" cy="9.5" r="1.8" stroke="#1c8ccc" stroke-width="1.1"/></svg>
<div style="position:absolute;left:1676px;top:619px;width:1px;height:36px;background:#d8d8d8"></div>
<div style="position:absolute;left:503px;top:619px;width:1174px;height:1px;background:#e8e8e8"></div>
<div style="position:absolute;left:505px;top:621px;width:117px;height:204px;background:#fff;border:1px solid #828790"></div>
<div style="position:absolute;left:506px;top:622px;width:115px;height:17px;background:#d9d9d9"></div>
<div class="t" style="left:509px;top:623px;">基础配置</div>
<div class="t" style="left:509px;top:640px;">Modbus RTU</div>
<div class="t" style="left:509px;top:657px;">Modbus TCP1</div>
<div class="t" style="left:509px;top:674px;">Modbus TCP2</div>
<div class="t" style="left:509px;top:691px;">CAN自由口</div>
<div class="t" style="left:509px;top:708px;">OPC UA</div>
<div style="position:absolute;left:622px;top:621px;width:6px;height:204px;background:#f0f0f0"></div>
<div class="t" style="left:638px;top:629px;">本地机架控制器槽位&nbsp;&nbsp;&nbsp; SC950A:中大型PLC控制器</div>
<div style="position:absolute;left:628px;top:655px;width:1050px;height:170px;background:#fff;border:1px solid #828790;border-left:none"></div>
<div style="position:absolute;left:628px;top:655px;width:351px;height:25px;background:#f0f0f0;border:1px solid #6f6f6f"></div>
<div style="position:absolute;left:828px;top:656px;width:1px;height:23px;background:#6f6f6f"></div>
<div class="t" style="left:704px;top:660px;">参数名称</div>
<div class="t" style="left:885px;top:660px;">参数值</div>
<div style="position:absolute;left:628px;top:680px;width:201px;height:23px;background:#f0f0f0;border-right:1px solid #d0d0d0;border-bottom:1px solid #d0d0d0;border-left:1px solid #d0d0d0"></div>
<div style="position:absolute;left:829px;top:680px;width:149px;height:23px;background:#fff;border-right:1px solid #d0d0d0;border-bottom:1px solid #d0d0d0"></div>
<div class="t" style="left:632px;top:684px;">控制器描述</div>
<div class="t" style="left:832px;top:684px;">lky</div>
<div style="position:absolute;left:628px;top:703px;width:201px;height:23px;background:#f0f0f0;border-right:1px solid #d0d0d0;border-bottom:1px solid #d0d0d0;border-left:1px solid #d0d0d0"></div>
<div style="position:absolute;left:829px;top:703px;width:149px;height:23px;background:#fff;border-right:1px solid #d0d0d0;border-bottom:1px solid #d0d0d0"></div>
<div class="t" style="left:632px;top:707px;">控制器模式</div>
<div class="t" style="left:832px;top:707px;">冗余</div>
<div style="position:absolute;left:628px;top:726px;width:201px;height:23px;background:#f0f0f0;border-right:1px solid #d0d0d0;border-bottom:1px solid #d0d0d0;border-left:1px solid #d0d0d0"></div>
<div style="position:absolute;left:829px;top:726px;width:149px;height:23px;background:#fff;border-right:1px solid #d0d0d0;border-bottom:1px solid #d0d0d0"></div>
<div class="t" style="left:632px;top:730px;">ENET冗余</div>
<div class="t" style="left:832px;top:730px;">使能</div>
<div style="position:absolute;left:628px;top:749px;width:201px;height:23px;background:#f0f0f0;border-right:1px solid #d0d0d0;border-bottom:1px solid #d0d0d0;border-left:1px solid #d0d0d0"></div>
<div style="position:absolute;left:829px;top:749px;width:149px;height:23px;background:#f0f0f0;border-right:1px solid #d0d0d0;border-bottom:1px solid #d0d0d0"></div>
<div class="t" style="left:632px;top:753px;">本地EBUS冗余</div>
<div class="t" style="left:832px;top:753px;">使能</div>
<div style="position:absolute;left:628px;top:772px;width:201px;height:23px;background:#f0f0f0;border-right:1px solid #d0d0d0;border-bottom:1px solid #d0d0d0;border-left:1px solid #d0d0d0"></div>
<div style="position:absolute;left:829px;top:772px;width:149px;height:23px;background:#f0f0f0;border-right:1px solid #d0d0d0;border-bottom:1px solid #d0d0d0"></div>
<div class="t" style="left:632px;top:776px;">本地EBUS速率</div>
<div class="t" style="left:832px;top:776px;">5M</div>
<div style="position:absolute;left:628px;top:795px;width:201px;height:23px;background:#f0f0f0;border-right:1px solid #d0d0d0;border-bottom:1px solid #d0d0d0;border-left:1px solid #d0d0d0"></div>
<div style="position:absolute;left:829px;top:795px;width:149px;height:23px;background:#f0f0f0;border-right:1px solid #d0d0d0;border-bottom:1px solid #d0d0d0"></div>
<div class="t" style="left:632px;top:799px;">远程EBUS冗余</div>
<div class="t" style="left:832px;top:799px;">使能</div>
<div style="position:absolute;left:628px;top:818px;width:351px;height:6px;background:#fff;border-left:1px solid #d0d0d0;border-right:1px solid #d0d0d0"></div>
<div style="position:absolute;left:1659px;top:656px;width:17px;height:168px;background:#f0f0f0"></div>
<svg style="left:1663px;top:661px" width="10" height="7" fill="none" stroke-linejoin="round" stroke-linecap="round" ><path d="M1 6 L5 2 L9 6" stroke="#606060" stroke-width="1.6"/></svg>
<svg style="left:1663px;top:811px" width="10" height="7" fill="none" stroke-linejoin="round" stroke-linecap="round" ><path d="M1 1 L5 5 L9 1" stroke="#606060" stroke-width="1.6"/></svg>
<div style="position:absolute;left:1660px;top:673px;width:15px;height:71px;background:#cdcdcd"></div>
<div style="position:absolute;left:1687px;top:122px;width:229px;height:25px;background:#dadada;border:1px solid #c0c0c0"></div>
<div class="t" style="left:1693px;top:127px;">设备库</div>
<div style="position:absolute;left:1687px;top:148px;width:154px;height:21px;background:#fff;border:1px solid #828790"></div>
<div style="position:absolute;left:1842px;top:148px;width:73px;height:21px;background:#e1e1e1;border:1px solid #adadad"></div>
<div class="t" style="left:1866px;top:150px;">清除</div>
<div style="position:absolute;left:1687px;top:170px;width:229px;height:659px;background:#fff;border:1px solid #828790"></div>
<div style="position:absolute;left:1688px;top:171px;width:227px;height:24px;background:#f3f3f3;border-bottom:1px solid #828790"></div>
<div style="position:absolute;left:1795px;top:171px;width:1px;height:24px;background:#bdbdbd"></div>
<div style="position:absolute;left:1913px;top:171px;width:2px;height:24px;background:#9a9a9a"></div>
<div class="t" style="left:1688px;top:175px;">名称</div>
<div class="t" style="left:1796px;top:175px;">描述</div>
<div style="position:absolute;left:1728px;top:215px;width:187px;height:20px;background:#d9d9d9"></div>
<svg style="left:1693px;top:202px" width="10" height="8" fill="none" stroke-linejoin="round" stroke-linecap="round" ><path d="M0.8 1.5 L4.8 5.5 L8.8 1.5" stroke="#404040" stroke-width="1.7" stroke-linecap="butt" stroke-linejoin="miter"/></svg>
<svg style="left:1711px;top:198px" width="17" height="16" fill="none" stroke-linejoin="round" stroke-linecap="round" ><path d="M0.5 2.5 Q0.5 1 2 1 H7 L8.5 2.5 H15 Q16.5 2.5 16.5 4 V14 Q16.5 15.5 15 15.5 H2 Q0.5 15.5 0.5 14 Z" fill="#4fb2e6" stroke="none"/><path d="M1.5 4.3 H15.5" stroke="#fff" stroke-width="0.8"/></svg>
<div class="t" style="left:1733px;top:198px;">通用模件</div>
<svg style="left:1733px;top:217px" width="13" height="16" fill="none" stroke-linejoin="round" stroke-linecap="round" ><rect x="0.7" y="0.7" width="11" height="14.8" rx="0.6" stroke="#1c8ccc" stroke-width="1.3"/><path d="M0.7 10.8 H11.7" stroke="#1c8ccc" stroke-width="1.2"/><path d="M2.5 2.8 H5 M2.5 5 H5 M2.5 7.2 H5 M7 2.8 H10 M7 5 H10 M7 7.2 H10" stroke="#6ab4e4" stroke-width="1"/><path d="M6 1.5 V10" stroke="#1c8ccc" stroke-width="1"/></svg>
<div class="t" style="left:1752px;top:218px;">SC231A</div>
<div class="t" style="left:1800px;top:218px;">8通道电流模拟量…</div>
<svg style="left:1733px;top:237px" width="13" height="16" fill="none" stroke-linejoin="round" stroke-linecap="round" ><rect x="0.7" y="0.7" width="11" height="14.8" rx="0.6" stroke="#1c8ccc" stroke-width="1.3"/><path d="M0.7 10.8 H11.7" stroke="#1c8ccc" stroke-width="1.2"/><path d="M2.5 2.8 H5 M2.5 5 H5 M2.5 7.2 H5 M7 2.8 H10 M7 5 H10 M7 7.2 H10" stroke="#6ab4e4" stroke-width="1"/><path d="M6 1.5 V10" stroke="#1c8ccc" stroke-width="1"/></svg>
<div class="t" style="left:1752px;top:238px;">SC231E</div>
<div class="t" style="left:1800px;top:238px;">8通道电压电流模…</div>
<svg style="left:1733px;top:257px" width="13" height="16" fill="none" stroke-linejoin="round" stroke-linecap="round" ><rect x="0.7" y="0.7" width="11" height="14.8" rx="0.6" stroke="#1c8ccc" stroke-width="1.3"/><path d="M0.7 10.8 H11.7" stroke="#1c8ccc" stroke-width="1.2"/><path d="M2.5 2.8 H5 M2.5 5 H5 M2.5 7.2 H5 M7 2.8 H10 M7 5 H10 M7 7.2 H10" stroke="#6ab4e4" stroke-width="1"/><path d="M6 1.5 V10" stroke="#1c8ccc" stroke-width="1"/></svg>
<div class="t" style="left:1752px;top:258px;">SC232A</div>
<div class="t" style="left:1800px;top:258px;">8通道热电阻输入…</div>
<svg style="left:1733px;top:277px" width="13" height="16" fill="none" stroke-linejoin="round" stroke-linecap="round" ><rect x="0.7" y="0.7" width="11" height="14.8" rx="0.6" stroke="#1c8ccc" stroke-width="1.3"/><path d="M0.7 10.8 H11.7" stroke="#1c8ccc" stroke-width="1.2"/><path d="M2.5 2.8 H5 M2.5 5 H5 M2.5 7.2 H5 M7 2.8 H10 M7 5 H10 M7 7.2 H10" stroke="#6ab4e4" stroke-width="1"/><path d="M6 1.5 V10" stroke="#1c8ccc" stroke-width="1"/></svg>
<div class="t" style="left:1752px;top:278px;">SC233A</div>
<div class="t" style="left:1800px;top:278px;">8通道热电偶输入…</div>
<svg style="left:1733px;top:297px" width="13" height="16" fill="none" stroke-linejoin="round" stroke-linecap="round" ><rect x="0.7" y="0.7" width="11" height="14.8" rx="0.6" stroke="#1c8ccc" stroke-width="1.3"/><path d="M0.7 10.8 H11.7" stroke="#1c8ccc" stroke-width="1.2"/><path d="M2.5 2.8 H5 M2.5 5 H5 M2.5 7.2 H5 M7 2.8 H10 M7 5 H10 M7 7.2 H10" stroke="#6ab4e4" stroke-width="1"/><path d="M6 1.5 V10" stroke="#1c8ccc" stroke-width="1"/></svg>
<div class="t" style="left:1752px;top:298px;">SC234A</div>
<div class="t" style="left:1800px;top:298px;">16通道数字量输入…</div>
<svg style="left:1733px;top:317px" width="13" height="16" fill="none" stroke-linejoin="round" stroke-linecap="round" ><rect x="0.7" y="0.7" width="11" height="14.8" rx="0.6" stroke="#1c8ccc" stroke-width="1.3"/><path d="M0.7 10.8 H11.7" stroke="#1c8ccc" stroke-width="1.2"/><path d="M2.5 2.8 H5 M2.5 5 H5 M2.5 7.2 H5 M7 2.8 H10 M7 5 H10 M7 7.2 H10" stroke="#6ab4e4" stroke-width="1"/><path d="M6 1.5 V10" stroke="#1c8ccc" stroke-width="1"/></svg>
<div class="t" style="left:1752px;top:318px;">SC235A</div>
<div class="t" style="left:1800px;top:318px;">8通道继电器输出…</div>
<svg style="left:1733px;top:337px" width="13" height="16" fill="none" stroke-linejoin="round" stroke-linecap="round" ><rect x="0.7" y="0.7" width="11" height="14.8" rx="0.6" stroke="#1c8ccc" stroke-width="1.3"/><path d="M0.7 10.8 H11.7" stroke="#1c8ccc" stroke-width="1.2"/><path d="M2.5 2.8 H5 M2.5 5 H5 M2.5 7.2 H5 M7 2.8 H10 M7 5 H10 M7 7.2 H10" stroke="#6ab4e4" stroke-width="1"/><path d="M6 1.5 V10" stroke="#1c8ccc" stroke-width="1"/></svg>
<div class="t" style="left:1752px;top:338px;">SC235B</div>
<div class="t" style="left:1800px;top:338px;">16通道数字量输出…</div>
<svg style="left:1733px;top:357px" width="13" height="16" fill="none" stroke-linejoin="round" stroke-linecap="round" ><rect x="0.7" y="0.7" width="11" height="14.8" rx="0.6" stroke="#1c8ccc" stroke-width="1.3"/><path d="M0.7 10.8 H11.7" stroke="#1c8ccc" stroke-width="1.2"/><path d="M2.5 2.8 H5 M2.5 5 H5 M2.5 7.2 H5 M7 2.8 H10 M7 5 H10 M7 7.2 H10" stroke="#6ab4e4" stroke-width="1"/><path d="M6 1.5 V10" stroke="#1c8ccc" stroke-width="1"/></svg>
<div class="t" style="left:1752px;top:358px;">SC236A</div>
<div class="t" style="left:1800px;top:358px;">6通道4~20mA电流…</div>
<svg style="left:1733px;top:377px" width="13" height="16" fill="none" stroke-linejoin="round" stroke-linecap="round" ><rect x="0.7" y="0.7" width="11" height="14.8" rx="0.6" stroke="#1c8ccc" stroke-width="1.3"/><path d="M0.7 10.8 H11.7" stroke="#1c8ccc" stroke-width="1.2"/><path d="M2.5 2.8 H5 M2.5 5 H5 M2.5 7.2 H5 M7 2.8 H10 M7 5 H10 M7 7.2 H10" stroke="#6ab4e4" stroke-width="1"/><path d="M6 1.5 V10" stroke="#1c8ccc" stroke-width="1"/></svg>
<div class="t" style="left:1752px;top:378px;">SC236C</div>
<div class="t" style="left:1800px;top:378px;">8通道-10~10V电压…</div>
<svg style="left:1733px;top:397px" width="13" height="16" fill="none" stroke-linejoin="round" stroke-linecap="round" ><rect x="0.7" y="0.7" width="11" height="14.8" rx="0.6" stroke="#1c8ccc" stroke-width="1.3"/><path d="M0.7 10.8 H11.7" stroke="#1c8ccc" stroke-width="1.2"/><path d="M2.5 2.8 H5 M2.5 5 H5 M2.5 7.2 H5 M7 2.8 H10 M7 5 H10 M7 7.2 H10" stroke="#6ab4e4" stroke-width="1"/><path d="M6 1.5 V10" stroke="#1c8ccc" stroke-width="1"/></svg>
<div class="t" style="left:1752px;top:398px;">SC237A</div>
<div class="t" style="left:1800px;top:398px;">8通道计数/频率输…</div>
<svg style="left:1693px;top:422px" width="10" height="8" fill="none" stroke-linejoin="round" stroke-linecap="round" ><path d="M0.8 1.5 L4.8 5.5 L8.8 1.5" stroke="#404040" stroke-width="1.7" stroke-linecap="butt" stroke-linejoin="miter"/></svg>
<svg style="left:1711px;top:418px" width="17" height="16" fill="none" stroke-linejoin="round" stroke-linecap="round" ><path d="M0.5 2.5 Q0.5 1 2 1 H7 L8.5 2.5 H15 Q16.5 2.5 16.5 4 V14 Q16.5 15.5 15 15.5 H2 Q0.5 15.5 0.5 14 Z" fill="#4fb2e6" stroke="none"/><path d="M1.5 4.3 H15.5" stroke="#fff" stroke-width="0.8"/></svg>
<div class="t" style="left:1733px;top:418px;">特殊模件</div>
<svg style="left:1733px;top:437px" width="13" height="16" fill="none" stroke-linejoin="round" stroke-linecap="round" ><rect x="0.7" y="0.7" width="11" height="14.8" rx="0.6" stroke="#1c8ccc" stroke-width="1.3"/><path d="M0.7 10.8 H11.7" stroke="#1c8ccc" stroke-width="1.2"/><path d="M2.5 2.8 H5 M2.5 5 H5 M2.5 7.2 H5 M7 2.8 H10 M7 5 H10 M7 7.2 H10" stroke="#6ab4e4" stroke-width="1"/><path d="M6 1.5 V10" stroke="#1c8ccc" stroke-width="1"/></svg>
<div class="t" style="left:1752px;top:438px;">SC531A</div>
<div class="t" style="left:1800px;top:438px;">双通道LVDT输入…</div>
<svg style="left:1733px;top:457px" width="13" height="16" fill="none" stroke-linejoin="round" stroke-linecap="round" ><rect x="0.7" y="0.7" width="11" height="14.8" rx="0.6" stroke="#1c8ccc" stroke-width="1.3"/><path d="M0.7 10.8 H11.7" stroke="#1c8ccc" stroke-width="1.2"/><path d="M2.5 2.8 H5 M2.5 5 H5 M2.5 7.2 H5 M7 2.8 H10 M7 5 H10 M7 7.2 H10" stroke="#6ab4e4" stroke-width="1"/><path d="M6 1.5 V10" stroke="#1c8ccc" stroke-width="1"/></svg>
<div class="t" style="left:1752px;top:458px;">SC532B</div>
<div class="t" style="left:1800px;top:458px;">增强型单通道伺服…</div>
<svg style="left:1733px;top:477px" width="13" height="16" fill="none" stroke-linejoin="round" stroke-linecap="round" ><rect x="0.7" y="0.7" width="11" height="14.8" rx="0.6" stroke="#1c8ccc" stroke-width="1.3"/><path d="M0.7 10.8 H11.7" stroke="#1c8ccc" stroke-width="1.2"/><path d="M2.5 2.8 H5 M2.5 5 H5 M2.5 7.2 H5 M7 2.8 H10 M7 5 H10 M7 7.2 H10" stroke="#6ab4e4" stroke-width="1"/><path d="M6 1.5 V10" stroke="#1c8ccc" stroke-width="1"/></svg>
<div class="t" style="left:1752px;top:478px;">SC533A</div>
<div class="t" style="left:1800px;top:478px;">单通道超速保护模件</div>
<svg style="left:1733px;top:497px" width="13" height="16" fill="none" stroke-linejoin="round" stroke-linecap="round" ><rect x="0.7" y="0.7" width="11" height="14.8" rx="0.6" stroke="#1c8ccc" stroke-width="1.3"/><path d="M0.7 10.8 H11.7" stroke="#1c8ccc" stroke-width="1.2"/><path d="M2.5 2.8 H5 M2.5 5 H5 M2.5 7.2 H5 M7 2.8 H10 M7 5 H10 M7 7.2 H10" stroke="#6ab4e4" stroke-width="1"/><path d="M6 1.5 V10" stroke="#1c8ccc" stroke-width="1"/></svg>
<div class="t" style="left:1752px;top:498px;">SC534A</div>
<div class="t" style="left:1800px;top:498px;">2通道位移轴振监…</div>
<svg style="left:1733px;top:517px" width="13" height="16" fill="none" stroke-linejoin="round" stroke-linecap="round" ><rect x="0.7" y="0.7" width="11" height="14.8" rx="0.6" stroke="#1c8ccc" stroke-width="1.3"/><path d="M0.7 10.8 H11.7" stroke="#1c8ccc" stroke-width="1.2"/><path d="M2.5 2.8 H5 M2.5 5 H5 M2.5 7.2 H5 M7 2.8 H10 M7 5 H10 M7 7.2 H10" stroke="#6ab4e4" stroke-width="1"/><path d="M6 1.5 V10" stroke="#1c8ccc" stroke-width="1"/></svg>
<div class="t" style="left:1752px;top:518px;">SC535A</div>
<div class="t" style="left:1800px;top:518px;">2通道瓦振监视模件</div>
<svg style="left:1733px;top:537px" width="13" height="16" fill="none" stroke-linejoin="round" stroke-linecap="round" ><rect x="0.7" y="0.7" width="11" height="14.8" rx="0.6" stroke="#1c8ccc" stroke-width="1.3"/><path d="M0.7 10.8 H11.7" stroke="#1c8ccc" stroke-width="1.2"/><path d="M2.5 2.8 H5 M2.5 5 H5 M2.5 7.2 H5 M7 2.8 H10 M7 5 H10 M7 7.2 H10" stroke="#6ab4e4" stroke-width="1"/><path d="M6 1.5 V10" stroke="#1c8ccc" stroke-width="1"/></svg>
<div class="t" style="left:1752px;top:538px;">SC536A</div>
<div class="t" style="left:1800px;top:538px;">单通道偏心监视模件</div>
<svg style="left:1693px;top:562px" width="10" height="8" fill="none" stroke-linejoin="round" stroke-linecap="round" ><path d="M0.8 1.5 L4.8 5.5 L8.8 1.5" stroke="#404040" stroke-width="1.7" stroke-linecap="butt" stroke-linejoin="miter"/></svg>
<svg style="left:1711px;top:558px" width="17" height="16" fill="none" stroke-linejoin="round" stroke-linecap="round" ><path d="M0.5 2.5 Q0.5 1 2 1 H7 L8.5 2.5 H15 Q16.5 2.5 16.5 4 V14 Q16.5 15.5 15 15.5 H2 Q0.5 15.5 0.5 14 Z" fill="#4fb2e6" stroke="none"/><path d="M1.5 4.3 H15.5" stroke="#fff" stroke-width="0.8"/></svg>
<div class="t" style="left:1733px;top:558px;">通讯模件</div>
<svg style="left:1733px;top:577px" width="13" height="16" fill="none" stroke-linejoin="round" stroke-linecap="round" ><rect x="0.7" y="0.7" width="11" height="14.8" rx="0.6" stroke="#1c8ccc" stroke-width="1.3"/><path d="M0.7 10.8 H11.7" stroke="#1c8ccc" stroke-width="1.2"/><path d="M2.5 2.8 H5 M2.5 5 H5 M2.5 7.2 H5 M7 2.8 H10 M7 5 H10 M7 7.2 H10" stroke="#6ab4e4" stroke-width="1"/><path d="M6 1.5 V10" stroke="#1c8ccc" stroke-width="1"/></svg>
<div class="t" style="left:1752px;top:578px;">SC631A</div>
<div class="t" style="left:1800px;top:578px;">双通道ModbusRT…</div>
<svg style="left:1733px;top:597px" width="13" height="16" fill="none" stroke-linejoin="round" stroke-linecap="round" ><rect x="0.7" y="0.7" width="11" height="14.8" rx="0.6" stroke="#1c8ccc" stroke-width="1.3"/><path d="M0.7 10.8 H11.7" stroke="#1c8ccc" stroke-width="1.2"/><path d="M2.5 2.8 H5 M2.5 5 H5 M2.5 7.2 H5 M7 2.8 H10 M7 5 H10 M7 7.2 H10" stroke="#6ab4e4" stroke-width="1"/><path d="M6 1.5 V10" stroke="#1c8ccc" stroke-width="1"/></svg>
<div class="t" style="left:1752px;top:598px;">SC631B</div>
<div class="t" style="left:1800px;top:598px;">单通道ModbusTC…</div>
<svg style="left:1733px;top:617px" width="13" height="16" fill="none" stroke-linejoin="round" stroke-linecap="round" ><rect x="0.7" y="0.7" width="11" height="14.8" rx="0.6" stroke="#1c8ccc" stroke-width="1.3"/><path d="M0.7 10.8 H11.7" stroke="#1c8ccc" stroke-width="1.2"/><path d="M2.5 2.8 H5 M2.5 5 H5 M2.5 7.2 H5 M7 2.8 H10 M7 5 H10 M7 7.2 H10" stroke="#6ab4e4" stroke-width="1"/><path d="M6 1.5 V10" stroke="#1c8ccc" stroke-width="1"/></svg>
<div class="t" style="left:1752px;top:618px;">SC631C</div>
<div class="t" style="left:1800px;top:618px;">双通道通用总线通…</div>
<div style="position:absolute;left:0px;top:837px;width:1920px;height:1px;background:#c4c4c4"></div>
<div style="position:absolute;left:0px;top:838px;width:1918px;height:19px;background:#d9d9d9"></div>
<div class="t" style="left:4px;top:840px;">消息窗口</div>
<svg style="left:1872px;top:841px" width="10" height="12" fill="none" stroke-linejoin="round" stroke-linecap="round" ><path d="M2 0.7 H8 M1 7.3 H9" stroke="#000" stroke-width="1.3" stroke-linecap="butt"/><rect x="2.6" y="0.7" width="4.8" height="6.6" fill="none" stroke="#000" stroke-width="1.2"/><rect x="2.6" y="0.7" width="2.4" height="6.6" fill="#000"/><path d="M5 7.3 V11" stroke="#000" stroke-width="1.3"/></svg>
<svg style="left:1887px;top:842px" width="10" height="10" fill="none" stroke-linejoin="round" stroke-linecap="round" ><rect x="3.3" y="0.8" width="5.6" height="4.6" stroke="#000" stroke-width="1.3"/><rect x="0.7" y="4" width="5.6" height="5" fill="#dadada" stroke="#000" stroke-width="1.3"/><rect x="3" y="0.3" width="6.3" height="1.8" fill="#000" stroke="none"/><rect x="0.3" y="3.5" width="6.3" height="1.8" fill="#000" stroke="none"/></svg>
<svg style="left:1904px;top:843px" width="11" height="9" fill="none" stroke-linejoin="round" stroke-linecap="round" ><path d="M0.8 0.8 L10 8.2 M10 0.8 L0.8 8.2" stroke="#000" stroke-width="1.7" stroke-linecap="butt"/></svg>
<div style="position:absolute;left:0px;top:857px;width:1920px;height:1px;background:#c0c0c0"></div>
<div style="position:absolute;left:2px;top:858px;width:64px;height:21px;background:#cce4f7;border:1px solid #99c9ef"></div>
<svg style="left:6px;top:861px" width="15" height="15" fill="none" stroke-linejoin="round" stroke-linecap="round" ><rect x="0.6" y="0.6" width="13.8" height="13.8" rx="1.5" stroke="#1c8ccc" stroke-width="1.2"/><path d="M7.5 6 V12" stroke="#1c8ccc" stroke-width="1.6"/><circle cx="7.5" cy="3.6" r="1" fill="#1c8ccc"/></svg>
<div class="t" style="left:24px;top:862px;font-family:Liberation Sans,sans-serif;font-size:12.5px">0 信息</div>
<div style="position:absolute;left:68px;top:859px;width:1px;height:20px;background:#c8c8c8"></div>
<div style="position:absolute;left:73px;top:858px;width:64px;height:21px;background:#cce4f7;border:1px solid #99c9ef"></div>
<svg style="left:77px;top:861px" width="16" height="16" fill="none" stroke-linejoin="round" stroke-linecap="round" ><rect x="0" y="0" width="16" height="16" rx="2.5" fill="#f3614a"/><path d="M4 4 L12 12 M12 4 L4 12" stroke="#fff" stroke-width="1.4"/></svg>
<div class="t" style="left:95px;top:862px;font-family:Liberation Sans,sans-serif;font-size:12.5px">0 错误</div>
<div style="position:absolute;left:139px;top:859px;width:1px;height:20px;background:#c8c8c8"></div>
<div style="position:absolute;left:144px;top:858px;width:64px;height:21px;background:#cce4f7;border:1px solid #99c9ef"></div>
<svg style="left:147px;top:861px" width="17" height="16" fill="none" stroke-linejoin="round" stroke-linecap="round" ><path d="M8.5 1 L16.3 15.2 H0.7 Z" fill="#f5d32a" stroke="#6a5a10" stroke-width="0.9"/><path d="M8.5 5.5 V10.5" stroke="#222" stroke-width="1.6"/><circle cx="8.5" cy="12.8" r="0.9" fill="#222"/></svg>
<div class="t" style="left:166px;top:862px;font-family:Liberation Sans,sans-serif;font-size:12.5px">0 警告</div>
<div style="position:absolute;left:210px;top:859px;width:1px;height:20px;background:#c8c8c8"></div>
<svg style="left:219px;top:860px" width="16" height="17" fill="none" stroke-linejoin="round" stroke-linecap="round" ><path d="M6 1 H9 V7 H13 V10 H2 V7 H6 Z" stroke="#1c8ccc" stroke-width="1.1"/><path d="M2 10 V16 H13 V10 M4.5 12 V16 M7.5 12 V16 M10.5 12 V16" stroke="#1c8ccc" stroke-width="1.1"/></svg>
<div class="t" style="left:235px;top:862px;font-family:Liberation Sans,sans-serif;font-size:12.5px">清除</div>
<div style="position:absolute;left:2px;top:881px;width:1916px;height:114px;background:#fff;border:1px solid #828790"></div>
<div style="position:absolute;left:0px;top:996px;width:1920px;height:1px;background:#b4b4b4"></div>
<div style="position:absolute;left:0px;top:997px;width:1920px;height:22px;background:#f0f0f0"></div>
<div style="position:absolute;left:74px;top:997px;width:200px;height:1px;background:#d8d8d8"></div>
<div style="position:absolute;left:1px;top:997px;width:73px;height:22px;background:#fff"></div>
<div style="position:absolute;left:74px;top:1017px;width:200px;height:1px;background:#d8d8d8"></div>
<div style="position:absolute;left:144px;top:999px;width:1px;height:18px;background:#d8d8d8"></div>
<div style="position:absolute;left:216px;top:999px;width:1px;height:18px;background:#d8d8d8"></div>
<div class="t" style="left:12px;top:1001px;font-family:Liberation Sans,sans-serif;font-size:13px">消息窗口</div>
<div class="t" style="left:83px;top:1000px;font-family:Liberation Sans,sans-serif;font-size:13px">交叉引用</div>
<div class="t" style="left:155px;top:1000px;font-family:Liberation Sans,sans-serif;font-size:13px">查找结果</div>
<div class="t" style="left:227px;top:1000px;font-family:Liberation Sans,sans-serif;font-size:13px">调用树</div>
<div style="position:absolute;left:0px;top:1020px;width:1920px;height:18px;background:#cfdcec"></div>
<svg style="left:154px;top:1023px" width="16" height="16" fill="none" stroke-linejoin="round" stroke-linecap="round" ><rect x="0" y="0" width="16" height="16" rx="2.5" fill="#f3614a"/><path d="M4 4 L12 12 M12 4 L4 12" stroke="#fff" stroke-width="1.4"/></svg>
<div class="t" style="left:172px;top:1022px;font-family:Liberation Sans,sans-serif;font-size:13px">0</div>
<svg style="left:180px;top:1023px" width="17" height="16" fill="none" stroke-linejoin="round" stroke-linecap="round" ><path d="M8.5 1 L16.3 15.2 H0.7 Z" fill="#f5d32a" stroke="#6a5a10" stroke-width="0.9"/><path d="M8.5 5.5 V10.5" stroke="#222" stroke-width="1.6"/><circle cx="8.5" cy="12.8" r="0.9" fill="#222"/></svg>
<div class="t" style="left:198px;top:1022px;font-family:Liberation Sans,sans-serif;font-size:13px">0</div>
<div style="position:absolute;left:247px;top:1023px;width:1px;height:15px;background:#b8c4d4"></div>
<div style="position:absolute;left:1591px;top:1023px;width:1px;height:15px;background:#c4d0de"></div>
<div style="position:absolute;left:1596px;top:1023px;width:141px;height:15px;background:#008a22;border-radius:2px 2px 0 0;box-shadow:0 0 0 1px rgba(30,110,170,0.5)"></div>
<div class="t" style="left:1596px;top:1023px;width:141px;text-align:center;color:#fff;font-size:12px;line-height:17px;height:17px">选中：设备配置 <span style="color:#f0f0a0">[Device1]</span></div>
<div style="position:absolute;left:1743px;top:1023px;width:78px;height:15px;background:#008a22;border-radius:2px 2px 0 0;box-shadow:0 0 0 1px rgba(30,110,170,0.5)"></div>
<div class="t" style="left:1743px;top:1023px;width:78px;text-align:center;color:#fff;font-size:12px;line-height:17px;height:17px"><span style="color:#f0f0a0">Device1:admin</span></div>
<div style="position:absolute;left:1827px;top:1023px;width:43px;height:15px;background:#f0643a;border-radius:2px 2px 0 0;box-shadow:0 0 0 1px rgba(30,110,170,0.5)"></div>
<div class="t" style="left:1827px;top:1023px;width:43px;text-align:center;color:#fff;font-size:12px;line-height:17px;height:17px">未联机</div>
<div style="position:absolute;left:1876px;top:1023px;width:43px;height:15px;background:#008a22;border-radius:2px 2px 0 0;box-shadow:0 0 0 1px rgba(30,110,170,0.5)"></div>
<div class="t" style="left:1876px;top:1023px;width:43px;text-align:center;color:#fff;font-size:12px;line-height:17px;height:17px">已注册</div>
</body></html>
